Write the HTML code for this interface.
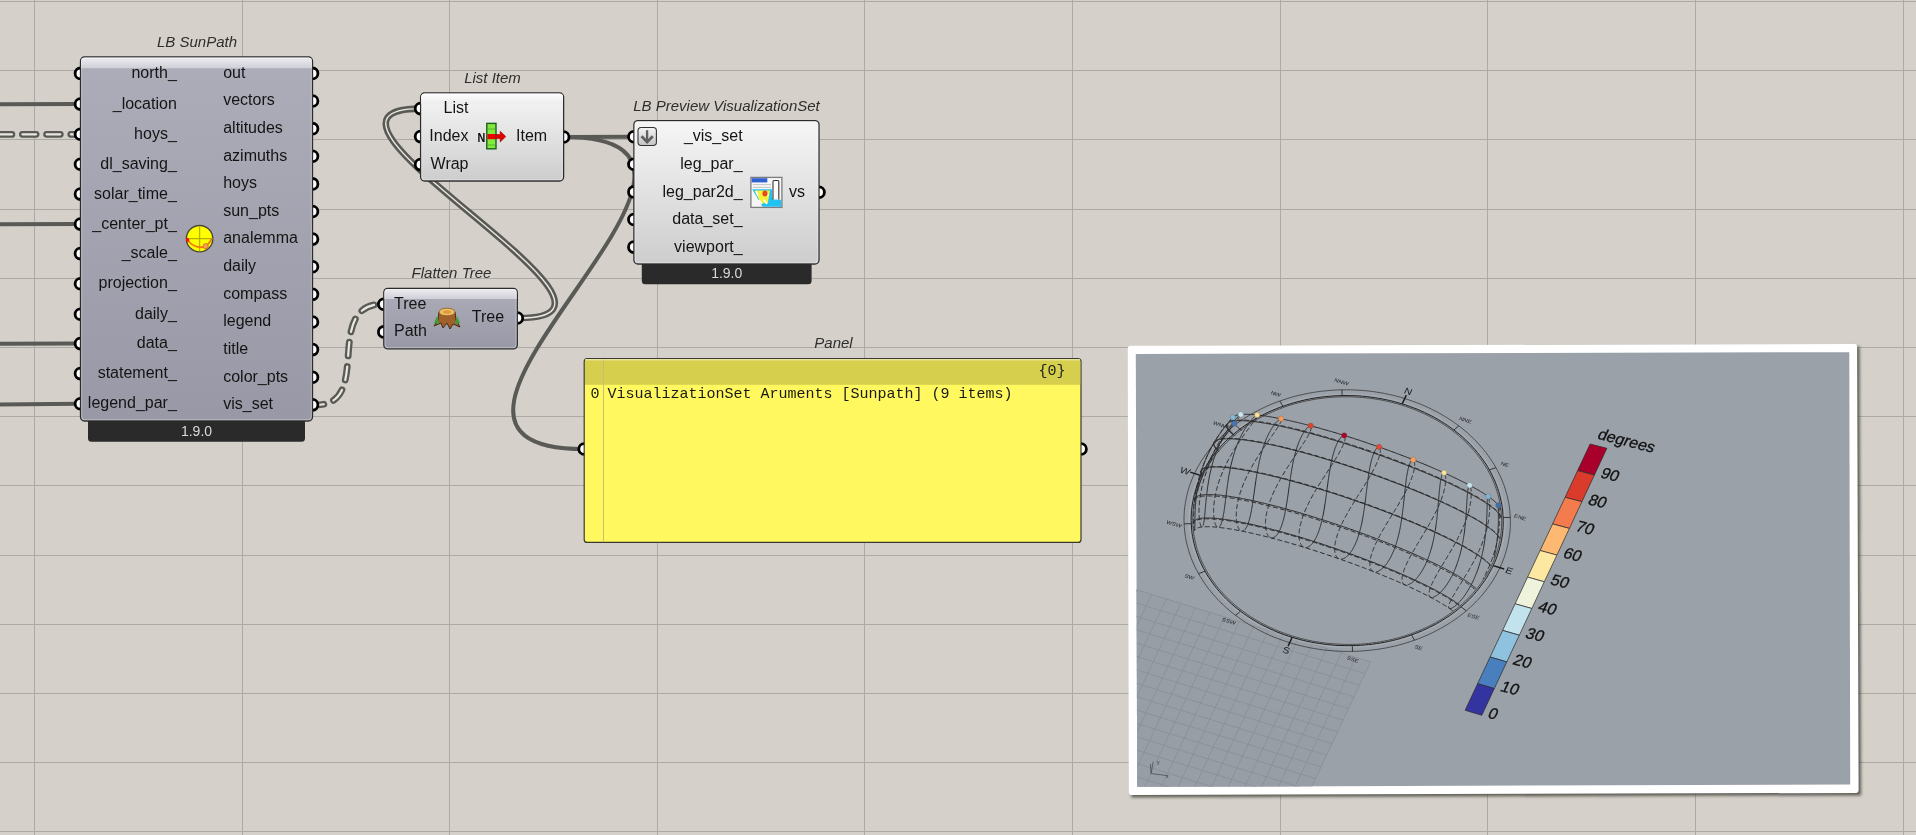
<!DOCTYPE html><html><head><meta charset="utf-8"><style>
html,body{margin:0;padding:0;background:#d5d1ca;width:1916px;height:835px;overflow:hidden}
svg{display:block;will-change:transform}
.t{font-family:"Liberation Sans", sans-serif;font-size:16px;fill:#141414}
.ti{font-family:"Liberation Sans", sans-serif;font-size:15px;font-style:italic;fill:#2e2e2e}
.v{font-family:"Liberation Sans", sans-serif;font-size:14px;fill:#d9d9d9}
.m{font-family:"Liberation Mono", monospace;font-size:15px;fill:#1a1a1a}
</style></head><body>
<svg width="1916" height="835" viewBox="0 0 1916 835">
<defs>
<linearGradient id="gLav" x1="0" y1="0" x2="0" y2="1"><stop offset="0" stop-color="#adadba"/><stop offset="1" stop-color="#9898a6"/></linearGradient>
<linearGradient id="gLavH" x1="0" y1="0" x2="0" y2="1"><stop offset="0" stop-color="#ececf0"/><stop offset="1" stop-color="#cfcfd8"/></linearGradient>
<linearGradient id="gLt" x1="0" y1="0" x2="0" y2="1"><stop offset="0" stop-color="#f6f6f6"/><stop offset="1" stop-color="#cdcdcd"/></linearGradient>
<linearGradient id="gLtH" x1="0" y1="0" x2="0" y2="1"><stop offset="0" stop-color="#fdfdfd"/><stop offset="1" stop-color="#ececec"/></linearGradient>
<linearGradient id="gBtn" x1="0" y1="0" x2="0" y2="1"><stop offset="0" stop-color="#f4f4f4"/><stop offset="1" stop-color="#c4c4c4"/></linearGradient>
</defs>

<rect x="0" y="0" width="1916" height="835" fill="#d5d1ca"/>
<path d="M34.5 0V835 M242.5 0V835 M449.5 0V835 M657.5 0V835 M864.5 0V835 M1072.5 0V835 M1280.5 0V835 M1487.5 0V835 M1695.5 0V835 M1903.5 0V835 M0 1.5H1916 M0 70.5H1916 M0 139.5H1916 M0 209.5H1916 M0 278.5H1916 M0 347.5H1916 M0 416.5H1916 M0 485.5H1916 M0 555.5H1916 M0 624.5H1916 M0 693.5H1916 M0 762.5H1916 M0 831.5H1916" stroke="#000" stroke-opacity="0.19" stroke-width="1" fill="none" shape-rendering="crispEdges"/>
<path d="M0 104.3 L80 104" stroke="#595955" stroke-width="4" fill="none"/>
<path d="M-1.8 134.4 L80 134.3" stroke="#595955" stroke-width="6.8" fill="none" stroke-dasharray="13.7 10.5" stroke-dashoffset="0" stroke-linecap="round"/>
<path d="M-1.8 134.4 L80 134.3" stroke="#ebe8e2" stroke-width="2.2" fill="none" stroke-dasharray="13.7 10.5" stroke-dashoffset="0" stroke-linecap="round"/>
<path d="M0 224.3 L80 224.1" stroke="#595955" stroke-width="4" fill="none"/>
<path d="M0 343.8 L80 343.6" stroke="#595955" stroke-width="4" fill="none"/>
<path d="M0 404.5 L80 403.8" stroke="#595955" stroke-width="4" fill="none"/>
<path d="M316 405 C374 405 321.5 304 383.5 304" stroke="#595955" stroke-width="6.8" fill="none" stroke-dasharray="13.7 10.5" stroke-dashoffset="6" stroke-linecap="round"/>
<path d="M316 405 C374 405 321.5 304 383.5 304" stroke="#ebe8e2" stroke-width="2.2" fill="none" stroke-dasharray="13.7 10.5" stroke-dashoffset="6" stroke-linecap="round"/>
<path d="M520 318 C672 318 268.6 108.6 420.6 108.6" stroke="#595955" stroke-width="6.6" fill="none"/>
<path d="M520 318 C672 318 268.6 108.6 420.6 108.6" stroke="#ebe8e2" stroke-width="1.4" fill="none"/>
<path d="M563.6 137 L633.9 136.7" stroke="#595955" stroke-width="4" fill="none"/>
<path d="M563.6 137 C800.6 137 347 449 584 449" stroke="#595955" stroke-width="4" fill="none"/>
<circle cx="80.5" cy="73.4" r="5.4" fill="#fff" stroke="#000" stroke-width="2.8"/>
<circle cx="80.5" cy="104.1" r="5.4" fill="#fff" stroke="#000" stroke-width="2.8"/>
<circle cx="80.5" cy="134.3" r="5.4" fill="#fff" stroke="#000" stroke-width="2.8"/>
<circle cx="80.5" cy="164.2" r="5.4" fill="#fff" stroke="#000" stroke-width="2.8"/>
<circle cx="80.5" cy="194.1" r="5.4" fill="#fff" stroke="#000" stroke-width="2.8"/>
<circle cx="80.5" cy="224.1" r="5.4" fill="#fff" stroke="#000" stroke-width="2.8"/>
<circle cx="80.5" cy="253.6" r="5.4" fill="#fff" stroke="#000" stroke-width="2.8"/>
<circle cx="80.5" cy="283.8" r="5.4" fill="#fff" stroke="#000" stroke-width="2.8"/>
<circle cx="80.5" cy="314.2" r="5.4" fill="#fff" stroke="#000" stroke-width="2.8"/>
<circle cx="80.5" cy="343.6" r="5.4" fill="#fff" stroke="#000" stroke-width="2.8"/>
<circle cx="80.5" cy="373.6" r="5.4" fill="#fff" stroke="#000" stroke-width="2.8"/>
<circle cx="80.5" cy="403.8" r="5.4" fill="#fff" stroke="#000" stroke-width="2.8"/>
<circle cx="312.5" cy="73.4" r="5.4" fill="#fff" stroke="#000" stroke-width="2.8"/>
<circle cx="312.5" cy="101.02000000000001" r="5.4" fill="#fff" stroke="#000" stroke-width="2.8"/>
<circle cx="312.5" cy="128.64000000000001" r="5.4" fill="#fff" stroke="#000" stroke-width="2.8"/>
<circle cx="312.5" cy="156.26" r="5.4" fill="#fff" stroke="#000" stroke-width="2.8"/>
<circle cx="312.5" cy="183.88" r="5.4" fill="#fff" stroke="#000" stroke-width="2.8"/>
<circle cx="312.5" cy="211.5" r="5.4" fill="#fff" stroke="#000" stroke-width="2.8"/>
<circle cx="312.5" cy="239.12" r="5.4" fill="#fff" stroke="#000" stroke-width="2.8"/>
<circle cx="312.5" cy="266.74" r="5.4" fill="#fff" stroke="#000" stroke-width="2.8"/>
<circle cx="312.5" cy="294.36" r="5.4" fill="#fff" stroke="#000" stroke-width="2.8"/>
<circle cx="312.5" cy="321.98" r="5.4" fill="#fff" stroke="#000" stroke-width="2.8"/>
<circle cx="312.5" cy="349.6" r="5.4" fill="#fff" stroke="#000" stroke-width="2.8"/>
<circle cx="312.5" cy="377.22" r="5.4" fill="#fff" stroke="#000" stroke-width="2.8"/>
<circle cx="312.5" cy="404.84000000000003" r="5.4" fill="#fff" stroke="#000" stroke-width="2.8"/>
<path d="M88 417 H305 V438.2 Q305 441.7 301.5 441.7 H91.5 Q88 441.7 88 438.2 Z" fill="#2a2a2a"/>
<text class="v" x="196.5" y="435.7" text-anchor="middle">1.9.0</text>
<rect x="80.5" y="57" width="232.0" height="364" rx="4" fill="url(#gLav)" stroke="#2c2c2c" stroke-width="1.3"/>
<path d="M81.1 68.2 V61 Q81.1 57.6 84.5 57.6 H308.5 Q311.9 57.6 311.9 61 V68.2 Z" fill="url(#gLavH)"/>
<rect x="81.7" y="58.2" width="229.6" height="361.6" rx="3" fill="none" stroke="#ffffff" stroke-opacity="0.35" stroke-width="1"/>
<text class="ti" x="197" y="47" text-anchor="middle">LB SunPath</text>
<text class="t" x="176.8" y="77.9" text-anchor="end">north_</text>
<text class="t" x="176.8" y="108.6" text-anchor="end">_location</text>
<text class="t" x="176.8" y="138.8" text-anchor="end">hoys_</text>
<text class="t" x="176.8" y="168.7" text-anchor="end">dl_saving_</text>
<text class="t" x="176.8" y="198.6" text-anchor="end">solar_time_</text>
<text class="t" x="176.8" y="228.6" text-anchor="end">_center_pt_</text>
<text class="t" x="176.8" y="258.1" text-anchor="end">_scale_</text>
<text class="t" x="176.8" y="288.3" text-anchor="end">projection_</text>
<text class="t" x="176.8" y="318.7" text-anchor="end">daily_</text>
<text class="t" x="176.8" y="348.1" text-anchor="end">data_</text>
<text class="t" x="176.8" y="378.1" text-anchor="end">statement_</text>
<text class="t" x="176.8" y="408.3" text-anchor="end">legend_par_</text>
<text class="t" x="223.2" y="77.7">out</text>
<text class="t" x="223.2" y="105.3">vectors</text>
<text class="t" x="223.2" y="132.9">altitudes</text>
<text class="t" x="223.2" y="160.6">azimuths</text>
<text class="t" x="223.2" y="188.2">hoys</text>
<text class="t" x="223.2" y="215.8">sun_pts</text>
<text class="t" x="223.2" y="243.4">analemma</text>
<text class="t" x="223.2" y="271.0">daily</text>
<text class="t" x="223.2" y="298.7">compass</text>
<text class="t" x="223.2" y="326.3">legend</text>
<text class="t" x="223.2" y="353.9">title</text>
<text class="t" x="223.2" y="381.5">color_pts</text>
<text class="t" x="223.2" y="409.1">vis_set</text>
<g transform="translate(199.6 238.7)">
<circle r="13.2" fill="#ffff00" stroke="#4a4a3a" stroke-width="1.4"/>
<path d="M0 -12.5V12.5M-12.5 0H12.5" stroke="#b8b000" stroke-width="1.3"/>
<path d="M-12 1.5 Q-6 9 3 8.5 Q9 7 12.5 -0.5" stroke="#f07a10" stroke-width="1.8" fill="none"/>
<circle cx="-12" cy="1.2" r="1.8" fill="#ff1010"/>
<circle cx="6" cy="7.5" r="2.6" fill="#f4a050" stroke="#d07020" stroke-width="0.8"/>
</g>
<circle cx="420.6" cy="108.6" r="5.4" fill="#fff" stroke="#000" stroke-width="2.8"/>
<circle cx="420.6" cy="136.6" r="5.4" fill="#fff" stroke="#000" stroke-width="2.8"/>
<circle cx="420.6" cy="164.6" r="5.4" fill="#fff" stroke="#000" stroke-width="2.8"/>
<circle cx="563.6" cy="137" r="5.4" fill="#fff" stroke="#000" stroke-width="2.8"/>
<rect x="420.6" y="93" width="143.0" height="88" rx="4" fill="url(#gLt)" stroke="#2c2c2c" stroke-width="1.3"/>
<path d="M421.20000000000005 104 V97 Q421.20000000000005 93.6 424.6 93.6 H559.6 Q563.0 93.6 563.0 97 V104 Z" fill="url(#gLtH)"/>
<rect x="421.8" y="94.2" width="140.6" height="85.6" rx="3" fill="none" stroke="#ffffff" stroke-opacity="0.35" stroke-width="1"/>
<text class="ti" x="492.5" y="82.6" text-anchor="middle">List Item</text>
<text class="t" x="468.5" y="113.2" text-anchor="end">List</text>
<text class="t" x="468.5" y="141.2" text-anchor="end">Index</text>
<text class="t" x="468.5" y="169.2" text-anchor="end">Wrap</text>
<text class="t" x="516" y="141.4">Item</text>
<g>
<text x="477.4" y="141.9" textLength="7.8" lengthAdjust="spacingAndGlyphs" style="font-family:'Liberation Sans',sans-serif;font-weight:bold;font-size:13.6px" fill="#0a0a0a">N</text>
<rect x="486.8" y="123.4" width="9.2" height="25.4" fill="#86e83c" stroke="#17601a" stroke-width="1.4"/>
<path d="M487.5 129H495M487.5 145H495" stroke="#4fb82a" stroke-width="1"/>
<rect x="487.4" y="134" width="7.8" height="5.2" fill="#ee0000"/>
<path d="M495.5 134.6H500.2V131.2L505.8 136.6L500.2 142V138.6H495.5Z" fill="#e00000" stroke="#900" stroke-width="0.6"/>
</g>
<circle cx="383.8" cy="304.3" r="5.4" fill="#fff" stroke="#000" stroke-width="2.8"/>
<circle cx="383.8" cy="331.9" r="5.4" fill="#fff" stroke="#000" stroke-width="2.8"/>
<circle cx="517.3" cy="318" r="5.4" fill="#fff" stroke="#000" stroke-width="2.8"/>
<rect x="383.8" y="288.4" width="133.49999999999994" height="60.5" rx="4" fill="url(#gLav)" stroke="#2c2c2c" stroke-width="1.3"/>
<path d="M384.40000000000003 298.9 V292.4 Q384.40000000000003 289.0 387.8 289.0 H513.3 Q516.6999999999999 289.0 516.6999999999999 292.4 V298.9 Z" fill="url(#gLavH)"/>
<rect x="385.0" y="289.59999999999997" width="131.09999999999994" height="58.1" rx="3" fill="none" stroke="#ffffff" stroke-opacity="0.35" stroke-width="1"/>
<text class="ti" x="451.5" y="278" text-anchor="middle">Flatten Tree</text>
<text class="t" x="394" y="308.6">Tree</text>
<text class="t" x="394" y="335.8">Path</text>
<text class="t" x="471.8" y="322.4">Tree</text>
<g transform="translate(447 318)">
<path d="M-13 8 L-9 2 L-8 -6 Q0 -10 8 -6 L9 2 L13 9 L6 6 L3 11 L0 5 L-4 10 L-6 5 Z" fill="#a0602a" stroke="#4a2a10" stroke-width="1"/>
<ellipse cx="0" cy="-6" rx="8" ry="3.8" fill="#f0c060" stroke="#8a5a20" stroke-width="0.8"/>
<ellipse cx="0" cy="-6" rx="4" ry="1.8" fill="#d89a40"/>
<path d="M-13 5 L-10 -2 L-8 6Z M13 5 L10 -2 L8 6Z" fill="#3aa03a"/>
</g>
<circle cx="633.9" cy="136.7" r="5.4" fill="#fff" stroke="#000" stroke-width="2.8"/>
<circle cx="633.9" cy="164.29999999999998" r="5.4" fill="#fff" stroke="#000" stroke-width="2.8"/>
<circle cx="633.9" cy="191.89999999999998" r="5.4" fill="#fff" stroke="#000" stroke-width="2.8"/>
<circle cx="633.9" cy="219.5" r="5.4" fill="#fff" stroke="#000" stroke-width="2.8"/>
<circle cx="633.9" cy="247.1" r="5.4" fill="#fff" stroke="#000" stroke-width="2.8"/>
<circle cx="819" cy="192.3" r="5.4" fill="#fff" stroke="#000" stroke-width="2.8"/>
<path d="M641.8 260 H811.6 V280.7 Q811.6 284.2 808.1 284.2 H645.3 Q641.8 284.2 641.8 280.7 Z" fill="#2a2a2a"/>
<text class="v" x="726.7" y="278.2" text-anchor="middle">1.9.0</text>
<rect x="633.9" y="120.6" width="185.10000000000002" height="143.4" rx="4" fill="url(#gLt)" stroke="#2c2c2c" stroke-width="1.3"/>
<rect x="635.1" y="121.8" width="182.70000000000002" height="141.0" rx="3" fill="none" stroke="#ffffff" stroke-opacity="0.35" stroke-width="1"/>
<text class="ti" x="726.5" y="110.8" text-anchor="middle">LB Preview VisualizationSet</text>
<text class="t" x="742.6" y="141.3" text-anchor="end">_vis_set</text>
<text class="t" x="742.6" y="168.9" text-anchor="end">leg_par_</text>
<text class="t" x="742.6" y="196.5" text-anchor="end">leg_par2d_</text>
<text class="t" x="742.6" y="224.1" text-anchor="end">data_set_</text>
<text class="t" x="742.6" y="251.7" text-anchor="end">viewport_</text>
<text class="t" x="789" y="196.6">vs</text>
<rect x="638" y="127.5" width="18.4" height="18" rx="3.2" fill="url(#gBtn)" stroke="#333" stroke-width="1.1"/>
<path d="M647.1 130.2V141.6" stroke="#606060" stroke-width="2.3" fill="none"/>
<path d="M641.5 136.3L647.1 142L652.8 136.3" stroke="#606060" stroke-width="2.7" fill="none"/>
<g>
<rect x="750.9" y="177.4" width="31" height="30" fill="#f6f6f6" stroke="#7c7c7c" stroke-width="1.3"/>
<rect x="751.7" y="178.2" width="15.6" height="4.2" fill="#2f5fd0"/>
<path d="M753 184.6H771M753 187.4H771" stroke="#c4c4c4" stroke-width="1"/>
<path d="M752.2 189.2 H772 V198 L781.2 200 V206.8 H762.5 Z" fill="#22c2f2"/>
<path d="M754.6 190.6 H770 L767.8 203.2 H760.8 Z" fill="#f4f23c"/>
<path d="M756 191 L758 196 M766 191 L768 196 M759 200 L762 204 M764 200 L767 204" stroke="#ffffff" stroke-width="1.6"/>
<ellipse cx="765" cy="193.6" rx="2.6" ry="3" fill="#ea4a12"/>
<path d="M773 199.5 V181.6 Q773 180.5 774 180.5 H777.8 Q778.8 180.5 778.8 181.6 V199.5" fill="#fff" stroke="#333" stroke-width="1.1"/>
</g>
<circle cx="584.2" cy="449" r="5.4" fill="#fff" stroke="#000" stroke-width="2.8"/>
<circle cx="1081" cy="449" r="5.4" fill="#fff" stroke="#000" stroke-width="2.8"/>
<rect x="584.2" y="358.6" width="496.79999999999995" height="183.79999999999995" rx="3" fill="#fff85e" stroke="#3a3a30" stroke-width="1.2"/>
<rect x="585.0" y="359.40000000000003" width="495.19999999999993" height="25.399999999999988" fill="#d6cf4e"/>
<path d="M585.2 359.8H1080" stroke="#f4f0c0" stroke-width="1"/>
<path d="M603.5 359.6V541.4" stroke="#c8c070" stroke-width="1"/>
<text class="ti" x="833.5" y="348" text-anchor="middle">Panel</text>
<text class="m" x="1038.5" y="375">{0}</text>
<text class="m" x="590.5" y="397.8">0</text>
<text class="m" x="607.5" y="397.8">VisualizationSet Aruments [Sunpath] (9 items)</text>
<defs><filter id="fsh" x="-5%" y="-5%" width="110%" height="110%"><feGaussianBlur stdDeviation="1.8"/></filter>
<clipPath id="vpclip"><polygon points="1135.8,353.9 1849.3,352.2 1850.2,784.6 1137.2,786.8"/></clipPath></defs>
<polygon points="1130.2,348.3 1859.6,346.6 1861.1,795.4 1131.3,797.5" fill="#3a3832" fill-opacity="0.75" filter="url(#fsh)"/>
<polygon points="1130.2,348.3 1854.6,346.6 1856.1,790.4 1131.3,792.5" fill="#ffffff" stroke="#ffffff" stroke-width="5" stroke-linejoin="round" transform="translate(0 0)"/>
<polygon points="1135.8,353.9 1849.3,352.2 1850.2,784.6 1137.2,786.8" fill="#9ba1a9"/>
<g clip-path="url(#vpclip)">
<polygon points="1370.6,661.9 874.2,508.9 687.2,905.7 1183.6,1058.7" fill="#989ea6"/>
<path d="M1370.6 661.9L1183.6 1058.7M1356.0 657.4L1169.0 1054.2M1341.4 652.9L1154.4 1049.7M1326.8 648.4L1139.8 1045.2M1312.2 643.9L1125.2 1040.7M1297.6 639.4L1110.6 1036.2M1283.0 634.9L1096.0 1031.7M1268.4 630.4L1081.4 1027.2M1253.8 625.9L1066.8 1022.7M1239.2 621.4L1052.2 1018.2M1224.6 616.9L1037.6 1013.7M1210.0 612.4L1023.0 1009.2M1195.4 607.9L1008.4 1004.7M1180.8 603.4L993.8 1000.2M1166.2 598.9L979.2 995.7M1151.6 594.4L964.6 991.2M1137.0 589.9L950.0 986.7M1122.4 585.4L935.4 982.2M1107.8 580.9L920.8 977.7M1093.2 576.4L906.2 973.2M1078.6 571.9L891.6 968.7M1064.0 567.4L877.0 964.2M1049.4 562.9L862.4 959.7M1034.8 558.4L847.8 955.2M1020.2 553.9L833.2 950.7M1005.6 549.4L818.6 946.2M991.0 544.9L804.0 941.7M976.4 540.4L789.4 937.2M961.8 535.9L774.8 932.7M947.2 531.4L760.2 928.2M932.6 526.9L745.6 923.7M918.0 522.4L731.0 919.2M903.4 517.9L716.4 914.7M888.8 513.4L701.8 910.2M874.2 508.9L687.2 905.7M1370.6 661.9L874.2 508.9M1365.1 673.6L868.7 520.6M1359.6 685.2L863.2 532.2M1354.1 696.9L857.7 543.9M1348.6 708.6L852.2 555.6M1343.1 720.2L846.7 567.2M1337.6 731.9L841.2 578.9M1332.1 743.6L835.7 590.6M1326.6 755.3L830.2 602.3M1321.1 766.9L824.7 613.9M1315.6 778.6L819.2 625.6M1310.1 790.3L813.7 637.3M1304.6 801.9L808.2 648.9M1299.1 813.6L802.7 660.6M1293.6 825.3L797.2 672.3M1288.1 837.0L791.7 684.0M1282.6 848.6L786.2 695.6M1277.1 860.3L780.7 707.3M1271.6 872.0L775.2 719.0M1266.1 883.6L769.7 730.6M1260.6 895.3L764.2 742.3M1255.1 907.0L758.7 754.0M1249.6 918.6L753.2 765.6M1244.1 930.3L747.7 777.3M1238.6 942.0L742.2 789.0M1233.1 953.7L736.7 800.7M1227.6 965.3L731.2 812.3M1222.1 977.0L725.7 824.0M1216.6 988.7L720.2 835.7M1211.1 1000.3L714.7 847.3M1205.6 1012.0L709.2 859.0M1200.1 1023.7L703.7 870.7M1194.6 1035.3L698.2 882.3M1189.1 1047.0L692.7 894.0M1183.6 1058.7L687.2 905.7" stroke="#878d94" stroke-width="0.75" fill="none"/>
<polyline points="1491.7,565.1 1493.1,562.1 1494.4,559.0 1495.6,555.9 1496.6,552.8 1497.6,549.7 1498.5,546.5 1499.2,543.3 1499.9,540.2 1500.5,536.9 1500.9,533.7 1501.3,530.5 1501.5,527.3 1501.6,524.0 1501.7,520.8 1501.6,517.5 1501.4,514.3 1501.1,511.1 1500.7,507.8 1500.2,504.6 1499.6,501.4 1498.9,498.2 1498.1,495.0 1497.2,491.9 1496.1,488.7 1495.0,485.6 1493.8,482.5 1492.5,479.4 1491.0,476.4 1489.5,473.4 1487.9,470.4 1486.2,467.5 1484.4,464.6 1482.5,461.7 1480.5,458.9 1478.4,456.1 1476.2,453.3 1473.9,450.6 1471.6,448.0 1469.1,445.4 1466.6,442.8 1464.0,440.3 1461.3,437.9 1458.6,435.5 1455.7,433.2 1452.8,430.9 1449.8,428.7 1446.8,426.6 1443.7,424.5 1440.5,422.5 1437.2,420.5 1433.9,418.7 1430.5,416.9 1427.1,415.1 1423.6,413.5 1420.1,411.9 1416.5,410.4 1412.8,408.9 1409.1,407.6 1405.4,406.3 1401.7,405.1 1397.8,403.9 1394.0,402.9 1390.1,401.9 1386.2,401.0 1382.3,400.2 1378.4,399.5 1374.4,398.9 1370.4,398.3 1366.4,397.9 1362.4,397.5 1358.4,397.2 1354.3,397.0 1350.3,396.8 1346.2,396.8 1342.2,396.8 1338.2,396.9 1334.1,397.1 1330.1,397.4 1326.1,397.8 1322.1,398.3 1318.1,398.8 1314.1,399.4 1310.2,400.2 1306.3,400.9 1302.4,401.8 1298.6,402.8 1294.7,403.8 1290.9,404.9 1287.2,406.1 1283.5,407.4 1279.8,408.8 1276.2,410.2 1272.7,411.7 1269.1,413.3 1265.7,414.9 1262.3,416.6 1258.9,418.4 1255.6,420.3 1252.4,422.2 1249.2,424.3 1246.2,426.3 1243.1,428.5 1240.2,430.7 1237.3,432.9 1234.5,435.2 1231.8,437.6 1229.1,440.0 1226.6,442.5 1224.1,445.1 1221.7,447.7 1219.4,450.3 1217.1,453.0 1215.0,455.7 1213.0,458.5 1211.0,461.4 1209.1,464.2 1207.4,467.1 1205.7,470.1 1204.1,473.0 1202.7,476.1 1201.3,479.1 1200.0,482.2 1198.8,485.3 1197.8,488.4 1196.8,491.5 1195.9,494.7 1195.2,497.9 1194.5,501.0 1193.9,504.3 1193.5,507.5 1193.1,510.7 1192.9,513.9 1192.8,517.2 1192.7,520.4 1192.8,523.7 1193.0,526.9 1193.3,530.1 1193.7,533.4 1194.2,536.6 1194.8,539.8 1195.5,543.0 1196.3,546.2 1197.2,549.3 1198.3,552.5 1199.4,555.6 1200.6,558.7 1201.9,561.8 1203.4,564.8 1204.9,567.8 1206.5,570.8 1208.2,573.7 1210.0,576.6 1211.9,579.5 1213.9,582.3 1216.0,585.1 1218.2,587.9 1220.5,590.6 1222.8,593.2 1225.3,595.8 1227.8,598.4 1230.4,600.9 1233.1,603.3 1235.8,605.7 1238.7,608.0 1241.6,610.3 1244.6,612.5 1247.6,614.6 1250.7,616.7 1253.9,618.7 1257.2,620.7 1260.5,622.5 1263.9,624.3 1267.3,626.1 1270.8,627.7 1274.3,629.3 1277.9,630.8 1281.6,632.3 1285.3,633.6 1289.0,634.9 1292.8,636.1 1296.6,637.3 1300.4,638.3 1304.3,639.3 1308.2,640.2 1312.1,641.0 1316.0,641.7 1320.0,642.3 1324.0,642.9 1328.0,643.3 1332.0,643.7 1336.0,644.0 1340.1,644.2 1344.1,644.4 1348.2,644.4 1352.2,644.4 1356.2,644.3 1360.3,644.1 1364.3,643.8 1368.3,643.4 1372.3,642.9 1376.3,642.4 1380.3,641.8 1384.2,641.0 1388.1,640.3 1392.0,639.4 1395.8,638.4 1399.7,637.4 1403.5,636.3 1407.2,635.1 1410.9,633.8 1414.6,632.4 1418.2,631.0 1421.7,629.5 1425.3,627.9 1428.7,626.3 1432.1,624.6 1435.5,622.8 1438.8,620.9 1442.0,619.0 1445.2,616.9 1448.2,614.9 1451.3,612.7 1454.2,610.5 1457.1,608.3 1459.9,606.0 1462.6,603.6 1465.3,601.2 1467.8,598.7 1470.3,596.1 1472.7,593.5 1475.0,590.9 1477.3,588.2 1479.4,585.5 1481.4,582.7 1483.4,579.8 1485.3,577.0 1487.0,574.1 1488.7,571.1 1490.3,568.2 1491.7,565.1" fill="none" stroke="#3a3a3a" stroke-width="0.8"/>
<polyline points="1493.2,565.6 1494.6,562.5 1495.9,559.4 1497.1,556.3 1498.1,553.2 1499.1,550.0 1500.0,546.8 1500.8,543.6 1501.4,540.4 1502.0,537.1 1502.5,533.9 1502.8,530.6 1503.1,527.3 1503.2,524.1 1503.2,520.8 1503.1,517.5 1502.9,514.2 1502.7,511.0 1502.3,507.7 1501.8,504.5 1501.1,501.2 1500.4,498.0 1499.6,494.8 1498.7,491.6 1497.6,488.4 1496.5,485.3 1495.3,482.1 1493.9,479.0 1492.5,476.0 1491.0,472.9 1489.3,469.9 1487.6,466.9 1485.8,464.0 1483.8,461.1 1481.8,458.2 1479.7,455.4 1477.5,452.6 1475.2,449.9 1472.8,447.2 1470.4,444.6 1467.8,442.0 1465.2,439.5 1462.5,437.0 1459.7,434.6 1456.8,432.3 1453.9,430.0 1450.9,427.8 1447.8,425.6 1444.6,423.5 1441.4,421.5 1438.1,419.5 1434.8,417.6 1431.4,415.8 1427.9,414.1 1424.4,412.4 1420.8,410.8 1417.2,409.2 1413.5,407.8 1409.8,406.4 1406.0,405.1 1402.2,403.9 1398.4,402.8 1394.5,401.7 1390.6,400.7 1386.6,399.8 1382.7,399.0 1378.7,398.3 1374.7,397.7 1370.6,397.1 1366.6,396.6 1362.5,396.2 1358.5,395.9 1354.4,395.7 1350.3,395.6 1346.2,395.5 1342.1,395.6 1338.1,395.7 1334.0,395.9 1329.9,396.2 1325.9,396.6 1321.8,397.0 1317.8,397.6 1313.8,398.2 1309.8,398.9 1305.9,399.7 1302.0,400.6 1298.1,401.6 1294.2,402.6 1290.4,403.8 1286.6,405.0 1282.9,406.3 1279.2,407.6 1275.5,409.1 1271.9,410.6 1268.3,412.2 1264.9,413.9 1261.4,415.6 1258.0,417.4 1254.7,419.3 1251.5,421.3 1248.3,423.3 1245.1,425.4 1242.1,427.5 1239.1,429.7 1236.2,432.0 1233.4,434.4 1230.6,436.8 1227.9,439.2 1225.3,441.7 1222.8,444.3 1220.4,446.9 1218.1,449.6 1215.8,452.3 1213.7,455.1 1211.6,457.9 1209.6,460.8 1207.7,463.6 1206.0,466.6 1204.3,469.6 1202.7,472.6 1201.2,475.6 1199.8,478.7 1198.5,481.8 1197.3,484.9 1196.3,488.0 1195.3,491.2 1194.4,494.4 1193.6,497.6 1193.0,500.8 1192.4,504.1 1191.9,507.3 1191.6,510.6 1191.3,513.9 1191.2,517.1 1191.2,520.4 1191.3,523.7 1191.5,527.0 1191.7,530.2 1192.1,533.5 1192.6,536.7 1193.3,540.0 1194.0,543.2 1194.8,546.4 1195.7,549.6 1196.8,552.8 1197.9,555.9 1199.1,559.1 1200.5,562.2 1201.9,565.2 1203.4,568.3 1205.1,571.3 1206.8,574.3 1208.6,577.2 1210.6,580.1 1212.6,583.0 1214.7,585.8 1216.9,588.6 1219.2,591.3 1221.6,594.0 1224.0,596.6 1226.6,599.2 1229.2,601.7 1231.9,604.2 1234.7,606.6 1237.6,608.9 1240.5,611.2 1243.5,613.4 1246.6,615.6 1249.8,617.7 1253.0,619.7 1256.3,621.7 1259.6,623.6 1263.0,625.4 1266.5,627.1 1270.0,628.8 1273.6,630.4 1277.2,632.0 1280.9,633.4 1284.6,634.8 1288.4,636.1 1292.2,637.3 1296.0,638.4 1299.9,639.5 1303.8,640.5 1307.8,641.4 1311.7,642.2 1315.7,642.9 1319.7,643.5 1323.8,644.1 1327.8,644.6 1331.9,645.0 1335.9,645.3 1340.0,645.5 1344.1,645.6 1348.2,645.7 1352.3,645.6 1356.3,645.5 1360.4,645.3 1364.5,645.0 1368.5,644.6 1372.6,644.2 1376.6,643.6 1380.6,643.0 1384.6,642.3 1388.5,641.5 1392.4,640.6 1396.3,639.6 1400.2,638.6 1404.0,637.4 1407.8,636.2 1411.5,634.9 1415.2,633.6 1418.9,632.1 1422.5,630.6 1426.1,629.0 1429.5,627.3 1433.0,625.6 1436.4,623.8 1439.7,621.9 1442.9,619.9 1446.1,617.9 1449.3,615.8 1452.3,613.7 1455.3,611.5 1458.2,609.2 1461.0,606.8 1463.8,604.4 1466.5,602.0 1469.1,599.5 1471.6,596.9 1474.0,594.3 1476.3,591.6 1478.6,588.9 1480.7,586.1 1482.8,583.3 1484.8,580.4 1486.7,577.6 1488.4,574.6 1490.1,571.6 1491.7,568.6 1493.2,565.6" fill="none" stroke="#222" stroke-width="1.0"/>
<polyline points="1495.0,566.1 1496.4,563.0 1497.7,559.9 1498.9,556.7 1500.0,553.5 1501.0,550.3 1501.8,547.1 1502.6,543.9 1503.3,540.6 1503.9,537.3 1504.3,534.0 1504.7,530.7 1504.9,527.4 1505.1,524.1 1505.1,520.8 1505.0,517.5 1504.8,514.2 1504.5,510.9 1504.1,507.6 1503.6,504.3 1503.0,501.0 1502.3,497.7 1501.4,494.5 1500.5,491.2 1499.5,488.0 1498.3,484.8 1497.1,481.7 1495.7,478.5 1494.2,475.4 1492.7,472.3 1491.0,469.3 1489.3,466.3 1487.4,463.3 1485.5,460.4 1483.4,457.5 1481.3,454.6 1479.1,451.8 1476.8,449.1 1474.4,446.4 1471.9,443.7 1469.3,441.1 1466.6,438.5 1463.9,436.0 1461.0,433.6 1458.1,431.2 1455.2,428.9 1452.1,426.7 1449.0,424.5 1445.8,422.4 1442.5,420.3 1439.2,418.3 1435.8,416.4 1432.4,414.5 1428.9,412.8 1425.3,411.1 1421.7,409.5 1418.0,407.9 1414.3,406.4 1410.5,405.0 1406.7,403.7 1402.9,402.5 1399.0,401.3 1395.1,400.3 1391.1,399.3 1387.1,398.4 1383.1,397.6 1379.1,396.8 1375.0,396.2 1370.9,395.6 1366.8,395.1 1362.7,394.7 1358.6,394.4 1354.5,394.2 1350.3,394.1 1346.2,394.0 1342.1,394.1 1338.0,394.2 1333.8,394.4 1329.7,394.7 1325.6,395.1 1321.5,395.6 1317.5,396.1 1313.4,396.7 1309.4,397.5 1305.4,398.3 1301.4,399.2 1297.5,400.2 1293.6,401.2 1289.7,402.4 1285.9,403.6 1282.1,404.9 1278.3,406.3 1274.6,407.7 1271.0,409.3 1267.4,410.9 1263.9,412.6 1260.4,414.3 1257.0,416.2 1253.6,418.1 1250.3,420.1 1247.1,422.1 1243.9,424.2 1240.8,426.4 1237.8,428.7 1234.9,431.0 1232.0,433.3 1229.2,435.8 1226.5,438.2 1223.9,440.8 1221.3,443.4 1218.9,446.0 1216.5,448.7 1214.2,451.5 1212.1,454.3 1210.0,457.1 1208.0,460.0 1206.1,463.0 1204.3,465.9 1202.6,468.9 1201.0,472.0 1199.4,475.1 1198.0,478.2 1196.7,481.3 1195.5,484.5 1194.4,487.7 1193.4,490.9 1192.6,494.1 1191.8,497.3 1191.1,500.6 1190.5,503.9 1190.1,507.2 1189.7,510.5 1189.5,513.8 1189.3,517.1 1189.3,520.4 1189.4,523.7 1189.6,527.0 1189.9,530.3 1190.3,533.6 1190.8,536.9 1191.4,540.2 1192.1,543.5 1193.0,546.7 1193.9,550.0 1194.9,553.2 1196.1,556.4 1197.3,559.5 1198.7,562.7 1200.2,565.8 1201.7,568.9 1203.4,571.9 1205.1,574.9 1207.0,577.9 1208.9,580.8 1211.0,583.7 1213.1,586.6 1215.3,589.4 1217.6,592.1 1220.0,594.8 1222.5,597.5 1225.1,600.1 1227.8,602.7 1230.5,605.2 1233.4,607.6 1236.3,610.0 1239.2,612.3 1242.3,614.5 1245.4,616.7 1248.6,618.8 1251.9,620.9 1255.2,622.9 1258.6,624.8 1262.0,626.7 1265.5,628.4 1269.1,630.1 1272.7,631.7 1276.4,633.3 1280.1,634.8 1283.9,636.2 1287.7,637.5 1291.5,638.7 1295.4,639.9 1299.3,640.9 1303.3,641.9 1307.3,642.8 1311.3,643.6 1315.3,644.4 1319.4,645.0 1323.5,645.6 1327.6,646.1 1331.7,646.5 1335.8,646.8 1339.9,647.0 1344.1,647.1 1348.2,647.2 1352.3,647.1 1356.4,647.0 1360.6,646.8 1364.7,646.5 1368.8,646.1 1372.9,645.6 1376.9,645.1 1381.0,644.5 1385.0,643.7 1389.0,642.9 1393.0,642.0 1396.9,641.0 1400.8,640.0 1404.7,638.8 1408.5,637.6 1412.3,636.3 1416.1,634.9 1419.8,633.5 1423.4,631.9 1427.0,630.3 1430.5,628.6 1434.0,626.9 1437.4,625.0 1440.8,623.1 1444.1,621.1 1447.3,619.1 1450.5,617.0 1453.6,614.8 1456.6,612.5 1459.5,610.2 1462.4,607.9 1465.2,605.4 1467.9,603.0 1470.5,600.4 1473.1,597.8 1475.5,595.2 1477.9,592.5 1480.2,589.7 1482.3,586.9 1484.4,584.1 1486.4,581.2 1488.3,578.2 1490.1,575.3 1491.8,572.3 1493.4,569.2 1495.0,566.1" fill="none" stroke="#afb4ba" stroke-width="0.7"/>
<polyline points="1499.9,567.7 1501.4,564.5 1502.7,561.2 1504.0,557.9 1505.1,554.7 1506.1,551.3 1507.0,548.0 1507.8,544.6 1508.5,541.3 1509.1,537.9 1509.6,534.5 1510.0,531.1 1510.2,527.6 1510.4,524.2 1510.4,520.8 1510.3,517.4 1510.1,514.0 1509.8,510.5 1509.4,507.1 1508.9,503.7 1508.2,500.3 1507.5,497.0 1506.6,493.6 1505.6,490.3 1504.6,486.9 1503.4,483.6 1502.1,480.4 1500.7,477.1 1499.2,473.9 1497.6,470.7 1495.9,467.6 1494.1,464.5 1492.1,461.4 1490.1,458.3 1488.0,455.4 1485.8,452.4 1483.5,449.5 1481.1,446.7 1478.6,443.9 1476.0,441.1 1473.4,438.4 1470.6,435.8 1467.8,433.2 1464.9,430.7 1461.9,428.2 1458.8,425.8 1455.6,423.5 1452.4,421.2 1449.1,419.1 1445.7,416.9 1442.3,414.9 1438.8,412.9 1435.2,411.0 1431.6,409.2 1427.9,407.4 1424.2,405.7 1420.4,404.1 1416.5,402.6 1412.6,401.2 1408.7,399.8 1404.7,398.5 1400.7,397.3 1396.7,396.2 1392.6,395.2 1388.5,394.3 1384.3,393.4 1380.1,392.7 1375.9,392.0 1371.7,391.4 1367.5,390.9 1363.2,390.5 1359.0,390.2 1354.7,390.0 1350.5,389.8 1346.2,389.8 1341.9,389.8 1337.6,389.9 1333.4,390.2 1329.1,390.5 1324.9,390.9 1320.7,391.4 1316.5,391.9 1312.3,392.6 1308.1,393.3 1304.0,394.2 1299.9,395.1 1295.8,396.1 1291.8,397.2 1287.8,398.4 1283.8,399.7 1279.9,401.0 1276.0,402.4 1272.2,403.9 1268.4,405.5 1264.7,407.2 1261.1,408.9 1257.5,410.8 1253.9,412.7 1250.5,414.6 1247.0,416.7 1243.7,418.8 1240.4,421.0 1237.2,423.2 1234.1,425.6 1231.1,427.9 1228.1,430.4 1225.2,432.9 1222.4,435.5 1219.7,438.1 1217.1,440.8 1214.6,443.5 1212.1,446.3 1209.8,449.2 1207.5,452.1 1205.4,455.0 1203.3,458.0 1201.3,461.0 1199.5,464.1 1197.7,467.2 1196.0,470.4 1194.5,473.5 1193.0,476.7 1191.7,480.0 1190.4,483.3 1189.3,486.5 1188.3,489.9 1187.4,493.2 1186.6,496.6 1185.9,499.9 1185.3,503.3 1184.8,506.7 1184.4,510.1 1184.2,513.6 1184.0,517.0 1184.0,520.4 1184.1,523.8 1184.3,527.2 1184.6,530.7 1185.0,534.1 1185.5,537.5 1186.2,540.9 1186.9,544.2 1187.8,547.6 1188.8,550.9 1189.8,554.3 1191.0,557.6 1192.3,560.8 1193.7,564.1 1195.2,567.3 1196.8,570.5 1198.5,573.6 1200.3,576.7 1202.3,579.8 1204.3,582.9 1206.4,585.8 1208.6,588.8 1210.9,591.7 1213.3,594.5 1215.8,597.3 1218.4,600.1 1221.0,602.8 1223.8,605.4 1226.6,608.0 1229.5,610.5 1232.5,613.0 1235.6,615.4 1238.8,617.7 1242.0,620.0 1245.3,622.1 1248.7,624.3 1252.1,626.3 1255.6,628.3 1259.2,630.2 1262.8,632.0 1266.5,633.8 1270.2,635.5 1274.0,637.1 1277.9,638.6 1281.8,640.0 1285.7,641.4 1289.7,642.7 1293.7,643.9 1297.7,645.0 1301.8,646.0 1305.9,646.9 1310.1,647.8 1314.3,648.5 1318.5,649.2 1322.7,649.8 1326.9,650.3 1331.2,650.7 1335.4,651.0 1339.7,651.2 1343.9,651.4 1348.2,651.4 1352.5,651.4 1356.8,651.3 1361.0,651.0 1365.3,650.7 1369.5,650.3 1373.7,649.8 1377.9,649.3 1382.1,648.6 1386.3,647.9 1390.4,647.0 1394.5,646.1 1398.6,645.1 1402.6,644.0 1406.6,642.8 1410.6,641.5 1414.5,640.2 1418.4,638.8 1422.2,637.3 1426.0,635.7 1429.7,634.0 1433.3,632.3 1436.9,630.4 1440.5,628.5 1443.9,626.6 1447.4,624.5 1450.7,622.4 1454.0,620.2 1457.2,618.0 1460.3,615.6 1463.3,613.3 1466.3,610.8 1469.2,608.3 1472.0,605.7 1474.7,603.1 1477.3,600.4 1479.8,597.7 1482.3,594.9 1484.6,592.0 1486.9,589.1 1489.0,586.2 1491.1,583.2 1493.1,580.2 1494.9,577.1 1496.7,574.0 1498.4,570.8 1499.9,567.7" fill="none" stroke="#3a3a3a" stroke-width="0.8"/>
<path d="M1402.2 403.9L1406.3 395.1" stroke="#1a1a1a" stroke-width="1.4"/>
<text transform="matrix(0.9733 0.3000 -0.3667 0.7780 1408.2 391.1)" x="0" y="3.78" text-anchor="middle" style="font-family:'Liberation Sans',sans-serif;font-size:10.5px" fill="#1a1a1a">N</text>
<path d="M1453.9 430.0L1458.8 425.8" stroke="#1a1a1a" stroke-width="0.8"/>
<text transform="matrix(0.9733 0.3000 -0.3667 0.7780 1465.6 420.0)" x="0" y="2.16" text-anchor="middle" style="font-family:'Liberation Sans',sans-serif;font-size:6.0px" fill="#1a1a1a">NNE</text>
<path d="M1489.3 469.9L1495.9 467.6" stroke="#1a1a1a" stroke-width="0.8"/>
<text transform="matrix(0.9733 0.3000 -0.3667 0.7780 1505.0 464.3)" x="0" y="2.16" text-anchor="middle" style="font-family:'Liberation Sans',sans-serif;font-size:6.0px" fill="#1a1a1a">NE</text>
<path d="M1503.1 517.5L1510.3 517.4" stroke="#1a1a1a" stroke-width="0.8"/>
<text transform="matrix(0.9733 0.3000 -0.3667 0.7780 1520.3 517.2)" x="0" y="2.16" text-anchor="middle" style="font-family:'Liberation Sans',sans-serif;font-size:6.0px" fill="#1a1a1a">ENE</text>
<path d="M1493.2 565.6L1504.2 569.0" stroke="#1a1a1a" stroke-width="1.4"/>
<text transform="matrix(0.9733 0.3000 -0.3667 0.7780 1509.3 570.6)" x="0" y="3.78" text-anchor="middle" style="font-family:'Liberation Sans',sans-serif;font-size:10.5px" fill="#1a1a1a">E</text>
<path d="M1461.0 606.8L1466.3 610.8" stroke="#1a1a1a" stroke-width="0.8"/>
<text transform="matrix(0.9733 0.3000 -0.3667 0.7780 1473.6 616.3)" x="0" y="2.16" text-anchor="middle" style="font-family:'Liberation Sans',sans-serif;font-size:6.0px" fill="#1a1a1a">ESE</text>
<path d="M1411.5 634.9L1414.5 640.2" stroke="#1a1a1a" stroke-width="0.8"/>
<text transform="matrix(0.9733 0.3000 -0.3667 0.7780 1418.6 647.5)" x="0" y="2.16" text-anchor="middle" style="font-family:'Liberation Sans',sans-serif;font-size:6.0px" fill="#1a1a1a">SE</text>
<path d="M1352.3 645.6L1352.5 651.4" stroke="#1a1a1a" stroke-width="0.8"/>
<text transform="matrix(0.9733 0.3000 -0.3667 0.7780 1352.8 659.4)" x="0" y="2.16" text-anchor="middle" style="font-family:'Liberation Sans',sans-serif;font-size:6.0px" fill="#1a1a1a">SSE</text>
<path d="M1292.2 637.3L1288.1 646.1" stroke="#1a1a1a" stroke-width="1.4"/>
<text transform="matrix(0.9733 0.3000 -0.3667 0.7780 1286.2 650.1)" x="0" y="3.78" text-anchor="middle" style="font-family:'Liberation Sans',sans-serif;font-size:10.5px" fill="#1a1a1a">S</text>
<path d="M1240.5 611.2L1235.6 615.4" stroke="#1a1a1a" stroke-width="0.8"/>
<text transform="matrix(0.9733 0.3000 -0.3667 0.7780 1228.8 621.2)" x="0" y="2.16" text-anchor="middle" style="font-family:'Liberation Sans',sans-serif;font-size:6.0px" fill="#1a1a1a">SSW</text>
<path d="M1205.1 571.3L1198.5 573.6" stroke="#1a1a1a" stroke-width="0.8"/>
<text transform="matrix(0.9733 0.3000 -0.3667 0.7780 1189.4 576.9)" x="0" y="2.16" text-anchor="middle" style="font-family:'Liberation Sans',sans-serif;font-size:6.0px" fill="#1a1a1a">SW</text>
<path d="M1191.3 523.7L1184.1 523.8" stroke="#1a1a1a" stroke-width="0.8"/>
<text transform="matrix(0.9733 0.3000 -0.3667 0.7780 1174.1 524.0)" x="0" y="2.16" text-anchor="middle" style="font-family:'Liberation Sans',sans-serif;font-size:6.0px" fill="#1a1a1a">WSW</text>
<path d="M1201.2 475.6L1190.2 472.2" stroke="#1a1a1a" stroke-width="1.4"/>
<text transform="matrix(0.9733 0.3000 -0.3667 0.7780 1185.1 470.7)" x="0" y="3.78" text-anchor="middle" style="font-family:'Liberation Sans',sans-serif;font-size:10.5px" fill="#1a1a1a">W</text>
<path d="M1233.4 434.4L1228.1 430.4" stroke="#1a1a1a" stroke-width="0.8"/>
<text transform="matrix(0.9733 0.3000 -0.3667 0.7780 1220.8 424.9)" x="0" y="2.16" text-anchor="middle" style="font-family:'Liberation Sans',sans-serif;font-size:6.0px" fill="#1a1a1a">WNW</text>
<path d="M1282.9 406.3L1279.9 401.0" stroke="#1a1a1a" stroke-width="0.8"/>
<text transform="matrix(0.9733 0.3000 -0.3667 0.7780 1275.8 393.7)" x="0" y="2.16" text-anchor="middle" style="font-family:'Liberation Sans',sans-serif;font-size:6.0px" fill="#1a1a1a">NW</text>
<path d="M1342.1 395.6L1341.9 389.8" stroke="#1a1a1a" stroke-width="0.8"/>
<text transform="matrix(0.9733 0.3000 -0.3667 0.7780 1341.6 381.8)" x="0" y="2.16" text-anchor="middle" style="font-family:'Liberation Sans',sans-serif;font-size:6.0px" fill="#1a1a1a">NNW</text>
<polyline points="1459.5,605.0 1459.1,604.7 1458.6,604.3 1458.2,604.0 1457.8,603.7 1457.3,603.3 1456.8,603.0 1456.4,602.7 1455.9,602.3 1455.4,602.0 1454.9,601.6 1454.4,601.3 1453.9,600.9 1453.3,600.6 1452.8,600.2 1452.2,599.9 1451.7,599.5 1451.1,599.2 1450.5,598.8 1450.0,598.4 1449.4,598.1 1448.8,597.7 1448.1,597.3 1447.5,596.9 1446.9,596.6 1446.3,596.2 1445.6,595.8 1444.9,595.4 1444.3,595.0 1443.6,594.6 1442.9,594.2 1442.2,593.9 1441.5,593.5 1440.8,593.1 1440.1,592.7 1439.4,592.3 1438.6,591.9 1437.9,591.5 1437.2,591.1 1436.4,590.7 1435.6,590.2 1434.9,589.8 1434.1,589.4 1433.3,589.0 1432.5,588.6 1431.7,588.2 1430.9,587.8 1430.1,587.4 1429.2,586.9 1428.4,586.5 1427.5,586.1 1426.7,585.7 1425.8,585.2 1425.0,584.8 1424.1,584.4 1423.2,584.0 1422.3,583.5 1421.4,583.1 1420.5,582.7 1419.6,582.2 1418.7,581.8 1417.8,581.4 1416.9,580.9 1415.9,580.5 1415.0,580.1 1414.0,579.6 1413.1,579.2 1412.1,578.7 1411.2,578.3 1410.2,577.9 1409.2,577.4 1408.2,577.0 1407.2,576.5 1406.3,576.1 1405.3,575.7 1404.2,575.2 1403.2,574.8 1402.2,574.3 1401.2,573.9 1400.2,573.4 1399.1,573.0 1398.1,572.5 1397.0,572.1 1396.0,571.6 1394.9,571.2 1393.9,570.7 1392.8,570.3 1391.7,569.8 1390.7,569.4 1389.6,569.0 1388.5,568.5 1387.4,568.1 1386.3,567.6 1385.2,567.2 1384.1,566.7 1383.0,566.3 1381.9,565.8 1380.8,565.4 1379.7,564.9 1378.6,564.5 1377.5,564.0 1376.3,563.6 1375.2,563.1 1374.1,562.7 1372.9,562.3 1371.8,561.8 1370.7,561.4 1369.5,560.9 1368.4,560.5 1367.2,560.1 1366.0,559.6 1364.9,559.2 1363.7,558.7 1362.6,558.3 1361.4,557.9 1360.2,557.4 1359.1,557.0 1357.9,556.6 1356.7,556.1 1355.5,555.7 1354.4,555.3 1353.2,554.8 1352.0,554.4 1350.8,554.0 1349.6,553.5 1348.5,553.1 1347.3,552.7 1346.1,552.3 1344.9,551.8 1343.7,551.4 1342.5,551.0 1341.3,550.6 1340.1,550.2 1338.9,549.8 1337.7,549.3 1336.5,548.9 1335.3,548.5 1334.1,548.1 1333.0,547.7 1331.8,547.3 1330.6,546.9 1329.4,546.5 1328.2,546.1 1327.0,545.7 1325.8,545.3 1324.6,544.9 1323.4,544.5 1322.2,544.1 1321.0,543.7 1319.8,543.3 1318.6,543.0 1317.4,542.6 1316.2,542.2 1315.0,541.8 1313.9,541.4 1312.7,541.1 1311.5,540.7 1310.3,540.3 1309.1,540.0 1307.9,539.6 1306.8,539.2 1305.6,538.9 1304.4,538.5 1303.2,538.1 1302.1,537.8 1300.9,537.4 1299.7,537.1 1298.6,536.7 1297.4,536.4 1296.2,536.1 1295.1,535.7 1293.9,535.4 1292.8,535.0 1291.6,534.7 1290.5,534.4 1289.3,534.1 1288.2,533.7 1287.1,533.4 1285.9,533.1 1284.8,532.8 1283.7,532.5 1282.6,532.1 1281.4,531.8 1280.3,531.5 1279.2,531.2 1278.1,530.9 1277.0,530.6 1275.9,530.3 1274.8,530.1 1273.7,529.8 1272.6,529.5 1271.5,529.2 1270.5,528.9 1269.4,528.7 1268.3,528.4 1267.3,528.1 1266.2,527.8 1265.2,527.6 1264.1,527.3 1263.1,527.1 1262.0,526.8 1261.0,526.6 1260.0,526.3 1258.9,526.1 1257.9,525.8 1256.9,525.6 1255.9,525.4 1254.9,525.1 1253.9,524.9 1252.9,524.7 1251.9,524.5 1251.0,524.2 1250.0,524.0 1249.0,523.8 1248.1,523.6 1247.1,523.4 1246.2,523.2 1245.2,523.0 1244.3,522.8 1243.4,522.6 1242.5,522.5 1241.5,522.3 1240.6,522.1 1239.7,521.9 1238.9,521.8 1238.0,521.6 1237.1,521.4 1236.2,521.3 1235.4,521.1 1234.5,521.0 1233.7,520.8 1232.8,520.7 1232.0,520.5 1231.1,520.4 1230.3,520.2 1229.5,520.1 1228.7,520.0 1227.9,519.9 1227.1,519.7 1226.4,519.6 1225.6,519.5 1224.8,519.4 1224.1,519.3 1223.3,519.2 1222.6,519.1 1221.8,519.0 1221.1,518.9 1220.4,518.8 1219.7,518.8 1219.0,518.7 1218.3,518.6 1217.6,518.5 1217.0,518.5 1216.3,518.4 1215.6,518.4 1215.0,518.3 1214.4,518.3 1213.7,518.2 1213.1,518.2 1212.5,518.1 1211.9,518.1 1211.3,518.1 1210.7,518.0 1210.1,518.0 1209.6,518.0 1209.0,518.0 1208.5,518.0 1207.9,518.0 1207.4,518.0 1206.9,518.0 1206.4,518.0 1205.9,518.0 1205.4,518.0 1204.9,518.0 1204.4,518.0 1204.0,518.0 1203.5,518.1 1203.1,518.1 1202.6,518.1 1202.2,518.2 1201.8,518.2 1201.4,518.3 1201.0,518.3 1200.6,518.4 1200.3,518.4 1199.9,518.5 1199.5,518.6 1199.2,518.6 1198.9,518.7 1198.5,518.8 1198.2,518.9 1197.9,519.0 1197.6,519.0 1197.3,519.1 1197.1,519.2 1196.8,519.3 1196.6,519.4 1196.3,519.6 1196.1,519.7 1195.9,519.8 1195.6,519.9 1195.4,520.0 1195.3,520.2 1195.1,520.3 1194.9,520.4 1194.7,520.6 1194.6,520.7 1194.5,520.9 1194.3,521.0 1194.2,521.2 1194.1,521.3 1194.0,521.5 1193.9,521.6 1193.8,521.8 1193.8,522.0 1193.7,522.2 1193.7,522.3 1193.6,522.5 1193.6,522.7 1193.6,522.9 1193.6,523.1" fill="none" stroke="#262626" stroke-width="1.0"/>
<polyline points="1476.0,588.5 1475.7,588.2 1475.3,587.9 1475.0,587.6 1474.6,587.2 1474.2,586.9 1473.8,586.6 1473.4,586.3 1473.0,585.9 1472.6,585.6 1472.2,585.3 1471.7,584.9 1471.3,584.6 1470.8,584.2 1470.4,583.9 1469.9,583.5 1469.4,583.2 1468.9,582.8 1468.4,582.5 1467.9,582.1 1467.3,581.8 1466.8,581.4 1466.2,581.0 1465.7,580.7 1465.1,580.3 1464.5,579.9 1464.0,579.5 1463.4,579.2 1462.7,578.8 1462.1,578.4 1461.5,578.0 1460.9,577.6 1460.2,577.2 1459.6,576.8 1458.9,576.4 1458.2,576.0 1457.5,575.6 1456.9,575.2 1456.2,574.8 1455.4,574.4 1454.7,574.0 1454.0,573.6 1453.3,573.2 1452.5,572.8 1451.8,572.4 1451.0,571.9 1450.2,571.5 1449.5,571.1 1448.7,570.7 1447.9,570.2 1447.1,569.8 1446.3,569.4 1445.4,569.0 1444.6,568.5 1443.8,568.1 1442.9,567.7 1442.1,567.2 1441.2,566.8 1440.3,566.4 1439.5,565.9 1438.6,565.5 1437.7,565.0 1436.8,564.6 1435.9,564.1 1435.0,563.7 1434.0,563.2 1433.1,562.8 1432.2,562.3 1431.2,561.9 1430.3,561.4 1429.3,561.0 1428.4,560.5 1427.4,560.1 1426.4,559.6 1425.4,559.2 1424.4,558.7 1423.4,558.2 1422.4,557.8 1421.4,557.3 1420.4,556.9 1419.4,556.4 1418.3,555.9 1417.3,555.5 1416.2,555.0 1415.2,554.5 1414.1,554.1 1413.1,553.6 1412.0,553.2 1410.9,552.7 1409.9,552.2 1408.8,551.8 1407.7,551.3 1406.6,550.8 1405.5,550.4 1404.4,549.9 1403.3,549.4 1402.2,549.0 1401.1,548.5 1399.9,548.0 1398.8,547.6 1397.7,547.1 1396.5,546.6 1395.4,546.1 1394.2,545.7 1393.1,545.2 1391.9,544.7 1390.8,544.3 1389.6,543.8 1388.4,543.3 1387.3,542.9 1386.1,542.4 1384.9,542.0 1383.7,541.5 1382.6,541.0 1381.4,540.6 1380.2,540.1 1379.0,539.6 1377.8,539.2 1376.6,538.7 1375.4,538.3 1374.2,537.8 1372.9,537.3 1371.7,536.9 1370.5,536.4 1369.3,536.0 1368.1,535.5 1366.9,535.1 1365.6,534.6 1364.4,534.2 1363.2,533.7 1361.9,533.3 1360.7,532.8 1359.5,532.4 1358.2,531.9 1357.0,531.5 1355.8,531.0 1354.5,530.6 1353.3,530.1 1352.0,529.7 1350.8,529.3 1349.5,528.8 1348.3,528.4 1347.1,528.0 1345.8,527.5 1344.6,527.1 1343.3,526.7 1342.1,526.2 1340.8,525.8 1339.6,525.4 1338.3,525.0 1337.1,524.5 1335.8,524.1 1334.6,523.7 1333.3,523.3 1332.1,522.9 1330.8,522.5 1329.6,522.1 1328.3,521.6 1327.1,521.2 1325.8,520.8 1324.6,520.4 1323.3,520.0 1322.1,519.6 1320.9,519.2 1319.6,518.9 1318.4,518.5 1317.1,518.1 1315.9,517.7 1314.7,517.3 1313.4,516.9 1312.2,516.5 1311.0,516.2 1309.7,515.8 1308.5,515.4 1307.3,515.1 1306.1,514.7 1304.9,514.3 1303.6,514.0 1302.4,513.6 1301.2,513.2 1300.0,512.9 1298.8,512.5 1297.6,512.2 1296.4,511.8 1295.2,511.5 1294.0,511.2 1292.8,510.8 1291.7,510.5 1290.5,510.2 1289.3,509.8 1288.1,509.5 1287.0,509.2 1285.8,508.9 1284.6,508.5 1283.5,508.2 1282.3,507.9 1281.2,507.6 1280.0,507.3 1278.9,507.0 1277.7,506.7 1276.6,506.4 1275.5,506.1 1274.4,505.8 1273.2,505.5 1272.1,505.3 1271.0,505.0 1269.9,504.7 1268.8,504.4 1267.7,504.2 1266.6,503.9 1265.6,503.6 1264.5,503.4 1263.4,503.1 1262.3,502.9 1261.3,502.6 1260.2,502.4 1259.2,502.1 1258.1,501.9 1257.1,501.7 1256.1,501.4 1255.1,501.2 1254.0,501.0 1253.0,500.8 1252.0,500.5 1251.0,500.3 1250.0,500.1 1249.1,499.9 1248.1,499.7 1247.1,499.5 1246.1,499.3 1245.2,499.1 1244.2,498.9 1243.3,498.8 1242.4,498.6 1241.4,498.4 1240.5,498.2 1239.6,498.1 1238.7,497.9 1237.8,497.7 1236.9,497.6 1236.0,497.4 1235.1,497.3 1234.3,497.1 1233.4,497.0 1232.6,496.8 1231.7,496.7 1230.9,496.6 1230.1,496.5 1229.2,496.3 1228.4,496.2 1227.6,496.1 1226.8,496.0 1226.0,495.9 1225.3,495.8 1224.5,495.7 1223.7,495.6 1223.0,495.5 1222.3,495.4 1221.5,495.3 1220.8,495.2 1220.1,495.2 1219.4,495.1 1218.7,495.0 1218.0,495.0 1217.3,494.9 1216.6,494.9 1216.0,494.8 1215.3,494.8 1214.7,494.7 1214.0,494.7 1213.4,494.7 1212.8,494.6 1212.2,494.6 1211.6,494.6 1211.0,494.6 1210.4,494.5 1209.9,494.5 1209.3,494.5 1208.8,494.5 1208.2,494.5 1207.7,494.5 1207.2,494.5 1206.7,494.6 1206.2,494.6 1205.7,494.6 1205.2,494.6 1204.8,494.7 1204.3,494.7 1203.9,494.7 1203.4,494.8 1203.0,494.8 1202.6,494.9 1202.2,494.9 1201.8,495.0 1201.4,495.1 1201.0,495.1 1200.7,495.2 1200.3,495.3 1200.0,495.4 1199.6,495.4 1199.3,495.5 1199.0,495.6 1198.7,495.7 1198.4,495.8 1198.1,495.9 1197.9,496.0 1197.6,496.1 1197.4,496.3 1197.1,496.4 1196.9,496.5 1196.7,496.6 1196.5,496.8 1196.3,496.9 1196.1,497.0 1195.9,497.2 1195.8,497.3 1195.6,497.5 1195.5,497.6 1195.3,497.8 1195.2,498.0 1195.1,498.1 1195.0,498.3 1194.9,498.5 1194.9,498.6 1194.8,498.8 1194.7,499.0 1194.7,499.2 1194.7,499.4 1194.6,499.6 1194.6,499.8 1194.6,500.0 1194.6,500.2 1194.7,500.4 1194.7,500.6 1194.7,500.8 1194.8,501.1 1194.9,501.3 1195.0,501.5 1195.0,501.8" fill="none" stroke="#262626" stroke-width="1.0"/>
<polyline points="1490.5,565.7 1490.2,565.4 1490.0,565.1 1489.7,564.8 1489.5,564.5 1489.2,564.2 1488.9,563.9 1488.6,563.6 1488.3,563.3 1488.0,563.0 1487.6,562.7 1487.3,562.4 1486.9,562.1 1486.6,561.8 1486.2,561.4 1485.8,561.1 1485.4,560.8 1485.0,560.4 1484.6,560.1 1484.2,559.8 1483.7,559.4 1483.3,559.1 1482.8,558.7 1482.3,558.4 1481.9,558.0 1481.4,557.7 1480.9,557.3 1480.4,556.9 1479.8,556.6 1479.3,556.2 1478.8,555.8 1478.2,555.5 1477.6,555.1 1477.1,554.7 1476.5,554.3 1475.9,553.9 1475.3,553.6 1474.7,553.2 1474.1,552.8 1473.4,552.4 1472.8,552.0 1472.1,551.6 1471.5,551.2 1470.8,550.8 1470.1,550.4 1469.5,550.0 1468.8,549.6 1468.0,549.2 1467.3,548.8 1466.6,548.3 1465.9,547.9 1465.1,547.5 1464.4,547.1 1463.6,546.7 1462.9,546.2 1462.1,545.8 1461.3,545.4 1460.5,545.0 1459.7,544.5 1458.9,544.1 1458.0,543.7 1457.2,543.2 1456.4,542.8 1455.5,542.3 1454.7,541.9 1453.8,541.5 1452.9,541.0 1452.1,540.6 1451.2,540.1 1450.3,539.7 1449.4,539.2 1448.5,538.8 1447.5,538.3 1446.6,537.9 1445.7,537.4 1444.7,536.9 1443.8,536.5 1442.8,536.0 1441.9,535.6 1440.9,535.1 1439.9,534.6 1438.9,534.2 1437.9,533.7 1436.9,533.2 1435.9,532.8 1434.9,532.3 1433.9,531.8 1432.9,531.4 1431.8,530.9 1430.8,530.4 1429.8,530.0 1428.7,529.5 1427.7,529.0 1426.6,528.6 1425.5,528.1 1424.4,527.6 1423.4,527.1 1422.3,526.7 1421.2,526.2 1420.1,525.7 1419.0,525.2 1417.9,524.8 1416.7,524.3 1415.6,523.8 1414.5,523.3 1413.4,522.9 1412.2,522.4 1411.1,521.9 1409.9,521.4 1408.8,520.9 1407.6,520.5 1406.5,520.0 1405.3,519.5 1404.1,519.0 1403.0,518.6 1401.8,518.1 1400.6,517.6 1399.4,517.1 1398.2,516.7 1397.0,516.2 1395.8,515.7 1394.6,515.2 1393.4,514.8 1392.2,514.3 1391.0,513.8 1389.8,513.3 1388.6,512.9 1387.3,512.4 1386.1,511.9 1384.9,511.5 1383.7,511.0 1382.4,510.5 1381.2,510.1 1379.9,509.6 1378.7,509.1 1377.5,508.7 1376.2,508.2 1375.0,507.7 1373.7,507.3 1372.5,506.8 1371.2,506.4 1369.9,505.9 1368.7,505.5 1367.4,505.0 1366.2,504.5 1364.9,504.1 1363.6,503.6 1362.4,503.2 1361.1,502.7 1359.8,502.3 1358.6,501.9 1357.3,501.4 1356.0,501.0 1354.7,500.5 1353.5,500.1 1352.2,499.7 1350.9,499.2 1349.6,498.8 1348.4,498.4 1347.1,497.9 1345.8,497.5 1344.6,497.1 1343.3,496.6 1342.0,496.2 1340.7,495.8 1339.5,495.4 1338.2,495.0 1336.9,494.5 1335.6,494.1 1334.4,493.7 1333.1,493.3 1331.8,492.9 1330.6,492.5 1329.3,492.1 1328.0,491.7 1326.8,491.3 1325.5,490.9 1324.3,490.5 1323.0,490.1 1321.7,489.7 1320.5,489.3 1319.2,489.0 1318.0,488.6 1316.7,488.2 1315.5,487.8 1314.2,487.5 1313.0,487.1 1311.8,486.7 1310.5,486.4 1309.3,486.0 1308.1,485.6 1306.8,485.3 1305.6,484.9 1304.4,484.6 1303.2,484.2 1302.0,483.9 1300.8,483.5 1299.5,483.2 1298.3,482.8 1297.1,482.5 1295.9,482.2 1294.8,481.9 1293.6,481.5 1292.4,481.2 1291.2,480.9 1290.0,480.6 1288.9,480.3 1287.7,479.9 1286.5,479.6 1285.4,479.3 1284.2,479.0 1283.1,478.7 1281.9,478.4 1280.8,478.2 1279.6,477.9 1278.5,477.6 1277.4,477.3 1276.3,477.0 1275.2,476.8 1274.1,476.5 1273.0,476.2 1271.9,475.9 1270.8,475.7 1269.7,475.4 1268.6,475.2 1267.5,474.9 1266.5,474.7 1265.4,474.4 1264.4,474.2 1263.3,474.0 1262.3,473.7 1261.2,473.5 1260.2,473.3 1259.2,473.1 1258.2,472.8 1257.1,472.6 1256.1,472.4 1255.2,472.2 1254.2,472.0 1253.2,471.8 1252.2,471.6 1251.2,471.4 1250.3,471.2 1249.3,471.1 1248.4,470.9 1247.5,470.7 1246.5,470.5 1245.6,470.4 1244.7,470.2 1243.8,470.0 1242.9,469.9 1242.0,469.7 1241.1,469.6 1240.2,469.4 1239.4,469.3 1238.5,469.2 1237.7,469.0 1236.8,468.9 1236.0,468.8 1235.2,468.7 1234.3,468.6 1233.5,468.4 1232.7,468.3 1231.9,468.2 1231.2,468.1 1230.4,468.0 1229.6,467.9 1228.9,467.9 1228.1,467.8 1227.4,467.7 1226.7,467.6 1225.9,467.5 1225.2,467.5 1224.5,467.4 1223.8,467.4 1223.2,467.3 1222.5,467.3 1221.8,467.2 1221.2,467.2 1220.5,467.1 1219.9,467.1 1219.3,467.1 1218.7,467.0 1218.0,467.0 1217.5,467.0 1216.9,467.0 1216.3,467.0 1215.7,467.0 1215.2,467.0 1214.6,467.0 1214.1,467.0 1213.6,467.0 1213.0,467.0 1212.5,467.0 1212.0,467.1 1211.6,467.1 1211.1,467.1 1210.6,467.2 1210.2,467.2 1209.7,467.2 1209.3,467.3 1208.9,467.3 1208.5,467.4 1208.1,467.5 1207.7,467.5 1207.3,467.6 1206.9,467.7 1206.6,467.7 1206.2,467.8 1205.9,467.9 1205.6,468.0 1205.2,468.1 1204.9,468.2 1204.6,468.3 1204.4,468.4 1204.1,468.5 1203.8,468.6 1203.6,468.8 1203.3,468.9 1203.1,469.0 1202.9,469.1 1202.7,469.3 1202.5,469.4 1202.3,469.6 1202.1,469.7 1202.0,469.8 1201.8,470.0 1201.7,470.2 1201.5,470.3 1201.4,470.5 1201.3,470.7 1201.2,470.8 1201.1,471.0 1201.1,471.2 1201.0,471.4 1200.9,471.6 1200.9,471.8 1200.9,472.0 1200.9,472.2 1200.8,472.4 1200.8,472.6 1200.9,472.8 1200.9,473.0 1200.9,473.2 1201.0,473.4 1201.0,473.7 1201.1,473.9 1201.2,474.1 1201.3,474.4 1201.4,474.6 1201.5,474.9 1201.6,475.1 1201.8,475.4 1201.9,475.6 1202.1,475.9 1202.2,476.1 1202.4,476.4 1202.6,476.7 1202.8,477.0" fill="none" stroke="#262626" stroke-width="1.0"/>
<polyline points="1499.4,538.4 1499.3,538.1 1499.2,537.9 1499.1,537.7 1498.9,537.4 1498.8,537.1 1498.6,536.9 1498.4,536.6 1498.2,536.4 1498.1,536.1 1497.8,535.8 1497.6,535.6 1497.4,535.3 1497.2,535.0 1496.9,534.7 1496.7,534.4 1496.4,534.2 1496.1,533.9 1495.8,533.6 1495.5,533.3 1495.2,533.0 1494.9,532.7 1494.6,532.4 1494.2,532.0 1493.9,531.7 1493.5,531.4 1493.1,531.1 1492.8,530.8 1492.4,530.4 1492.0,530.1 1491.5,529.8 1491.1,529.5 1490.7,529.1 1490.2,528.8 1489.8,528.4 1489.3,528.1 1488.8,527.7 1488.3,527.4 1487.9,527.0 1487.3,526.7 1486.8,526.3 1486.3,526.0 1485.8,525.6 1485.2,525.2 1484.7,524.9 1484.1,524.5 1483.5,524.1 1482.9,523.7 1482.3,523.4 1481.7,523.0 1481.1,522.6 1480.5,522.2 1479.9,521.8 1479.2,521.4 1478.6,521.0 1477.9,520.6 1477.3,520.2 1476.6,519.8 1475.9,519.4 1475.2,519.0 1474.5,518.6 1473.8,518.2 1473.0,517.8 1472.3,517.4 1471.6,517.0 1470.8,516.6 1470.1,516.2 1469.3,515.7 1468.5,515.3 1467.7,514.9 1466.9,514.5 1466.1,514.1 1465.3,513.6 1464.5,513.2 1463.7,512.8 1462.9,512.3 1462.0,511.9 1461.2,511.5 1460.3,511.0 1459.4,510.6 1458.6,510.2 1457.7,509.7 1456.8,509.3 1455.9,508.8 1455.0,508.4 1454.1,507.9 1453.2,507.5 1452.2,507.0 1451.3,506.6 1450.4,506.1 1449.4,505.7 1448.5,505.2 1447.5,504.8 1446.5,504.3 1445.6,503.9 1444.6,503.4 1443.6,503.0 1442.6,502.5 1441.6,502.0 1440.6,501.6 1439.6,501.1 1438.5,500.7 1437.5,500.2 1436.5,499.7 1435.4,499.3 1434.4,498.8 1433.3,498.4 1432.3,497.9 1431.2,497.4 1430.2,497.0 1429.1,496.5 1428.0,496.0 1426.9,495.6 1425.8,495.1 1424.7,494.6 1423.6,494.2 1422.5,493.7 1421.4,493.2 1420.3,492.8 1419.2,492.3 1418.0,491.8 1416.9,491.4 1415.8,490.9 1414.6,490.4 1413.5,490.0 1412.3,489.5 1411.2,489.0 1410.0,488.6 1408.9,488.1 1407.7,487.6 1406.5,487.2 1405.4,486.7 1404.2,486.2 1403.0,485.8 1401.8,485.3 1400.6,484.8 1399.5,484.4 1398.3,483.9 1397.1,483.5 1395.9,483.0 1394.7,482.5 1393.5,482.1 1392.2,481.6 1391.0,481.2 1389.8,480.7 1388.6,480.3 1387.4,479.8 1386.2,479.3 1384.9,478.9 1383.7,478.4 1382.5,478.0 1381.3,477.5 1380.0,477.1 1378.8,476.6 1377.6,476.2 1376.3,475.8 1375.1,475.3 1373.9,474.9 1372.6,474.4 1371.4,474.0 1370.1,473.5 1368.9,473.1 1367.6,472.7 1366.4,472.2 1365.1,471.8 1363.9,471.4 1362.7,470.9 1361.4,470.5 1360.2,470.1 1358.9,469.7 1357.7,469.2 1356.4,468.8 1355.2,468.4 1353.9,468.0 1352.7,467.6 1351.4,467.2 1350.2,466.8 1348.9,466.3 1347.7,465.9 1346.4,465.5 1345.2,465.1 1343.9,464.7 1342.7,464.3 1341.5,463.9 1340.2,463.5 1339.0,463.1 1337.7,462.7 1336.5,462.4 1335.3,462.0 1334.0,461.6 1332.8,461.2 1331.6,460.8 1330.4,460.5 1329.1,460.1 1327.9,459.7 1326.7,459.3 1325.5,459.0 1324.2,458.6 1323.0,458.2 1321.8,457.9 1320.6,457.5 1319.4,457.2 1318.2,456.8 1317.0,456.5 1315.8,456.1 1314.6,455.8 1313.4,455.4 1312.2,455.1 1311.0,454.8 1309.9,454.4 1308.7,454.1 1307.5,453.8 1306.3,453.5 1305.2,453.1 1304.0,452.8 1302.9,452.5 1301.7,452.2 1300.6,451.9 1299.4,451.6 1298.3,451.3 1297.1,451.0 1296.0,450.7 1294.9,450.4 1293.7,450.1 1292.6,449.8 1291.5,449.5 1290.4,449.3 1289.3,449.0 1288.2,448.7 1287.1,448.4 1286.0,448.2 1284.9,447.9 1283.9,447.6 1282.8,447.4 1281.7,447.1 1280.7,446.9 1279.6,446.6 1278.6,446.4 1277.5,446.2 1276.5,445.9 1275.5,445.7 1274.4,445.5 1273.4,445.2 1272.4,445.0 1271.4,444.8 1270.4,444.6 1269.4,444.4 1268.4,444.2 1267.5,444.0 1266.5,443.8 1265.5,443.6 1264.6,443.4 1263.6,443.2 1262.7,443.0 1261.7,442.8 1260.8,442.6 1259.9,442.5 1259.0,442.3 1258.1,442.1 1257.2,442.0 1256.3,441.8 1255.4,441.7 1254.5,441.5 1253.6,441.4 1252.8,441.2 1251.9,441.1 1251.1,440.9 1250.2,440.8 1249.4,440.7 1248.6,440.6 1247.8,440.4 1247.0,440.3 1246.2,440.2 1245.4,440.1 1244.6,440.0 1243.8,439.9 1243.1,439.8 1242.3,439.7 1241.6,439.6 1240.9,439.5 1240.1,439.5 1239.4,439.4 1238.7,439.3 1238.0,439.3 1237.3,439.2 1236.6,439.1 1236.0,439.1 1235.3,439.0 1234.6,439.0 1234.0,438.9 1233.4,438.9 1232.7,438.9 1232.1,438.8 1231.5,438.8 1230.9,438.8 1230.3,438.8 1229.7,438.7 1229.2,438.7 1228.6,438.7 1228.1,438.7 1227.5,438.7 1227.0,438.7 1226.5,438.7 1226.0,438.8 1225.5,438.8 1225.0,438.8 1224.5,438.8 1224.0,438.8 1223.6,438.9 1223.1,438.9 1222.7,439.0 1222.3,439.0 1221.8,439.1 1221.4,439.1 1221.0,439.2 1220.6,439.2 1220.3,439.3 1219.9,439.4 1219.5,439.4 1219.2,439.5 1218.9,439.6 1218.5,439.7 1218.2,439.8 1217.9,439.9 1217.6,440.0 1217.3,440.1 1217.1,440.2 1216.8,440.3 1216.6,440.4 1216.3,440.5 1216.1,440.7 1215.9,440.8 1215.7,440.9 1215.5,441.0 1215.3,441.2 1215.1,441.3 1214.9,441.5 1214.8,441.6 1214.6,441.8 1214.5,441.9 1214.4,442.1 1214.3,442.3 1214.2,442.4 1214.1,442.6 1214.0,442.8 1213.9,443.0 1213.9,443.1 1213.8,443.3 1213.8,443.5 1213.8,443.7 1213.8,443.9 1213.8,444.1 1213.8,444.3 1213.8,444.5 1213.8,444.7 1213.9,445.0 1213.9,445.2 1214.0,445.4 1214.1,445.6 1214.1,445.9 1214.2,446.1 1214.4,446.3 1214.5,446.6 1214.6,446.8 1214.7,447.1 1214.9,447.3 1215.1,447.6 1215.2,447.8 1215.4,448.1 1215.6,448.4 1215.8,448.6 1216.0,448.9 1216.2,449.2 1216.5,449.5 1216.7,449.7 1217.0,450.0 1217.3,450.3 1217.5,450.6 1217.8,450.9 1218.1,451.2 1218.4,451.5 1218.8,451.8" fill="none" stroke="#262626" stroke-width="1.0"/>
<polyline points="1500.8,518.0 1500.8,517.8 1500.8,517.6 1500.8,517.4 1500.7,517.2 1500.7,517.0 1500.6,516.8 1500.5,516.6 1500.4,516.4 1500.3,516.1 1500.2,515.9 1500.1,515.7 1500.0,515.4 1499.9,515.2 1499.7,515.0 1499.6,514.7 1499.4,514.5 1499.2,514.2 1499.0,514.0 1498.8,513.7 1498.6,513.4 1498.4,513.2 1498.2,512.9 1497.9,512.6 1497.7,512.4 1497.4,512.1 1497.2,511.8 1496.9,511.5 1496.6,511.2 1496.3,510.9 1496.0,510.6 1495.7,510.3 1495.3,510.0 1495.0,509.7 1494.6,509.4 1494.3,509.1 1493.9,508.8 1493.5,508.5 1493.1,508.2 1492.7,507.9 1492.3,507.6 1491.9,507.2 1491.5,506.9 1491.1,506.6 1490.6,506.3 1490.1,505.9 1489.7,505.6 1489.2,505.2 1488.7,504.9 1488.2,504.6 1487.7,504.2 1487.2,503.9 1486.7,503.5 1486.1,503.2 1485.6,502.8 1485.0,502.4 1484.5,502.1 1483.9,501.7 1483.3,501.3 1482.7,501.0 1482.1,500.6 1481.5,500.2 1480.9,499.9 1480.3,499.5 1479.7,499.1 1479.0,498.7 1478.4,498.3 1477.7,498.0 1477.0,497.6 1476.4,497.2 1475.7,496.8 1475.0,496.4 1474.3,496.0 1473.6,495.6 1472.8,495.2 1472.1,494.8 1471.4,494.4 1470.6,494.0 1469.9,493.6 1469.1,493.2 1468.3,492.8 1467.6,492.4 1466.8,492.0 1466.0,491.6 1465.2,491.1 1464.4,490.7 1463.6,490.3 1462.7,489.9 1461.9,489.5 1461.1,489.0 1460.2,488.6 1459.4,488.2 1458.5,487.8 1457.6,487.3 1456.8,486.9 1455.9,486.5 1455.0,486.1 1454.1,485.6 1453.2,485.2 1452.3,484.8 1451.4,484.3 1450.5,483.9 1449.5,483.5 1448.6,483.0 1447.6,482.6 1446.7,482.2 1445.7,481.7 1444.8,481.3 1443.8,480.8 1442.8,480.4 1441.9,479.9 1440.9,479.5 1439.9,479.1 1438.9,478.6 1437.9,478.2 1436.9,477.7 1435.9,477.3 1434.8,476.8 1433.8,476.4 1432.8,475.9 1431.7,475.5 1430.7,475.1 1429.7,474.6 1428.6,474.2 1427.5,473.7 1426.5,473.3 1425.4,472.8 1424.3,472.4 1423.3,471.9 1422.2,471.5 1421.1,471.0 1420.0,470.6 1418.9,470.1 1417.8,469.7 1416.7,469.2 1415.6,468.8 1414.5,468.3 1413.4,467.9 1412.3,467.5 1411.2,467.0 1410.0,466.6 1408.9,466.1 1407.8,465.7 1406.6,465.2 1405.5,464.8 1404.4,464.3 1403.2,463.9 1402.1,463.5 1400.9,463.0 1399.8,462.6 1398.6,462.1 1397.5,461.7 1396.3,461.3 1395.1,460.8 1394.0,460.4 1392.8,460.0 1391.6,459.5 1390.5,459.1 1389.3,458.7 1388.1,458.2 1386.9,457.8 1385.7,457.4 1384.6,456.9 1383.4,456.5 1382.2,456.1 1381.0,455.7 1379.8,455.2 1378.6,454.8 1377.4,454.4 1376.2,454.0 1375.1,453.5 1373.9,453.1 1372.7,452.7 1371.5,452.3 1370.3,451.9 1369.1,451.5 1367.9,451.1 1366.7,450.7 1365.5,450.3 1364.3,449.8 1363.1,449.4 1361.9,449.0 1360.7,448.6 1359.5,448.2 1358.3,447.8 1357.1,447.5 1355.9,447.1 1354.7,446.7 1353.5,446.3 1352.4,445.9 1351.2,445.5 1350.0,445.1 1348.8,444.8 1347.6,444.4 1346.4,444.0 1345.2,443.6 1344.0,443.2 1342.8,442.9 1341.7,442.5 1340.5,442.1 1339.3,441.8 1338.1,441.4 1337.0,441.1 1335.8,440.7 1334.6,440.4 1333.4,440.0 1332.3,439.7 1331.1,439.3 1330.0,439.0 1328.8,438.6 1327.6,438.3 1326.5,437.9 1325.3,437.6 1324.2,437.3 1323.0,437.0 1321.9,436.6 1320.8,436.3 1319.6,436.0 1318.5,435.7 1317.4,435.4 1316.3,435.0 1315.1,434.7 1314.0,434.4 1312.9,434.1 1311.8,433.8 1310.7,433.5 1309.6,433.2 1308.5,432.9 1307.4,432.6 1306.3,432.4 1305.2,432.1 1304.1,431.8 1303.1,431.5 1302.0,431.2 1300.9,431.0 1299.9,430.7 1298.8,430.4 1297.8,430.2 1296.7,429.9 1295.7,429.7 1294.6,429.4 1293.6,429.2 1292.6,428.9 1291.6,428.7 1290.5,428.4 1289.5,428.2 1288.5,428.0 1287.5,427.7 1286.5,427.5 1285.6,427.3 1284.6,427.1 1283.6,426.9 1282.6,426.7 1281.7,426.4 1280.7,426.2 1279.8,426.0 1278.8,425.8 1277.9,425.6 1277.0,425.5 1276.0,425.3 1275.1,425.1 1274.2,424.9 1273.3,424.7 1272.4,424.6 1271.5,424.4 1270.6,424.2 1269.8,424.1 1268.9,423.9 1268.0,423.7 1267.2,423.6 1266.3,423.4 1265.5,423.3 1264.7,423.2 1263.8,423.0 1263.0,422.9 1262.2,422.8 1261.4,422.6 1260.6,422.5 1259.8,422.4 1259.1,422.3 1258.3,422.2 1257.5,422.1 1256.8,422.0 1256.0,421.9 1255.3,421.8 1254.6,421.7 1253.9,421.6 1253.1,421.5 1252.4,421.4 1251.7,421.4 1251.1,421.3 1250.4,421.2 1249.7,421.2 1249.0,421.1 1248.4,421.0 1247.8,421.0 1247.1,420.9 1246.5,420.9 1245.9,420.9 1245.3,420.8 1244.7,420.8 1244.1,420.8 1243.5,420.7 1242.9,420.7 1242.4,420.7 1241.8,420.7 1241.3,420.7 1240.7,420.7 1240.2,420.7 1239.7,420.7 1239.2,420.7 1238.7,420.7 1238.2,420.7 1237.7,420.7 1237.3,420.7 1236.8,420.8 1236.4,420.8 1235.9,420.8 1235.5,420.9 1235.1,420.9 1234.7,420.9 1234.3,421.0 1233.9,421.0 1233.5,421.1 1233.1,421.2 1232.8,421.2 1232.4,421.3 1232.1,421.4 1231.8,421.4 1231.4,421.5 1231.1,421.6 1230.8,421.7 1230.5,421.8 1230.3,421.9 1230.0,422.0 1229.7,422.1 1229.5,422.2 1229.2,422.3 1229.0,422.4 1228.8,422.5 1228.6,422.7 1228.4,422.8 1228.2,422.9 1228.0,423.0 1227.9,423.2 1227.7,423.3 1227.6,423.5 1227.4,423.6 1227.3,423.8 1227.2,423.9 1227.1,424.1 1227.0,424.2 1226.9,424.4 1226.8,424.6 1226.8,424.7 1226.7,424.9 1226.7,425.1 1226.6,425.3 1226.6,425.5 1226.6,425.7 1226.6,425.9 1226.6,426.1 1226.6,426.3 1226.7,426.5 1226.7,426.7 1226.8,426.9 1226.8,427.1 1226.9,427.3 1227.0,427.5 1227.1,427.8 1227.2,428.0 1227.3,428.2 1227.4,428.5 1227.6,428.7 1227.7,429.0 1227.9,429.2 1228.0,429.4 1228.2,429.7 1228.4,430.0 1228.6,430.2 1228.8,430.5 1229.0,430.7 1229.2,431.0 1229.5,431.3 1229.7,431.6 1230.0,431.8 1230.3,432.1 1230.5,432.4 1230.8,432.7 1231.1,433.0 1231.4,433.3 1231.8,433.6 1232.1,433.9 1232.4,434.2 1232.8,434.5 1233.1,434.8 1233.5,435.1 1233.9,435.4 1234.3,435.7" fill="none" stroke="#262626" stroke-width="1.0"/>
<polyline points="1500.2,510.1 1500.2,509.9 1500.3,509.7 1500.3,509.5 1500.3,509.3 1500.2,509.1 1500.2,508.9 1500.2,508.7 1500.1,508.5 1500.1,508.3 1500.0,508.1 1499.9,507.9 1499.8,507.6 1499.7,507.4 1499.6,507.2 1499.5,507.0 1499.4,506.7 1499.3,506.5 1499.1,506.3 1499.0,506.0 1498.8,505.8 1498.6,505.5 1498.4,505.3 1498.2,505.0 1498.0,504.8 1497.8,504.5 1497.6,504.2 1497.3,504.0 1497.1,503.7 1496.8,503.4 1496.6,503.2 1496.3,502.9 1496.0,502.6 1495.7,502.3 1495.4,502.0 1495.1,501.7 1494.7,501.4 1494.4,501.2 1494.1,500.9 1493.7,500.6 1493.3,500.2 1493.0,499.9 1492.6,499.6 1492.2,499.3 1491.8,499.0 1491.4,498.7 1490.9,498.4 1490.5,498.0 1490.1,497.7 1489.6,497.4 1489.1,497.1 1488.7,496.7 1488.2,496.4 1487.7,496.1 1487.2,495.7 1486.7,495.4 1486.2,495.0 1485.6,494.7 1485.1,494.3 1484.6,494.0 1484.0,493.6 1483.5,493.3 1482.9,492.9 1482.3,492.6 1481.7,492.2 1481.1,491.8 1480.5,491.5 1479.9,491.1 1479.3,490.7 1478.6,490.3 1478.0,490.0 1477.3,489.6 1476.7,489.2 1476.0,488.8 1475.3,488.4 1474.7,488.1 1474.0,487.7 1473.3,487.3 1472.6,486.9 1471.8,486.5 1471.1,486.1 1470.4,485.7 1469.7,485.3 1468.9,484.9 1468.1,484.5 1467.4,484.1 1466.6,483.7 1465.8,483.3 1465.1,482.9 1464.3,482.5 1463.5,482.1 1462.6,481.7 1461.8,481.3 1461.0,480.9 1460.2,480.5 1459.3,480.0 1458.5,479.6 1457.6,479.2 1456.8,478.8 1455.9,478.4 1455.0,477.9 1454.2,477.5 1453.3,477.1 1452.4,476.7 1451.5,476.3 1450.6,475.8 1449.7,475.4 1448.8,475.0 1447.8,474.5 1446.9,474.1 1446.0,473.7 1445.0,473.3 1444.1,472.8 1443.1,472.4 1442.2,472.0 1441.2,471.5 1440.2,471.1 1439.2,470.7 1438.3,470.2 1437.3,469.8 1436.3,469.4 1435.3,468.9 1434.3,468.5 1433.3,468.1 1432.2,467.6 1431.2,467.2 1430.2,466.7 1429.2,466.3 1428.1,465.9 1427.1,465.4 1426.1,465.0 1425.0,464.6 1423.9,464.1 1422.9,463.7 1421.8,463.2 1420.8,462.8 1419.7,462.4 1418.6,461.9 1417.5,461.5 1416.5,461.1 1415.4,460.6 1414.3,460.2 1413.2,459.8 1412.1,459.3 1411.0,458.9 1409.9,458.4 1408.8,458.0 1407.7,457.6 1406.6,457.1 1405.4,456.7 1404.3,456.3 1403.2,455.9 1402.1,455.4 1400.9,455.0 1399.8,454.6 1398.7,454.1 1397.5,453.7 1396.4,453.3 1395.3,452.9 1394.1,452.4 1393.0,452.0 1391.8,451.6 1390.7,451.2 1389.5,450.7 1388.4,450.3 1387.2,449.9 1386.1,449.5 1384.9,449.1 1383.8,448.6 1382.6,448.2 1381.4,447.8 1380.3,447.4 1379.1,447.0 1377.9,446.6 1376.8,446.2 1375.6,445.8 1374.4,445.4 1373.3,445.0 1372.1,444.6 1370.9,444.2 1369.8,443.8 1368.6,443.4 1367.4,443.0 1366.3,442.6 1365.1,442.2 1363.9,441.8 1362.8,441.4 1361.6,441.0 1360.4,440.6 1359.3,440.2 1358.1,439.9 1356.9,439.5 1355.8,439.1 1354.6,438.7 1353.4,438.3 1352.3,438.0 1351.1,437.6 1349.9,437.2 1348.8,436.9 1347.6,436.5 1346.5,436.1 1345.3,435.8 1344.2,435.4 1343.0,435.1 1341.9,434.7 1340.7,434.4 1339.6,434.0 1338.4,433.7 1337.3,433.3 1336.1,433.0 1335.0,432.6 1333.9,432.3 1332.7,432.0 1331.6,431.6 1330.5,431.3 1329.3,431.0 1328.2,430.7 1327.1,430.3 1326.0,430.0 1324.9,429.7 1323.8,429.4 1322.7,429.1 1321.5,428.8 1320.4,428.4 1319.4,428.1 1318.3,427.8 1317.2,427.5 1316.1,427.3 1315.0,427.0 1313.9,426.7 1312.8,426.4 1311.8,426.1 1310.7,425.8 1309.7,425.5 1308.6,425.3 1307.5,425.0 1306.5,424.7 1305.4,424.5 1304.4,424.2 1303.4,423.9 1302.3,423.7 1301.3,423.4 1300.3,423.2 1299.3,422.9 1298.3,422.7 1297.3,422.4 1296.3,422.2 1295.3,422.0 1294.3,421.7 1293.3,421.5 1292.3,421.3 1291.4,421.1 1290.4,420.8 1289.4,420.6 1288.5,420.4 1287.5,420.2 1286.6,420.0 1285.6,419.8 1284.7,419.6 1283.8,419.4 1282.9,419.2 1282.0,419.0 1281.1,418.8 1280.2,418.7 1279.3,418.5 1278.4,418.3 1277.5,418.1 1276.6,418.0 1275.8,417.8 1274.9,417.6 1274.1,417.5 1273.2,417.3 1272.4,417.2 1271.5,417.0 1270.7,416.9 1269.9,416.8 1269.1,416.6 1268.3,416.5 1267.5,416.4 1266.7,416.2 1265.9,416.1 1265.2,416.0 1264.4,415.9 1263.6,415.8 1262.9,415.7 1262.2,415.6 1261.4,415.5 1260.7,415.4 1260.0,415.3 1259.3,415.2 1258.6,415.1 1257.9,415.0 1257.2,415.0 1256.5,414.9 1255.9,414.8 1255.2,414.8 1254.6,414.7 1253.9,414.6 1253.3,414.6 1252.7,414.5 1252.0,414.5 1251.4,414.5 1250.8,414.4 1250.3,414.4 1249.7,414.4 1249.1,414.3 1248.5,414.3 1248.0,414.3 1247.4,414.3 1246.9,414.3 1246.4,414.3 1245.9,414.3 1245.4,414.3 1244.9,414.3 1244.4,414.3 1243.9,414.3 1243.4,414.3 1243.0,414.3 1242.5,414.3 1242.1,414.4 1241.6,414.4 1241.2,414.4 1240.8,414.5 1240.4,414.5 1240.0,414.6 1239.6,414.6 1239.2,414.7 1238.9,414.7 1238.5,414.8 1238.2,414.8 1237.8,414.9 1237.5,415.0 1237.2,415.1 1236.9,415.1 1236.6,415.2 1236.3,415.3 1236.0,415.4 1235.7,415.5 1235.5,415.6 1235.2,415.7 1235.0,415.8 1234.8,415.9 1234.6,416.0 1234.3,416.1 1234.1,416.3 1234.0,416.4 1233.8,416.5 1233.6,416.6 1233.5,416.8 1233.3,416.9 1233.2,417.1 1233.0,417.2 1232.9,417.4 1232.8,417.5 1232.7,417.7 1232.6,417.8 1232.6,418.0 1232.5,418.2 1232.4,418.3 1232.4,418.5 1232.4,418.7 1232.3,418.9 1232.3,419.1 1232.3,419.2 1232.3,419.4 1232.3,419.6 1232.4,419.8 1232.4,420.0 1232.4,420.2 1232.5,420.4 1232.6,420.7 1232.6,420.9 1232.7,421.1 1232.8,421.3 1232.9,421.5 1233.0,421.8 1233.2,422.0 1233.3,422.2 1233.5,422.5 1233.6,422.7 1233.8,423.0 1234.0,423.2 1234.2,423.5 1234.3,423.7 1234.6,424.0 1234.8,424.2 1235.0,424.5 1235.2,424.8 1235.5,425.0 1235.7,425.3 1236.0,425.6 1236.3,425.9 1236.6,426.1 1236.9,426.4 1237.2,426.7 1237.5,427.0 1237.8,427.3 1238.2,427.6 1238.5,427.9 1238.9,428.2 1239.2,428.5 1239.6,428.8 1240.0,429.1 1240.4,429.4 1240.8,429.7 1241.2,430.0 1241.6,430.4" fill="none" stroke="#262626" stroke-width="1.0"/>
<polyline points="1500.8,517.2 1500.8,517.0 1500.7,516.8 1500.7,516.6 1500.7,516.4 1500.6,516.2 1500.6,516.0 1500.5,515.7 1500.4,515.5 1500.3,515.3 1500.2,515.1 1500.1,514.8 1499.9,514.6 1499.8,514.4 1499.7,514.1 1499.5,513.9 1499.3,513.6 1499.2,513.4 1499.0,513.1 1498.8,512.9 1498.6,512.6 1498.3,512.3 1498.1,512.1 1497.9,511.8 1497.6,511.5 1497.4,511.2 1497.1,511.0 1496.8,510.7 1496.5,510.4 1496.2,510.1 1495.9,509.8 1495.6,509.5 1495.2,509.2 1494.9,508.9 1494.6,508.6 1494.2,508.3 1493.8,508.0 1493.4,507.7 1493.1,507.4 1492.7,507.0 1492.2,506.7 1491.8,506.4 1491.4,506.1 1490.9,505.7 1490.5,505.4 1490.0,505.1 1489.6,504.7 1489.1,504.4 1488.6,504.1 1488.1,503.7 1487.6,503.4 1487.1,503.0 1486.6,502.7 1486.0,502.3 1485.5,502.0 1484.9,501.6 1484.4,501.2 1483.8,500.9 1483.2,500.5 1482.6,500.1 1482.0,499.8 1481.4,499.4 1480.8,499.0 1480.2,498.7 1479.5,498.3 1478.9,497.9 1478.2,497.5 1477.6,497.1 1476.9,496.7 1476.2,496.4 1475.5,496.0 1474.9,495.6 1474.2,495.2 1473.4,494.8 1472.7,494.4 1472.0,494.0 1471.3,493.6 1470.5,493.2 1469.8,492.8 1469.0,492.4 1468.2,492.0 1467.4,491.6 1466.7,491.1 1465.9,490.7 1465.1,490.3 1464.3,489.9 1463.4,489.5 1462.6,489.1 1461.8,488.6 1461.0,488.2 1460.1,487.8 1459.3,487.4 1458.4,487.0 1457.5,486.5 1456.6,486.1 1455.8,485.7 1454.9,485.2 1454.0,484.8 1453.1,484.4 1452.2,484.0 1451.3,483.5 1450.3,483.1 1449.4,482.6 1448.5,482.2 1447.5,481.8 1446.6,481.3 1445.6,480.9 1444.7,480.5 1443.7,480.0 1442.7,479.6 1441.7,479.1 1440.8,478.7 1439.8,478.3 1438.8,477.8 1437.8,477.4 1436.8,476.9 1435.7,476.5 1434.7,476.0 1433.7,475.6 1432.7,475.1 1431.6,474.7 1430.6,474.3 1429.5,473.8 1428.5,473.4 1427.4,472.9 1426.4,472.5 1425.3,472.0 1424.2,471.6 1423.2,471.1 1422.1,470.7 1421.0,470.2 1419.9,469.8 1418.8,469.3 1417.7,468.9 1416.6,468.5 1415.5,468.0 1414.4,467.6 1413.3,467.1 1412.2,466.7 1411.1,466.2 1410.0,465.8 1408.8,465.3 1407.7,464.9 1406.6,464.5 1405.4,464.0 1404.3,463.6 1403.1,463.1 1402.0,462.7 1400.8,462.2 1399.7,461.8 1398.5,461.4 1397.4,460.9 1396.2,460.5 1395.1,460.1 1393.9,459.6 1392.7,459.2 1391.6,458.8 1390.4,458.3 1389.2,457.9 1388.1,457.5 1386.9,457.0 1385.7,456.6 1384.5,456.2 1383.3,455.7 1382.2,455.3 1381.0,454.9 1379.8,454.5 1378.6,454.1 1377.4,453.6 1376.2,453.2 1375.0,452.8 1373.8,452.4 1372.6,452.0 1371.5,451.6 1370.3,451.1 1369.1,450.7 1367.9,450.3 1366.7,449.9 1365.5,449.5 1364.3,449.1 1363.1,448.7 1361.9,448.3 1360.7,447.9 1359.5,447.5 1358.3,447.1 1357.1,446.7 1355.9,446.3 1354.7,445.9 1353.6,445.6 1352.4,445.2 1351.2,444.8 1350.0,444.4 1348.8,444.0 1347.6,443.6 1346.4,443.3 1345.2,442.9 1344.1,442.5 1342.9,442.2 1341.7,441.8 1340.5,441.4 1339.4,441.1 1338.2,440.7 1337.0,440.3 1335.8,440.0 1334.7,439.6 1333.5,439.3 1332.3,438.9 1331.2,438.6 1330.0,438.3 1328.9,437.9 1327.7,437.6 1326.6,437.2 1325.4,436.9 1324.3,436.6 1323.1,436.3 1322.0,435.9 1320.9,435.6 1319.7,435.3 1318.6,435.0 1317.5,434.7 1316.4,434.3 1315.2,434.0 1314.1,433.7 1313.0,433.4 1311.9,433.1 1310.8,432.8 1309.7,432.5 1308.6,432.2 1307.5,432.0 1306.4,431.7 1305.4,431.4 1304.3,431.1 1303.2,430.8 1302.1,430.6 1301.1,430.3 1300.0,430.0 1299.0,429.8 1297.9,429.5 1296.9,429.3 1295.8,429.0 1294.8,428.7 1293.8,428.5 1292.7,428.3 1291.7,428.0 1290.7,427.8 1289.7,427.5 1288.7,427.3 1287.7,427.1 1286.7,426.9 1285.7,426.6 1284.8,426.4 1283.8,426.2 1282.8,426.0 1281.9,425.8 1280.9,425.6 1280.0,425.4 1279.0,425.2 1278.1,425.0 1277.2,424.8 1276.3,424.6 1275.3,424.4 1274.4,424.3 1273.5,424.1 1272.6,423.9 1271.8,423.7 1270.9,423.6 1270.0,423.4 1269.1,423.3 1268.3,423.1 1267.4,423.0 1266.6,422.8 1265.8,422.7 1264.9,422.5 1264.1,422.4 1263.3,422.3 1262.5,422.1 1261.7,422.0 1260.9,421.9 1260.1,421.8 1259.3,421.7 1258.6,421.6 1257.8,421.4 1257.1,421.3 1256.3,421.2 1255.6,421.2 1254.9,421.1 1254.2,421.0 1253.4,420.9 1252.7,420.8 1252.1,420.7 1251.4,420.7 1250.7,420.6 1250.0,420.5 1249.4,420.5 1248.7,420.4 1248.1,420.4 1247.5,420.3 1246.8,420.3 1246.2,420.2 1245.6,420.2 1245.0,420.2 1244.4,420.1 1243.9,420.1 1243.3,420.1 1242.7,420.1 1242.2,420.1 1241.6,420.1 1241.1,420.1 1240.6,420.1 1240.1,420.1 1239.6,420.1 1239.1,420.1 1238.6,420.1 1238.1,420.1 1237.7,420.1 1237.2,420.2 1236.8,420.2 1236.3,420.2 1235.9,420.3 1235.5,420.3 1235.1,420.4 1234.7,420.4 1234.3,420.5 1233.9,420.5 1233.6,420.6 1233.2,420.6 1232.8,420.7 1232.5,420.8 1232.2,420.9 1231.9,420.9 1231.6,421.0 1231.3,421.1 1231.0,421.2 1230.7,421.3 1230.4,421.4 1230.2,421.5 1229.9,421.6 1229.7,421.7 1229.5,421.8 1229.3,422.0 1229.0,422.1 1228.9,422.2 1228.7,422.3 1228.5,422.5 1228.3,422.6 1228.2,422.7 1228.0,422.9 1227.9,423.0 1227.8,423.2 1227.7,423.3 1227.6,423.5 1227.5,423.7 1227.4,423.8 1227.3,424.0 1227.3,424.2 1227.2,424.4 1227.2,424.5 1227.1,424.7 1227.1,424.9 1227.1,425.1 1227.1,425.3 1227.1,425.5 1227.2,425.7 1227.2,425.9 1227.2,426.1 1227.3,426.3 1227.3,426.5 1227.4,426.8 1227.5,427.0 1227.6,427.2 1227.7,427.4 1227.8,427.7 1228.0,427.9 1228.1,428.1 1228.2,428.4 1228.4,428.6 1228.6,428.9 1228.7,429.1 1228.9,429.4 1229.1,429.6 1229.3,429.9 1229.6,430.2 1229.8,430.4 1230.0,430.7 1230.3,431.0 1230.5,431.3 1230.8,431.5 1231.1,431.8 1231.4,432.1 1231.7,432.4 1232.0,432.7 1232.3,433.0 1232.7,433.3 1233.0,433.6 1233.3,433.9 1233.7,434.2 1234.1,434.5 1234.5,434.8 1234.8,435.1 1235.2,435.5" fill="none" stroke="#262626" stroke-width="1.0" stroke-dasharray="5 2.4"/>
<polyline points="1499.5,537.9 1499.4,537.7 1499.2,537.4 1499.1,537.2 1499.0,536.9 1498.8,536.7 1498.7,536.4 1498.5,536.2 1498.3,535.9 1498.1,535.7 1497.9,535.4 1497.7,535.1 1497.5,534.8 1497.2,534.6 1497.0,534.3 1496.7,534.0 1496.5,533.7 1496.2,533.4 1495.9,533.1 1495.6,532.8 1495.3,532.5 1495.0,532.2 1494.6,531.9 1494.3,531.6 1493.9,531.3 1493.6,531.0 1493.2,530.6 1492.8,530.3 1492.4,530.0 1492.0,529.7 1491.6,529.3 1491.2,529.0 1490.7,528.7 1490.3,528.3 1489.8,528.0 1489.4,527.6 1488.9,527.3 1488.4,526.9 1487.9,526.6 1487.4,526.2 1486.9,525.9 1486.4,525.5 1485.8,525.1 1485.3,524.8 1484.7,524.4 1484.2,524.0 1483.6,523.7 1483.0,523.3 1482.4,522.9 1481.8,522.5 1481.2,522.1 1480.6,521.8 1479.9,521.4 1479.3,521.0 1478.6,520.6 1478.0,520.2 1477.3,519.8 1476.6,519.4 1476.0,519.0 1475.3,518.6 1474.6,518.2 1473.8,517.8 1473.1,517.4 1472.4,517.0 1471.6,516.6 1470.9,516.1 1470.1,515.7 1469.4,515.3 1468.6,514.9 1467.8,514.5 1467.0,514.0 1466.2,513.6 1465.4,513.2 1464.6,512.8 1463.8,512.3 1462.9,511.9 1462.1,511.5 1461.2,511.0 1460.4,510.6 1459.5,510.2 1458.6,509.7 1457.8,509.3 1456.9,508.8 1456.0,508.4 1455.1,507.9 1454.2,507.5 1453.2,507.1 1452.3,506.6 1451.4,506.2 1450.4,505.7 1449.5,505.3 1448.5,504.8 1447.6,504.4 1446.6,503.9 1445.6,503.4 1444.7,503.0 1443.7,502.5 1442.7,502.1 1441.7,501.6 1440.7,501.2 1439.6,500.7 1438.6,500.2 1437.6,499.8 1436.6,499.3 1435.5,498.8 1434.5,498.4 1433.4,497.9 1432.4,497.5 1431.3,497.0 1430.2,496.5 1429.2,496.1 1428.1,495.6 1427.0,495.1 1425.9,494.7 1424.8,494.2 1423.7,493.7 1422.6,493.3 1421.5,492.8 1420.4,492.3 1419.3,491.9 1418.1,491.4 1417.0,490.9 1415.9,490.5 1414.7,490.0 1413.6,489.5 1412.4,489.1 1411.3,488.6 1410.1,488.1 1409.0,487.7 1407.8,487.2 1406.6,486.7 1405.5,486.3 1404.3,485.8 1403.1,485.3 1401.9,484.9 1400.7,484.4 1399.6,484.0 1398.4,483.5 1397.2,483.0 1396.0,482.6 1394.8,482.1 1393.6,481.7 1392.4,481.2 1391.1,480.7 1389.9,480.3 1388.7,479.8 1387.5,479.4 1386.3,478.9 1385.1,478.5 1383.8,478.0 1382.6,477.6 1381.4,477.1 1380.2,476.7 1378.9,476.2 1377.7,475.8 1376.4,475.3 1375.2,474.9 1374.0,474.5 1372.7,474.0 1371.5,473.6 1370.3,473.1 1369.0,472.7 1367.8,472.3 1366.5,471.8 1365.3,471.4 1364.0,471.0 1362.8,470.5 1361.5,470.1 1360.3,469.7 1359.0,469.3 1357.8,468.8 1356.5,468.4 1355.3,468.0 1354.1,467.6 1352.8,467.2 1351.6,466.8 1350.3,466.3 1349.1,465.9 1347.8,465.5 1346.6,465.1 1345.3,464.7 1344.1,464.3 1342.8,463.9 1341.6,463.5 1340.4,463.1 1339.1,462.7 1337.9,462.3 1336.7,462.0 1335.4,461.6 1334.2,461.2 1333.0,460.8 1331.7,460.4 1330.5,460.0 1329.3,459.7 1328.1,459.3 1326.8,458.9 1325.6,458.6 1324.4,458.2 1323.2,457.8 1322.0,457.5 1320.8,457.1 1319.6,456.8 1318.4,456.4 1317.2,456.1 1316.0,455.7 1314.8,455.4 1313.6,455.0 1312.4,454.7 1311.2,454.4 1310.0,454.0 1308.9,453.7 1307.7,453.4 1306.5,453.1 1305.3,452.7 1304.2,452.4 1303.0,452.1 1301.9,451.8 1300.7,451.5 1299.6,451.2 1298.4,450.9 1297.3,450.6 1296.2,450.3 1295.0,450.0 1293.9,449.7 1292.8,449.4 1291.7,449.1 1290.6,448.9 1289.5,448.6 1288.4,448.3 1287.3,448.0 1286.2,447.8 1285.1,447.5 1284.0,447.2 1283.0,447.0 1281.9,446.7 1280.9,446.5 1279.8,446.2 1278.8,446.0 1277.7,445.8 1276.7,445.5 1275.6,445.3 1274.6,445.1 1273.6,444.8 1272.6,444.6 1271.6,444.4 1270.6,444.2 1269.6,444.0 1268.6,443.8 1267.6,443.6 1266.7,443.4 1265.7,443.2 1264.8,443.0 1263.8,442.8 1262.9,442.6 1261.9,442.4 1261.0,442.2 1260.1,442.1 1259.2,441.9 1258.3,441.7 1257.4,441.6 1256.5,441.4 1255.6,441.3 1254.7,441.1 1253.8,441.0 1253.0,440.8 1252.1,440.7 1251.3,440.6 1250.4,440.4 1249.6,440.3 1248.8,440.2 1248.0,440.1 1247.2,439.9 1246.4,439.8 1245.6,439.7 1244.8,439.6 1244.1,439.5 1243.3,439.4 1242.5,439.3 1241.8,439.2 1241.1,439.2 1240.3,439.1 1239.6,439.0 1238.9,438.9 1238.2,438.9 1237.5,438.8 1236.8,438.7 1236.2,438.7 1235.5,438.6 1234.9,438.6 1234.2,438.5 1233.6,438.5 1232.9,438.5 1232.3,438.4 1231.7,438.4 1231.1,438.4 1230.5,438.4 1230.0,438.4 1229.4,438.3 1228.8,438.3 1228.3,438.3 1227.8,438.3 1227.2,438.3 1226.7,438.4 1226.2,438.4 1225.7,438.4 1225.2,438.4 1224.7,438.4 1224.3,438.5 1223.8,438.5 1223.4,438.5 1222.9,438.6 1222.5,438.6 1222.1,438.7 1221.7,438.7 1221.3,438.8 1220.9,438.8 1220.5,438.9 1220.1,439.0 1219.8,439.1 1219.4,439.1 1219.1,439.2 1218.8,439.3 1218.5,439.4 1218.2,439.5 1217.9,439.6 1217.6,439.7 1217.3,439.8 1217.0,439.9 1216.8,440.0 1216.6,440.1 1216.3,440.3 1216.1,440.4 1215.9,440.5 1215.7,440.7 1215.5,440.8 1215.3,440.9 1215.2,441.1 1215.0,441.2 1214.9,441.4 1214.7,441.5 1214.6,441.7 1214.5,441.9 1214.4,442.0 1214.3,442.2 1214.2,442.4 1214.2,442.6 1214.1,442.7 1214.1,442.9 1214.0,443.1 1214.0,443.3 1214.0,443.5 1214.0,443.7 1214.0,443.9 1214.0,444.1 1214.1,444.4 1214.1,444.6 1214.2,444.8 1214.2,445.0 1214.3,445.2 1214.4,445.5 1214.5,445.7 1214.6,445.9 1214.7,446.2 1214.8,446.4 1215.0,446.7 1215.1,446.9 1215.3,447.2 1215.5,447.4 1215.6,447.7 1215.8,448.0 1216.0,448.2 1216.3,448.5 1216.5,448.8 1216.7,449.1 1217.0,449.4 1217.2,449.6 1217.5,449.9 1217.8,450.2 1218.1,450.5 1218.4,450.8 1218.7,451.1 1219.0,451.4" fill="none" stroke="#262626" stroke-width="1.0" stroke-dasharray="5 2.4"/>
<polyline points="1490.7,565.3 1490.5,565.0 1490.2,564.7 1490.0,564.4 1489.7,564.1 1489.4,563.8 1489.1,563.5 1488.8,563.2 1488.5,562.9 1488.2,562.6 1487.9,562.3 1487.5,562.0 1487.2,561.6 1486.8,561.3 1486.5,561.0 1486.1,560.7 1485.7,560.3 1485.3,560.0 1484.9,559.7 1484.4,559.3 1484.0,559.0 1483.5,558.6 1483.1,558.3 1482.6,558.0 1482.1,557.6 1481.6,557.2 1481.1,556.9 1480.6,556.5 1480.1,556.2 1479.6,555.8 1479.1,555.4 1478.5,555.0 1477.9,554.7 1477.4,554.3 1476.8,553.9 1476.2,553.5 1475.6,553.2 1475.0,552.8 1474.4,552.4 1473.7,552.0 1473.1,551.6 1472.5,551.2 1471.8,550.8 1471.1,550.4 1470.5,550.0 1469.8,549.6 1469.1,549.2 1468.4,548.8 1467.7,548.4 1466.9,547.9 1466.2,547.5 1465.5,547.1 1464.7,546.7 1464.0,546.3 1463.2,545.8 1462.4,545.4 1461.6,545.0 1460.8,544.6 1460.0,544.1 1459.2,543.7 1458.4,543.3 1457.6,542.8 1456.7,542.4 1455.9,541.9 1455.0,541.5 1454.2,541.1 1453.3,540.6 1452.4,540.2 1451.5,539.7 1450.7,539.3 1449.7,538.8 1448.8,538.4 1447.9,537.9 1447.0,537.5 1446.1,537.0 1445.1,536.5 1444.2,536.1 1443.2,535.6 1442.3,535.2 1441.3,534.7 1440.3,534.2 1439.3,533.8 1438.3,533.3 1437.3,532.9 1436.3,532.4 1435.3,531.9 1434.3,531.5 1433.3,531.0 1432.2,530.5 1431.2,530.0 1430.2,529.6 1429.1,529.1 1428.1,528.6 1427.0,528.2 1425.9,527.7 1424.9,527.2 1423.8,526.7 1422.7,526.3 1421.6,525.8 1420.5,525.3 1419.4,524.8 1418.3,524.4 1417.2,523.9 1416.0,523.4 1414.9,522.9 1413.8,522.5 1412.7,522.0 1411.5,521.5 1410.4,521.0 1409.2,520.6 1408.1,520.1 1406.9,519.6 1405.7,519.1 1404.6,518.6 1403.4,518.2 1402.2,517.7 1401.0,517.2 1399.8,516.7 1398.7,516.3 1397.5,515.8 1396.3,515.3 1395.1,514.8 1393.9,514.4 1392.6,513.9 1391.4,513.4 1390.2,513.0 1389.0,512.5 1387.8,512.0 1386.6,511.5 1385.3,511.1 1384.1,510.6 1382.9,510.1 1381.6,509.7 1380.4,509.2 1379.1,508.7 1377.9,508.3 1376.7,507.8 1375.4,507.4 1374.2,506.9 1372.9,506.4 1371.6,506.0 1370.4,505.5 1369.1,505.1 1367.9,504.6 1366.6,504.2 1365.3,503.7 1364.1,503.2 1362.8,502.8 1361.5,502.4 1360.3,501.9 1359.0,501.5 1357.7,501.0 1356.5,500.6 1355.2,500.1 1353.9,499.7 1352.6,499.3 1351.4,498.8 1350.1,498.4 1348.8,497.9 1347.6,497.5 1346.3,497.1 1345.0,496.7 1343.7,496.2 1342.5,495.8 1341.2,495.4 1339.9,495.0 1338.6,494.6 1337.4,494.1 1336.1,493.7 1334.8,493.3 1333.6,492.9 1332.3,492.5 1331.0,492.1 1329.8,491.7 1328.5,491.3 1327.2,490.9 1326.0,490.5 1324.7,490.1 1323.4,489.7 1322.2,489.3 1320.9,488.9 1319.7,488.6 1318.4,488.2 1317.2,487.8 1315.9,487.4 1314.7,487.0 1313.4,486.7 1312.2,486.3 1311.0,485.9 1309.7,485.6 1308.5,485.2 1307.3,484.9 1306.1,484.5 1304.8,484.1 1303.6,483.8 1302.4,483.4 1301.2,483.1 1300.0,482.8 1298.8,482.4 1297.6,482.1 1296.4,481.8 1295.2,481.4 1294.0,481.1 1292.8,480.8 1291.6,480.5 1290.5,480.1 1289.3,479.8 1288.1,479.5 1286.9,479.2 1285.8,478.9 1284.6,478.6 1283.5,478.3 1282.3,478.0 1281.2,477.7 1280.1,477.4 1278.9,477.1 1277.8,476.9 1276.7,476.6 1275.6,476.3 1274.5,476.0 1273.4,475.8 1272.3,475.5 1271.2,475.2 1270.1,475.0 1269.0,474.7 1267.9,474.5 1266.9,474.2 1265.8,474.0 1264.8,473.8 1263.7,473.5 1262.7,473.3 1261.6,473.1 1260.6,472.8 1259.6,472.6 1258.6,472.4 1257.5,472.2 1256.5,472.0 1255.5,471.8 1254.6,471.6 1253.6,471.4 1252.6,471.2 1251.6,471.0 1250.7,470.8 1249.7,470.6 1248.8,470.4 1247.8,470.2 1246.9,470.1 1246.0,469.9 1245.1,469.7 1244.1,469.6 1243.2,469.4 1242.4,469.3 1241.5,469.1 1240.6,469.0 1239.7,468.8 1238.9,468.7 1238.0,468.6 1237.2,468.4 1236.3,468.3 1235.5,468.2 1234.7,468.1 1233.9,468.0 1233.1,467.9 1232.3,467.8 1231.5,467.7 1230.7,467.6 1230.0,467.5 1229.2,467.4 1228.5,467.3 1227.7,467.2 1227.0,467.1 1226.3,467.1 1225.6,467.0 1224.9,466.9 1224.2,466.9 1223.5,466.8 1222.8,466.8 1222.1,466.7 1221.5,466.7 1220.8,466.6 1220.2,466.6 1219.6,466.6 1219.0,466.5 1218.3,466.5 1217.7,466.5 1217.2,466.5 1216.6,466.5 1216.0,466.5 1215.5,466.5 1214.9,466.5 1214.4,466.5 1213.8,466.5 1213.3,466.5 1212.8,466.5 1212.3,466.6 1211.8,466.6 1211.4,466.6 1210.9,466.6 1210.4,466.7 1210.0,466.7 1209.6,466.8 1209.1,466.8 1208.7,466.9 1208.3,466.9 1207.9,467.0 1207.5,467.1 1207.2,467.2 1206.8,467.2 1206.5,467.3 1206.1,467.4 1205.8,467.5 1205.5,467.6 1205.2,467.7 1204.9,467.8 1204.6,467.9 1204.3,468.0 1204.0,468.1 1203.8,468.2 1203.5,468.4 1203.3,468.5 1203.1,468.6 1202.9,468.7 1202.7,468.9 1202.5,469.0 1202.3,469.2 1202.2,469.3 1202.0,469.5 1201.9,469.6 1201.7,469.8 1201.6,470.0 1201.5,470.1 1201.4,470.3 1201.3,470.5 1201.2,470.7 1201.2,470.8 1201.1,471.0 1201.1,471.2 1201.0,471.4 1201.0,471.6 1201.0,471.8 1201.0,472.0 1201.0,472.2 1201.0,472.5 1201.1,472.7 1201.1,472.9 1201.2,473.1 1201.3,473.4 1201.3,473.6 1201.4,473.8 1201.5,474.1 1201.6,474.3 1201.8,474.6 1201.9,474.8 1202.0,475.1 1202.2,475.3 1202.4,475.6 1202.5,475.8 1202.7,476.1 1202.9,476.4 1203.1,476.7" fill="none" stroke="#262626" stroke-width="1.0" stroke-dasharray="5 2.4"/>
<polyline points="1475.0,589.4 1474.6,589.1 1474.3,588.8 1473.9,588.4 1473.5,588.1 1473.1,587.8 1472.7,587.5 1472.3,587.1 1471.9,586.8 1471.5,586.5 1471.1,586.1 1470.6,585.8 1470.1,585.4 1469.7,585.1 1469.2,584.8 1468.7,584.4 1468.2,584.0 1467.7,583.7 1467.2,583.3 1466.7,583.0 1466.1,582.6 1465.6,582.2 1465.0,581.9 1464.4,581.5 1463.9,581.1 1463.3,580.7 1462.7,580.4 1462.1,580.0 1461.5,579.6 1460.8,579.2 1460.2,578.8 1459.6,578.4 1458.9,578.0 1458.2,577.6 1457.6,577.2 1456.9,576.8 1456.2,576.4 1455.5,576.0 1454.8,575.6 1454.1,575.2 1453.3,574.8 1452.6,574.4 1451.9,574.0 1451.1,573.6 1450.4,573.2 1449.6,572.7 1448.8,572.3 1448.0,571.9 1447.2,571.5 1446.4,571.1 1445.6,570.6 1444.8,570.2 1444.0,569.8 1443.1,569.3 1442.3,568.9 1441.4,568.5 1440.6,568.0 1439.7,567.6 1438.8,567.1 1437.9,566.7 1437.1,566.3 1436.2,565.8 1435.3,565.4 1434.3,564.9 1433.4,564.5 1432.5,564.0 1431.6,563.6 1430.6,563.1 1429.7,562.7 1428.7,562.2 1427.7,561.8 1426.8,561.3 1425.8,560.9 1424.8,560.4 1423.8,560.0 1422.8,559.5 1421.8,559.0 1420.8,558.6 1419.8,558.1 1418.8,557.7 1417.7,557.2 1416.7,556.7 1415.7,556.3 1414.6,555.8 1413.6,555.3 1412.5,554.9 1411.4,554.4 1410.4,554.0 1409.3,553.5 1408.2,553.0 1407.1,552.6 1406.0,552.1 1404.9,551.6 1403.8,551.2 1402.7,550.7 1401.6,550.2 1400.5,549.8 1399.4,549.3 1398.2,548.8 1397.1,548.4 1396.0,547.9 1394.8,547.4 1393.7,547.0 1392.5,546.5 1391.4,546.0 1390.2,545.6 1389.1,545.1 1387.9,544.6 1386.7,544.2 1385.6,543.7 1384.4,543.2 1383.2,542.8 1382.0,542.3 1380.8,541.8 1379.6,541.4 1378.5,540.9 1377.3,540.5 1376.1,540.0 1374.9,539.5 1373.6,539.1 1372.4,538.6 1371.2,538.2 1370.0,537.7 1368.8,537.3 1367.6,536.8 1366.4,536.4 1365.1,535.9 1363.9,535.5 1362.7,535.0 1361.5,534.6 1360.2,534.1 1359.0,533.7 1357.8,533.2 1356.5,532.8 1355.3,532.3 1354.0,531.9 1352.8,531.4 1351.6,531.0 1350.3,530.6 1349.1,530.1 1347.8,529.7 1346.6,529.3 1345.3,528.8 1344.1,528.4 1342.9,528.0 1341.6,527.5 1340.4,527.1 1339.1,526.7 1337.9,526.3 1336.6,525.9 1335.4,525.4 1334.1,525.0 1332.9,524.6 1331.6,524.2 1330.4,523.8 1329.1,523.4 1327.9,523.0 1326.6,522.6 1325.4,522.2 1324.2,521.8 1322.9,521.4 1321.7,521.0 1320.4,520.6 1319.2,520.2 1318.0,519.8 1316.7,519.4 1315.5,519.0 1314.3,518.6 1313.0,518.3 1311.8,517.9 1310.6,517.5 1309.4,517.1 1308.1,516.8 1306.9,516.4 1305.7,516.0 1304.5,515.7 1303.3,515.3 1302.1,514.9 1300.9,514.6 1299.6,514.2 1298.4,513.9 1297.2,513.5 1296.0,513.2 1294.9,512.8 1293.7,512.5 1292.5,512.2 1291.3,511.8 1290.1,511.5 1288.9,511.2 1287.8,510.8 1286.6,510.5 1285.4,510.2 1284.3,509.9 1283.1,509.6 1282.0,509.3 1280.8,509.0 1279.7,508.7 1278.5,508.4 1277.4,508.1 1276.3,507.8 1275.2,507.5 1274.0,507.2 1272.9,506.9 1271.8,506.6 1270.7,506.3 1269.6,506.1 1268.5,505.8 1267.4,505.5 1266.3,505.3 1265.2,505.0 1264.2,504.7 1263.1,504.5 1262.0,504.2 1261.0,504.0 1259.9,503.7 1258.9,503.5 1257.8,503.3 1256.8,503.0 1255.8,502.8 1254.8,502.6 1253.8,502.3 1252.7,502.1 1251.7,501.9 1250.7,501.7 1249.8,501.5 1248.8,501.3 1247.8,501.1 1246.8,500.9 1245.9,500.7 1244.9,500.5 1244.0,500.3 1243.0,500.1 1242.1,499.9 1241.2,499.8 1240.2,499.6 1239.3,499.4 1238.4,499.3 1237.5,499.1 1236.6,498.9 1235.8,498.8 1234.9,498.6 1234.0,498.5 1233.2,498.4 1232.3,498.2 1231.5,498.1 1230.6,497.9 1229.8,497.8 1229.0,497.7 1228.2,497.6 1227.4,497.5 1226.6,497.4 1225.8,497.3 1225.0,497.2 1224.3,497.1 1223.5,497.0 1222.8,496.9 1222.0,496.8 1221.3,496.7 1220.6,496.6 1219.9,496.5 1219.2,496.5 1218.5,496.4 1217.8,496.3 1217.1,496.3 1216.4,496.2 1215.8,496.2 1215.1,496.1 1214.5,496.1 1213.8,496.1 1213.2,496.0 1212.6,496.0 1212.0,496.0 1211.4,496.0 1210.8,495.9 1210.2,495.9 1209.7,495.9 1209.1,495.9 1208.6,495.9 1208.0,495.9 1207.5,495.9 1207.0,495.9 1206.5,495.9 1206.0,496.0 1205.5,496.0 1205.0,496.0 1204.6,496.0 1204.1,496.1 1203.7,496.1 1203.2,496.2 1202.8,496.2 1202.4,496.3 1202.0,496.3 1201.6,496.4 1201.2,496.4 1200.8,496.5 1200.5,496.6 1200.1,496.7 1199.8,496.7 1199.5,496.8 1199.1,496.9 1198.8,497.0 1198.5,497.1 1198.2,497.2 1198.0,497.3 1197.7,497.4 1197.4,497.5 1197.2,497.6 1196.9,497.8 1196.7,497.9 1196.5,498.0 1196.3,498.1 1196.1,498.3 1195.9,498.4 1195.7,498.6 1195.6,498.7 1195.4,498.8 1195.3,499.0 1195.2,499.2 1195.0,499.3 1194.9,499.5 1194.8,499.7 1194.8,499.8 1194.7,500.0 1194.6,500.2 1194.6,500.4 1194.5,500.6 1194.5,500.8 1194.5,501.0 1194.5,501.2 1194.5,501.4 1194.5,501.6 1194.5,501.8 1194.5,502.0 1194.6,502.2 1194.6,502.4 1194.7,502.7 1194.8,502.9 1194.9,503.1" fill="none" stroke="#262626" stroke-width="1.0" stroke-dasharray="5 2.4"/>
<polyline points="1458.8,605.5 1458.4,605.2 1458.0,604.9 1457.6,604.5 1457.1,604.2 1456.7,603.9 1456.2,603.5 1455.7,603.2 1455.2,602.9 1454.7,602.5 1454.2,602.2 1453.7,601.8 1453.2,601.5 1452.7,601.1 1452.1,600.8 1451.6,600.4 1451.0,600.0 1450.4,599.7 1449.9,599.3 1449.3,598.9 1448.7,598.6 1448.1,598.2 1447.5,597.8 1446.8,597.5 1446.2,597.1 1445.6,596.7 1444.9,596.3 1444.3,595.9 1443.6,595.5 1442.9,595.2 1442.2,594.8 1441.5,594.4 1440.8,594.0 1440.1,593.6 1439.4,593.2 1438.7,592.8 1437.9,592.4 1437.2,592.0 1436.5,591.6 1435.7,591.2 1434.9,590.8 1434.2,590.4 1433.4,590.0 1432.6,589.5 1431.8,589.1 1431.0,588.7 1430.2,588.3 1429.3,587.9 1428.5,587.5 1427.7,587.0 1426.8,586.6 1426.0,586.2 1425.1,585.8 1424.3,585.3 1423.4,584.9 1422.5,584.5 1421.6,584.1 1420.7,583.6 1419.8,583.2 1418.9,582.8 1418.0,582.3 1417.1,581.9 1416.1,581.5 1415.2,581.0 1414.3,580.6 1413.3,580.2 1412.4,579.7 1411.4,579.3 1410.4,578.8 1409.5,578.4 1408.5,578.0 1407.5,577.5 1406.5,577.1 1405.5,576.6 1404.5,576.2 1403.5,575.7 1402.5,575.3 1401.5,574.9 1400.5,574.4 1399.4,574.0 1398.4,573.5 1397.4,573.1 1396.3,572.6 1395.3,572.2 1394.2,571.7 1393.2,571.3 1392.1,570.8 1391.0,570.4 1390.0,569.9 1388.9,569.5 1387.8,569.1 1386.7,568.6 1385.6,568.2 1384.5,567.7 1383.4,567.3 1382.3,566.8 1381.2,566.4 1380.1,565.9 1379.0,565.5 1377.9,565.0 1376.7,564.6 1375.6,564.2 1374.5,563.7 1373.4,563.3 1372.2,562.8 1371.1,562.4 1369.9,561.9 1368.8,561.5 1367.7,561.1 1366.5,560.6 1365.3,560.2 1364.2,559.7 1363.0,559.3 1361.9,558.9 1360.7,558.4 1359.5,558.0 1358.4,557.6 1357.2,557.1 1356.0,556.7 1354.9,556.3 1353.7,555.8 1352.5,555.4 1351.3,555.0 1350.1,554.6 1349.0,554.1 1347.8,553.7 1346.6,553.3 1345.4,552.9 1344.2,552.4 1343.0,552.0 1341.8,551.6 1340.7,551.2 1339.5,550.8 1338.3,550.4 1337.1,549.9 1335.9,549.5 1334.7,549.1 1333.5,548.7 1332.3,548.3 1331.1,547.9 1329.9,547.5 1328.7,547.1 1327.5,546.7 1326.3,546.3 1325.1,545.9 1323.9,545.5 1322.8,545.1 1321.6,544.7 1320.4,544.4 1319.2,544.0 1318.0,543.6 1316.8,543.2 1315.6,542.8 1314.4,542.4 1313.2,542.1 1312.1,541.7 1310.9,541.3 1309.7,541.0 1308.5,540.6 1307.3,540.2 1306.2,539.9 1305.0,539.5 1303.8,539.1 1302.6,538.8 1301.5,538.4 1300.3,538.1 1299.1,537.7 1298.0,537.4 1296.8,537.0 1295.7,536.7 1294.5,536.4 1293.4,536.0 1292.2,535.7 1291.1,535.4 1289.9,535.0 1288.8,534.7 1287.7,534.4 1286.5,534.1 1285.4,533.8 1284.3,533.4 1283.1,533.1 1282.0,532.8 1280.9,532.5 1279.8,532.2 1278.7,531.9 1277.6,531.6 1276.5,531.3 1275.4,531.0 1274.3,530.7 1273.2,530.5 1272.1,530.2 1271.1,529.9 1270.0,529.6 1268.9,529.3 1267.8,529.1 1266.8,528.8 1265.7,528.5 1264.7,528.3 1263.6,528.0 1262.6,527.8 1261.6,527.5 1260.5,527.3 1259.5,527.0 1258.5,526.8 1257.5,526.5 1256.5,526.3 1255.5,526.1 1254.5,525.8 1253.5,525.6 1252.5,525.4 1251.5,525.2 1250.6,525.0 1249.6,524.8 1248.6,524.5 1247.7,524.3 1246.7,524.1 1245.8,523.9 1244.8,523.7 1243.9,523.6 1243.0,523.4 1242.1,523.2 1241.2,523.0 1240.3,522.8 1239.4,522.7 1238.5,522.5 1237.6,522.3 1236.7,522.2 1235.9,522.0 1235.0,521.8 1234.2,521.7 1233.3,521.6 1232.5,521.4 1231.6,521.3 1230.8,521.1 1230.0,521.0 1229.2,520.9 1228.4,520.7 1227.6,520.6 1226.8,520.5 1226.1,520.4 1225.3,520.3 1224.5,520.2 1223.8,520.1 1223.0,520.0 1222.3,519.9 1221.6,519.8 1220.8,519.7 1220.1,519.6 1219.4,519.5 1218.7,519.5 1218.1,519.4 1217.4,519.3 1216.7,519.3 1216.0,519.2 1215.4,519.1 1214.8,519.1 1214.1,519.0 1213.5,519.0 1212.9,519.0 1212.3,518.9 1211.7,518.9 1211.1,518.9 1210.5,518.8 1209.9,518.8 1209.4,518.8 1208.8,518.8 1208.3,518.8 1207.8,518.8 1207.2,518.8 1206.7,518.8 1206.2,518.8 1205.7,518.8 1205.2,518.8 1204.8,518.8 1204.3,518.8 1203.8,518.9 1203.4,518.9 1202.9,518.9 1202.5,519.0 1202.1,519.0 1201.7,519.0 1201.3,519.1 1200.9,519.1 1200.5,519.2 1200.1,519.3 1199.8,519.3 1199.4,519.4 1199.1,519.5 1198.8,519.5 1198.4,519.6 1198.1,519.7 1197.8,519.8 1197.6,519.9 1197.3,520.0 1197.0,520.1 1196.7,520.2 1196.5,520.3 1196.3,520.4 1196.0,520.5 1195.8,520.6 1195.6,520.7 1195.4,520.9 1195.2,521.0 1195.0,521.1 1194.9,521.3 1194.7,521.4 1194.6,521.6 1194.4,521.7 1194.3,521.8 1194.2,522.0 1194.1,522.2 1194.0,522.3 1193.9,522.5 1193.8,522.7 1193.8,522.8 1193.7,523.0 1193.7,523.2 1193.6,523.4 1193.6,523.6 1193.6,523.7" fill="none" stroke="#262626" stroke-width="1.0" stroke-dasharray="5 2.4"/>
<polyline points="1452.6,610.7 1452.1,610.4 1451.7,610.0 1451.2,609.7 1450.8,609.4 1450.3,609.1 1449.8,608.7 1449.3,608.4 1448.8,608.0 1448.3,607.7 1447.8,607.3 1447.3,607.0 1446.7,606.7 1446.2,606.3 1445.6,605.9 1445.0,605.6 1444.5,605.2 1443.9,604.9 1443.3,604.5 1442.7,604.1 1442.1,603.8 1441.5,603.4 1440.8,603.0 1440.2,602.7 1439.6,602.3 1438.9,601.9 1438.2,601.5 1437.6,601.1 1436.9,600.8 1436.2,600.4 1435.5,600.0 1434.8,599.6 1434.1,599.2 1433.4,598.8 1432.7,598.4 1431.9,598.0 1431.2,597.6 1430.4,597.2 1429.7,596.8 1428.9,596.4 1428.1,596.0 1427.3,595.6 1426.6,595.2 1425.8,594.8 1425.0,594.4 1424.1,594.0 1423.3,593.6 1422.5,593.2 1421.7,592.7 1420.8,592.3 1420.0,591.9 1419.1,591.5 1418.3,591.1 1417.4,590.7 1416.5,590.2 1415.6,589.8 1414.7,589.4 1413.8,589.0 1412.9,588.5 1412.0,588.1 1411.1,587.7 1410.2,587.3 1409.3,586.8 1408.3,586.4 1407.4,586.0 1406.5,585.5 1405.5,585.1 1404.5,584.7 1403.6,584.2 1402.6,583.8 1401.6,583.4 1400.7,582.9 1399.7,582.5 1398.7,582.1 1397.7,581.6 1396.7,581.2 1395.7,580.8 1394.7,580.3 1393.7,579.9 1392.6,579.5 1391.6,579.0 1390.6,578.6 1389.5,578.2 1388.5,577.7 1387.4,577.3 1386.4,576.8 1385.3,576.4 1384.3,576.0 1383.2,575.5 1382.2,575.1 1381.1,574.7 1380.0,574.2 1378.9,573.8 1377.8,573.3 1376.8,572.9 1375.7,572.5 1374.6,572.0 1373.5,571.6 1372.4,571.2 1371.3,570.7 1370.2,570.3 1369.0,569.9 1367.9,569.4 1366.8,569.0 1365.7,568.6 1364.6,568.1 1363.4,567.7 1362.3,567.3 1361.2,566.8 1360.0,566.4 1358.9,566.0 1357.8,565.6 1356.6,565.1 1355.5,564.7 1354.3,564.3 1353.2,563.9 1352.0,563.4 1350.9,563.0 1349.7,562.6 1348.6,562.2 1347.4,561.8 1346.3,561.4 1345.1,560.9 1343.9,560.5 1342.8,560.1 1341.6,559.7 1340.5,559.3 1339.3,558.9 1338.1,558.5 1337.0,558.1 1335.8,557.7 1334.6,557.3 1333.5,556.9 1332.3,556.5 1331.1,556.1 1330.0,555.7 1328.8,555.3 1327.6,554.9 1326.4,554.5 1325.3,554.1 1324.1,553.7 1322.9,553.3 1321.8,552.9 1320.6,552.5 1319.4,552.2 1318.3,551.8 1317.1,551.4 1315.9,551.0 1314.8,550.7 1313.6,550.3 1312.5,549.9 1311.3,549.5 1310.1,549.2 1309.0,548.8 1307.8,548.5 1306.7,548.1 1305.5,547.7 1304.4,547.4 1303.2,547.0 1302.1,546.7 1300.9,546.3 1299.8,546.0 1298.6,545.6 1297.5,545.3 1296.4,545.0 1295.2,544.6 1294.1,544.3 1293.0,544.0 1291.8,543.6 1290.7,543.3 1289.6,543.0 1288.5,542.7 1287.4,542.3 1286.2,542.0 1285.1,541.7 1284.0,541.4 1282.9,541.1 1281.8,540.8 1280.7,540.5 1279.6,540.2 1278.5,539.9 1277.5,539.6 1276.4,539.3 1275.3,539.0 1274.2,538.7 1273.2,538.4 1272.1,538.2 1271.0,537.9 1270.0,537.6 1268.9,537.3 1267.9,537.1 1266.8,536.8 1265.8,536.5 1264.8,536.3 1263.8,536.0 1262.7,535.8 1261.7,535.5 1260.7,535.3 1259.7,535.0 1258.7,534.8 1257.7,534.6 1256.7,534.3 1255.7,534.1 1254.7,533.9 1253.8,533.7 1252.8,533.4 1251.8,533.2 1250.9,533.0 1249.9,532.8 1249.0,532.6 1248.0,532.4 1247.1,532.2 1246.2,532.0 1245.2,531.8 1244.3,531.6 1243.4,531.4 1242.5,531.2 1241.6,531.1 1240.7,530.9 1239.8,530.7 1239.0,530.5 1238.1,530.4 1237.2,530.2 1236.4,530.0 1235.5,529.9 1234.7,529.7 1233.9,529.6 1233.0,529.4 1232.2,529.3 1231.4,529.2 1230.6,529.0 1229.8,528.9 1229.0,528.8 1228.2,528.7 1227.4,528.5 1226.7,528.4 1225.9,528.3 1225.2,528.2 1224.4,528.1 1223.7,528.0 1223.0,527.9 1222.2,527.8 1221.5,527.7 1220.8,527.6 1220.1,527.6 1219.4,527.5 1218.8,527.4 1218.1,527.3 1217.4,527.3 1216.8,527.2 1216.1,527.1 1215.5,527.1 1214.9,527.0 1214.2,527.0 1213.6,526.9 1213.0,526.9 1212.4,526.9 1211.8,526.8 1211.3,526.8 1210.7,526.8 1210.1,526.8 1209.6,526.7 1209.1,526.7 1208.5,526.7 1208.0,526.7 1207.5,526.7 1207.0,526.7 1206.5,526.7 1206.0,526.7 1205.5,526.7 1205.1,526.8 1204.6,526.8 1204.2,526.8 1203.7,526.8 1203.3,526.9 1202.9,526.9 1202.5,526.9 1202.1,527.0 1201.7,527.0 1201.3,527.1 1200.9,527.1 1200.5,527.2 1200.2,527.3 1199.9,527.3 1199.5,527.4 1199.2,527.5 1198.9,527.6 1198.6,527.6 1198.3,527.7 1198.0,527.8 1197.7,527.9 1197.5,528.0 1197.2,528.1 1197.0,528.2 1196.7,528.3 1196.5,528.4 1196.3,528.5 1196.1,528.7 1195.9,528.8 1195.7,528.9 1195.5,529.0 1195.4,529.2 1195.2,529.3 1195.1,529.4 1194.9,529.6 1194.8,529.7 1194.7,529.9 1194.6,530.0 1194.5,530.2 1194.4,530.4 1194.4,530.5 1194.3,530.7 1194.2,530.9 1194.2,531.0" fill="none" stroke="#262626" stroke-width="1.0" stroke-dasharray="5 2.4"/>
<polyline points="1494.0,557.7 1494.3,556.6 1494.5,555.6 1494.7,554.5 1495.0,553.5 1495.2,552.5 1495.4,551.4 1495.6,550.4 1495.8,549.4 1495.9,548.3 1496.1,547.3 1496.3,546.3 1496.4,545.3 1496.6,544.3 1496.7,543.3 1496.9,542.3 1497.0,541.3 1497.1,540.3 1497.2,539.4 1497.3,538.4 1497.4,537.4 1497.5,536.5 1497.6,535.6 1497.7,534.6 1497.8,533.7 1497.9,532.8 1497.9,531.9 1498.0,531.0 1498.1,530.2 1498.1,529.3 1498.2,528.4 1498.2,527.6 1498.2,526.8 1498.3,526.0 1498.3,525.2 1498.3,524.4 1498.4,523.6 1498.4,522.8 1498.4,522.1 1498.4,521.3 1498.4,520.6 1498.4,519.9 1498.4,519.2 1498.4,518.5 1498.4,517.9 1498.4,517.2 1498.4,516.6 1498.4,516.0 1498.4,515.4 1498.4,514.8 1498.4,514.2 1498.4,513.7 1498.4,513.2 1498.4,512.6 1498.4,512.1 1498.4,511.7 1498.4,511.2 1498.4,510.8 1498.4,510.3 1498.3,509.9 1498.3,509.5 1498.3,509.1 1498.3,508.8 1498.3,508.4 1498.3,508.1 1498.3,507.8 1498.3,507.5 1498.3,507.2 1498.3,507.0 1498.3,506.7 1498.3,506.5 1498.3,506.3 1498.3,506.1 1498.3,506.0 1498.3,505.8 1498.3,505.7 1498.3,505.6 1498.3,505.5 1498.3,505.4 1498.4,505.3 1498.4,505.3 1498.4,505.3 1498.4,505.3 1498.4,505.3 1498.4,505.3 1498.5,505.4 1498.5,505.4 1498.5,505.5 1498.5,505.6 1498.6,505.7 1498.6,505.9 1498.6,506.0 1498.7,506.2 1498.7,506.4" fill="none" stroke="#2a2a2a" stroke-width="1.0"/>
<polyline points="1498.7,506.4 1498.7,506.6 1498.7,506.8 1498.8,507.1 1498.8,507.3 1498.9,507.6 1498.9,507.9 1498.9,508.2 1499.0,508.5 1499.0,508.8 1499.0,509.2 1499.1,509.6 1499.1,510.0 1499.1,510.4 1499.2,510.8 1499.2,511.2 1499.2,511.7 1499.3,512.1 1499.3,512.6 1499.3,513.1 1499.3,513.6 1499.4,514.1 1499.4,514.7 1499.4,515.2 1499.4,515.8 1499.4,516.4 1499.4,517.0 1499.4,517.6 1499.4,518.2 1499.4,518.9 1499.4,519.5 1499.4,520.2 1499.4,520.8 1499.4,521.5 1499.4,522.2 1499.3,522.9 1499.3,523.6 1499.3,524.4 1499.2,525.1 1499.2,525.9 1499.1,526.6 1499.1,527.4 1499.0,528.2 1498.9,529.0 1498.9,529.8 1498.8,530.6 1498.7,531.4 1498.6,532.3 1498.5,533.1 1498.4,533.9 1498.2,534.8 1498.1,535.7 1498.0,536.5 1497.8,537.4 1497.7,538.3 1497.5,539.2 1497.3,540.1 1497.2,541.0 1497.0,541.9 1496.8,542.8 1496.6,543.7 1496.4,544.6 1496.2,545.5 1495.9,546.5 1495.7,547.4 1495.4,548.3 1495.2,549.3 1494.9,550.2 1494.7,551.1 1494.4,552.1 1494.1,553.0 1493.8,554.0 1493.5,554.9 1493.2,555.9 1492.8,556.8 1492.5,557.8 1492.2,558.7 1491.8,559.7 1491.5,560.6 1491.1,561.6 1490.7,562.5 1490.4,563.5 1490.0,564.4 1489.6,565.3 1489.2,566.3 1488.8,567.2 1488.4,568.1 1487.9,569.1 1487.5,570.0 1487.1,570.9 1486.6,571.8 1486.2,572.7 1485.8,573.7 1485.3,574.6 1484.9,575.5 1484.4,576.4 1483.9,577.3 1483.5,578.1 1483.0,579.0" fill="none" stroke="#2a2a2a" stroke-width="1.0" stroke-dasharray="5 2.4"/>
<polyline points="1451.3,608.3 1451.5,608.3 1451.8,608.2 1452.1,608.0 1452.3,607.9 1452.6,607.7 1452.9,607.6 1453.2,607.4 1453.5,607.2 1453.8,607.0 1454.1,606.8 1454.5,606.5 1454.8,606.3 1455.1,606.0 1455.5,605.7 1455.9,605.4 1456.2,605.1 1456.6,604.8 1457.0,604.4 1457.4,604.1 1457.8,603.7 1458.2,603.3 1458.6,602.9 1459.0,602.5 1459.4,602.0 1459.8,601.6 1460.2,601.1 1460.6,600.6 1461.1,600.1 1461.5,599.6 1461.9,599.1 1462.4,598.5 1462.8,597.9 1463.3,597.4 1463.7,596.8 1464.2,596.2 1464.6,595.6 1465.1,594.9 1465.5,594.3 1466.0,593.6 1466.4,592.9 1466.9,592.2 1467.3,591.5 1467.8,590.8 1468.2,590.1 1468.7,589.3 1469.1,588.6 1469.5,587.8 1470.0,587.0 1470.4,586.2 1470.9,585.4 1471.3,584.6 1471.7,583.8 1472.1,582.9 1472.6,582.0 1473.0,581.2 1473.4,580.3 1473.8,579.4 1474.2,578.5 1474.6,577.6 1475.0,576.7 1475.4,575.7 1475.8,574.8 1476.2,573.8 1476.6,572.9 1476.9,571.9 1477.3,570.9 1477.6,569.9 1478.0,569.0 1478.3,568.0 1478.7,566.9 1479.0,565.9 1479.3,564.9 1479.6,563.9 1479.9,562.9 1480.2,561.8 1480.5,560.8 1480.8,559.8 1481.1,558.7 1481.4,557.7 1481.6,556.6 1481.9,555.6 1482.1,554.5 1482.4,553.4 1482.6,552.4 1482.8,551.3 1483.1,550.3 1483.3,549.2 1483.5,548.2 1483.7,547.1 1483.9,546.0 1484.0,545.0 1484.2,543.9 1484.4,542.9 1484.5,541.9 1484.7,540.8 1484.8,539.8 1485.0,538.8 1485.1,537.7 1485.3,536.7 1485.4,535.7 1485.5,534.7 1485.6,533.7 1485.7,532.7 1485.8,531.7 1485.9,530.7 1486.0,529.8 1486.1,528.8 1486.2,527.8 1486.2,526.9 1486.3,526.0 1486.4,525.0 1486.4,524.1 1486.5,523.2 1486.5,522.3 1486.6,521.4 1486.6,520.6 1486.7,519.7 1486.7,518.9 1486.8,518.0 1486.8,517.2 1486.8,516.4 1486.9,515.6 1486.9,514.8 1486.9,514.1 1486.9,513.3 1487.0,512.6 1487.0,511.9 1487.0,511.1 1487.0,510.5 1487.0,509.8 1487.1,509.1 1487.1,508.5 1487.1,507.8 1487.1,507.2 1487.1,506.6 1487.1,506.0 1487.2,505.5 1487.2,504.9 1487.2,504.4 1487.2,503.9 1487.2,503.4 1487.2,502.9 1487.2,502.4 1487.3,502.0 1487.3,501.5 1487.3,501.1 1487.3,500.7 1487.3,500.3 1487.4,500.0 1487.4,499.6 1487.4,499.3 1487.4,499.0 1487.5,498.7 1487.5,498.4 1487.5,498.1 1487.6,497.9 1487.6,497.7 1487.6,497.5 1487.7,497.3 1487.7,497.1 1487.7,497.0 1487.8,496.8 1487.8,496.7 1487.9,496.6 1487.9,496.5 1487.9,496.5 1488.0,496.4 1488.0,496.4 1488.1,496.4 1488.1,496.4 1488.2,496.4 1488.2,496.4 1488.3,496.5 1488.3,496.6 1488.4,496.7 1488.5,496.8 1488.5,496.9 1488.6,497.0 1488.6,497.2 1488.7,497.4 1488.7,497.6" fill="none" stroke="#2a2a2a" stroke-width="1.0"/>
<polyline points="1488.7,497.6 1488.8,497.8 1488.8,498.0 1488.9,498.2 1488.9,498.5 1489.0,498.8 1489.0,499.1 1489.1,499.4 1489.1,499.7 1489.2,500.0 1489.2,500.4 1489.3,500.7 1489.3,501.1 1489.4,501.5 1489.4,501.9 1489.4,502.4 1489.5,502.8 1489.5,503.3 1489.5,503.8 1489.6,504.2 1489.6,504.7 1489.6,505.3 1489.6,505.8 1489.6,506.3 1489.6,506.9 1489.6,507.5 1489.6,508.0 1489.6,508.6 1489.6,509.2 1489.6,509.9 1489.5,510.5 1489.5,511.1 1489.5,511.8 1489.4,512.5 1489.4,513.2 1489.3,513.8 1489.3,514.5 1489.2,515.3 1489.1,516.0 1489.0,516.7 1488.9,517.5 1488.8,518.2 1488.7,519.0 1488.6,519.7 1488.5,520.5 1488.4,521.3 1488.2,522.1 1488.1,522.9 1487.9,523.7 1487.8,524.6 1487.6,525.4 1487.4,526.2 1487.2,527.1 1487.0,527.9 1486.8,528.8 1486.6,529.6 1486.4,530.5 1486.1,531.4 1485.9,532.3 1485.6,533.2 1485.4,534.1 1485.1,534.9 1484.8,535.8 1484.5,536.7 1484.2,537.7 1483.9,538.6 1483.6,539.5 1483.3,540.4 1482.9,541.3 1482.6,542.2 1482.2,543.2 1481.9,544.1 1481.5,545.0 1481.1,545.9 1480.7,546.9 1480.3,547.8 1479.9,548.7 1479.5,549.7 1479.1,550.6 1478.7,551.5 1478.3,552.4 1477.8,553.4 1477.4,554.3 1476.9,555.2 1476.5,556.1 1476.0,557.1 1475.5,558.0 1475.1,558.9 1474.6,559.8 1474.1,560.7 1473.6,561.6 1473.2,562.5 1472.7,563.4 1472.2,564.3 1471.7,565.2 1471.2,566.1 1470.7,567.0 1470.2,567.9 1469.7,568.8 1469.2,569.6 1468.7,570.5 1468.2,571.3 1467.6,572.2 1467.1,573.0 1466.6,573.9 1466.1,574.7 1465.6,575.5 1465.1,576.4 1464.6,577.2 1464.1,578.0 1463.7,578.8 1463.2,579.6 1462.7,580.4 1462.2,581.1 1461.7,581.9 1461.3,582.7 1460.8,583.4 1460.3,584.2 1459.9,584.9 1459.4,585.6 1459.0,586.3 1458.5,587.0 1458.1,587.7 1457.7,588.4 1457.3,589.1 1456.8,589.8 1456.4,590.4 1456.1,591.1 1455.7,591.7 1455.3,592.4 1454.9,593.0 1454.6,593.6 1454.2,594.2 1453.9,594.8 1453.5,595.4 1453.2,595.9 1452.9,596.5 1452.6,597.0 1452.3,597.5 1452.0,598.1 1451.8,598.6 1451.5,599.1 1451.3,599.6 1451.0,600.0 1450.8,600.5 1450.6,601.0 1450.4,601.4 1450.2,601.8 1450.0,602.2 1449.8,602.6 1449.7,603.0 1449.5,603.4 1449.4,603.8 1449.3,604.1 1449.2,604.5 1449.1,604.8 1449.0,605.1 1448.9,605.4 1448.8,605.7 1448.8,606.0 1448.7,606.2 1448.7,606.5 1448.7,606.7 1448.7,606.9 1448.7,607.1 1448.7,607.3 1448.8,607.5 1448.8,607.7 1448.9,607.8 1448.9,608.0 1449.0,608.1 1449.1,608.2 1449.2,608.3 1449.3,608.4 1449.4,608.4 1449.6,608.5 1449.7,608.5 1449.9,608.6 1450.1,608.6 1450.2,608.6 1450.4,608.6 1450.6,608.5 1450.8,608.5 1451.1,608.4 1451.3,608.3" fill="none" stroke="#2a2a2a" stroke-width="1.0" stroke-dasharray="5 2.4"/>
<polyline points="1433.0,597.3 1433.3,597.2 1433.6,597.1 1433.9,597.0 1434.2,596.9 1434.5,596.7 1434.9,596.6 1435.2,596.4 1435.5,596.2 1435.9,596.0 1436.2,595.8 1436.6,595.5 1437.0,595.3 1437.3,595.0 1437.7,594.7 1438.1,594.4 1438.5,594.1 1438.9,593.8 1439.3,593.4 1439.7,593.1 1440.1,592.7 1440.5,592.3 1440.9,591.9 1441.4,591.4 1441.8,591.0 1442.2,590.5 1442.6,590.0 1443.1,589.5 1443.5,589.0 1443.9,588.5 1444.4,588.0 1444.8,587.4 1445.2,586.8 1445.7,586.2 1446.1,585.6 1446.5,585.0 1447.0,584.4 1447.4,583.7 1447.8,583.1 1448.3,582.4 1448.7,581.7 1449.1,581.0 1449.6,580.3 1450.0,579.6 1450.4,578.8 1450.8,578.0 1451.2,577.3 1451.7,576.5 1452.1,575.7 1452.5,574.9 1452.9,574.0 1453.3,573.2 1453.7,572.3 1454.0,571.5 1454.4,570.6 1454.8,569.7 1455.2,568.8 1455.6,567.9 1455.9,567.0 1456.3,566.0 1456.6,565.1 1457.0,564.1 1457.3,563.2 1457.6,562.2 1458.0,561.2 1458.3,560.3 1458.6,559.3 1458.9,558.3 1459.2,557.3 1459.5,556.2 1459.8,555.2 1460.1,554.2 1460.4,553.2 1460.6,552.1 1460.9,551.1 1461.1,550.0 1461.4,549.0 1461.6,547.9 1461.8,546.9 1462.1,545.8 1462.3,544.8 1462.5,543.7 1462.7,542.6 1462.9,541.6 1463.1,540.5 1463.3,539.4 1463.5,538.4 1463.6,537.3 1463.8,536.2 1464.0,535.2 1464.1,534.1 1464.3,533.1 1464.4,532.0 1464.5,531.0 1464.7,529.9 1464.8,528.9 1464.9,527.8 1465.0,526.8 1465.1,525.8 1465.2,524.8 1465.3,523.7 1465.4,522.7 1465.5,521.7 1465.6,520.7 1465.7,519.8 1465.8,518.8 1465.9,517.8 1465.9,516.9 1466.0,515.9 1466.1,515.0 1466.1,514.1 1466.2,513.1 1466.3,512.2 1466.3,511.3 1466.4,510.5 1466.4,509.6 1466.5,508.7 1466.5,507.9 1466.6,507.0 1466.6,506.2 1466.7,505.4 1466.7,504.6 1466.8,503.8 1466.8,503.1 1466.9,502.3 1466.9,501.6 1466.9,500.9 1467.0,500.2 1467.0,499.5 1467.1,498.8 1467.1,498.1 1467.2,497.5 1467.2,496.8 1467.2,496.2 1467.3,495.6 1467.3,495.1 1467.4,494.5 1467.4,493.9 1467.5,493.4 1467.5,492.9 1467.6,492.4 1467.6,491.9 1467.7,491.4 1467.7,491.0 1467.8,490.5 1467.8,490.1 1467.9,489.7 1467.9,489.3 1468.0,489.0 1468.1,488.6 1468.1,488.3 1468.2,488.0 1468.3,487.7 1468.3,487.4 1468.4,487.1 1468.5,486.9 1468.5,486.7 1468.6,486.5 1468.7,486.3 1468.7,486.1 1468.8,485.9 1468.9,485.8 1469.0,485.7 1469.0,485.6 1469.1,485.5 1469.2,485.4 1469.3,485.3 1469.3,485.3 1469.4,485.3 1469.5,485.3 1469.6,485.3 1469.7,485.3 1469.7,485.4 1469.8,485.4 1469.9,485.5 1470.0,485.6 1470.0,485.7 1470.1,485.8 1470.2,486.0 1470.3,486.2 1470.3,486.3 1470.4,486.5" fill="none" stroke="#2a2a2a" stroke-width="1.0"/>
<polyline points="1470.4,486.5 1470.5,486.7 1470.5,487.0 1470.6,487.2 1470.7,487.5 1470.7,487.7 1470.8,488.0 1470.8,488.3 1470.9,488.6 1471.0,489.0 1471.0,489.3 1471.0,489.7 1471.1,490.1 1471.1,490.4 1471.2,490.9 1471.2,491.3 1471.2,491.7 1471.2,492.2 1471.2,492.6 1471.2,493.1 1471.3,493.6 1471.3,494.1 1471.2,494.6 1471.2,495.1 1471.2,495.7 1471.2,496.2 1471.2,496.8 1471.1,497.4 1471.1,498.0 1471.0,498.6 1471.0,499.2 1470.9,499.8 1470.8,500.4 1470.7,501.1 1470.7,501.8 1470.6,502.4 1470.5,503.1 1470.3,503.8 1470.2,504.5 1470.1,505.2 1469.9,505.9 1469.8,506.7 1469.6,507.4 1469.5,508.2 1469.3,508.9 1469.1,509.7 1468.9,510.5 1468.7,511.3 1468.5,512.0 1468.3,512.8 1468.0,513.6 1467.8,514.5 1467.6,515.3 1467.3,516.1 1467.0,516.9 1466.7,517.8 1466.5,518.6 1466.2,519.5 1465.8,520.3 1465.5,521.2 1465.2,522.1 1464.9,523.0 1464.5,523.8 1464.2,524.7 1463.8,525.6 1463.4,526.5 1463.0,527.4 1462.6,528.3 1462.2,529.2 1461.8,530.1 1461.4,531.0 1461.0,531.9 1460.6,532.8 1460.1,533.7 1459.7,534.6 1459.2,535.5 1458.8,536.4 1458.3,537.4 1457.8,538.3 1457.4,539.2 1456.9,540.1 1456.4,541.0 1455.9,541.9 1455.4,542.9 1454.9,543.8 1454.4,544.7 1453.9,545.6 1453.4,546.5 1452.9,547.4 1452.3,548.3 1451.8,549.2 1451.3,550.1 1450.8,551.0 1450.2,551.9 1449.7,552.8 1449.2,553.7 1448.7,554.6 1448.1,555.4 1447.6,556.3 1447.1,557.2 1446.6,558.1 1446.1,558.9 1445.5,559.8 1445.0,560.6 1444.5,561.5 1444.0,562.3 1443.5,563.2 1443.0,564.0 1442.5,564.8 1442.0,565.6 1441.5,566.4 1441.0,567.2 1440.6,568.0 1440.1,568.8 1439.6,569.6 1439.2,570.4 1438.7,571.1 1438.3,571.9 1437.9,572.6 1437.4,573.4 1437.0,574.1 1436.6,574.8 1436.2,575.6 1435.8,576.3 1435.4,577.0 1435.1,577.7 1434.7,578.3 1434.3,579.0 1434.0,579.7 1433.7,580.3 1433.3,580.9 1433.0,581.6 1432.7,582.2 1432.4,582.8 1432.2,583.4 1431.9,584.0 1431.6,584.6 1431.4,585.1 1431.2,585.7 1430.9,586.2 1430.7,586.8 1430.5,587.3 1430.3,587.8 1430.2,588.3 1430.0,588.8 1429.8,589.3 1429.7,589.7 1429.6,590.2 1429.5,590.6 1429.4,591.0 1429.3,591.4 1429.2,591.8 1429.1,592.2 1429.1,592.6 1429.0,593.0 1429.0,593.3 1429.0,593.6 1429.0,594.0 1429.0,594.3 1429.0,594.6 1429.0,594.8 1429.1,595.1 1429.1,595.4 1429.2,595.6 1429.2,595.8 1429.3,596.0 1429.4,596.2 1429.5,596.4 1429.7,596.6 1429.8,596.7 1429.9,596.9 1430.1,597.0 1430.2,597.1 1430.4,597.2 1430.6,597.3 1430.8,597.4 1431.0,597.4 1431.2,597.5 1431.4,597.5 1431.7,597.5 1431.9,597.5 1432.2,597.5 1432.4,597.4 1432.7,597.4 1433.0,597.3" fill="none" stroke="#2a2a2a" stroke-width="1.0" stroke-dasharray="5 2.4"/>
<polyline points="1407.6,584.8 1407.9,584.7 1408.2,584.6 1408.6,584.5 1408.9,584.4 1409.2,584.2 1409.6,584.1 1409.9,583.9 1410.3,583.7 1410.7,583.5 1411.1,583.3 1411.4,583.0 1411.8,582.8 1412.2,582.5 1412.6,582.2 1413.0,581.9 1413.4,581.5 1413.8,581.2 1414.2,580.8 1414.6,580.5 1415.0,580.1 1415.4,579.7 1415.8,579.2 1416.2,578.8 1416.6,578.3 1417.1,577.8 1417.5,577.4 1417.9,576.8 1418.3,576.3 1418.7,575.8 1419.1,575.2 1419.6,574.7 1420.0,574.1 1420.4,573.5 1420.8,572.8 1421.2,572.2 1421.6,571.6 1422.0,570.9 1422.4,570.2 1422.8,569.5 1423.2,568.8 1423.6,568.1 1424.0,567.3 1424.4,566.6 1424.8,565.8 1425.2,565.0 1425.6,564.2 1425.9,563.4 1426.3,562.6 1426.7,561.8 1427.0,560.9 1427.4,560.1 1427.7,559.2 1428.1,558.3 1428.4,557.4 1428.7,556.5 1429.1,555.6 1429.4,554.7 1429.7,553.7 1430.0,552.8 1430.3,551.8 1430.6,550.9 1430.9,549.9 1431.2,548.9 1431.5,547.9 1431.8,546.9 1432.0,545.9 1432.3,544.9 1432.5,543.9 1432.8,542.8 1433.0,541.8 1433.3,540.8 1433.5,539.7 1433.7,538.7 1433.9,537.6 1434.1,536.6 1434.3,535.5 1434.5,534.4 1434.7,533.4 1434.9,532.3 1435.1,531.2 1435.3,530.2 1435.5,529.1 1435.6,528.0 1435.8,527.0 1435.9,525.9 1436.1,524.8 1436.2,523.8 1436.4,522.7 1436.5,521.6 1436.6,520.6 1436.8,519.5 1436.9,518.5 1437.0,517.4 1437.1,516.4 1437.2,515.3 1437.3,514.3 1437.4,513.3 1437.5,512.3 1437.6,511.3 1437.7,510.2 1437.8,509.2 1437.9,508.3 1438.0,507.3 1438.1,506.3 1438.2,505.3 1438.2,504.4 1438.3,503.4 1438.4,502.5 1438.5,501.6 1438.5,500.7 1438.6,499.8 1438.7,498.9 1438.8,498.0 1438.8,497.1 1438.9,496.3 1439.0,495.4 1439.0,494.6 1439.1,493.8 1439.2,493.0 1439.3,492.2 1439.3,491.4 1439.4,490.6 1439.5,489.9 1439.6,489.2 1439.6,488.4 1439.7,487.7 1439.8,487.0 1439.9,486.4 1439.9,485.7 1440.0,485.1 1440.1,484.4 1440.2,483.8 1440.3,483.2 1440.3,482.7 1440.4,482.1 1440.5,481.5 1440.6,481.0 1440.7,480.5 1440.8,480.0 1440.9,479.5 1441.0,479.0 1441.1,478.6 1441.1,478.2 1441.2,477.7 1441.3,477.3 1441.4,477.0 1441.5,476.6 1441.6,476.2 1441.7,475.9 1441.8,475.6 1441.9,475.3 1442.1,475.0 1442.2,474.7 1442.3,474.5 1442.4,474.3 1442.5,474.1 1442.6,473.9 1442.7,473.7 1442.8,473.5 1442.9,473.4 1443.0,473.2 1443.1,473.1 1443.2,473.0 1443.3,472.9 1443.4,472.9 1443.6,472.8 1443.7,472.8 1443.8,472.8 1443.9,472.8 1444.0,472.8 1444.1,472.8 1444.2,472.9 1444.3,472.9 1444.4,473.0 1444.5,473.1 1444.6,473.2 1444.6,473.4 1444.7,473.5 1444.8,473.7 1444.9,473.8 1445.0,474.0" fill="none" stroke="#2a2a2a" stroke-width="1.0"/>
<polyline points="1445.0,474.0 1445.0,474.2 1445.1,474.5 1445.2,474.7 1445.3,474.9 1445.3,475.2 1445.4,475.5 1445.4,475.8 1445.5,476.1 1445.5,476.4 1445.6,476.8 1445.6,477.1 1445.6,477.5 1445.6,477.9 1445.7,478.3 1445.7,478.7 1445.7,479.1 1445.7,479.5 1445.7,480.0 1445.6,480.4 1445.6,480.9 1445.6,481.4 1445.6,481.9 1445.5,482.4 1445.5,482.9 1445.4,483.5 1445.3,484.0 1445.3,484.6 1445.2,485.1 1445.1,485.7 1445.0,486.3 1444.9,486.9 1444.7,487.6 1444.6,488.2 1444.5,488.8 1444.3,489.5 1444.2,490.1 1444.0,490.8 1443.8,491.5 1443.7,492.2 1443.5,492.9 1443.3,493.6 1443.0,494.3 1442.8,495.0 1442.6,495.8 1442.3,496.5 1442.1,497.3 1441.8,498.0 1441.5,498.8 1441.3,499.6 1441.0,500.4 1440.7,501.2 1440.3,502.0 1440.0,502.8 1439.7,503.6 1439.3,504.4 1439.0,505.2 1438.6,506.1 1438.3,506.9 1437.9,507.7 1437.5,508.6 1437.1,509.4 1436.7,510.3 1436.3,511.2 1435.8,512.0 1435.4,512.9 1434.9,513.8 1434.5,514.7 1434.0,515.5 1433.6,516.4 1433.1,517.3 1432.6,518.2 1432.1,519.1 1431.6,520.0 1431.1,520.9 1430.6,521.8 1430.1,522.7 1429.6,523.6 1429.1,524.5 1428.6,525.4 1428.1,526.3 1427.5,527.3 1427.0,528.2 1426.5,529.1 1425.9,530.0 1425.4,530.9 1424.8,531.8 1424.3,532.7 1423.8,533.6 1423.2,534.5 1422.7,535.4 1422.1,536.3 1421.6,537.2 1421.0,538.1 1420.5,539.0 1420.0,539.9 1419.4,540.8 1418.9,541.7 1418.4,542.6 1417.8,543.4 1417.3,544.3 1416.8,545.2 1416.3,546.0 1415.8,546.9 1415.2,547.8 1414.8,548.6 1414.3,549.5 1413.8,550.3 1413.3,551.1 1412.8,552.0 1412.3,552.8 1411.9,553.6 1411.4,554.4 1411.0,555.2 1410.6,556.0 1410.1,556.8 1409.7,557.6 1409.3,558.4 1408.9,559.1 1408.5,559.9 1408.1,560.6 1407.8,561.4 1407.4,562.1 1407.1,562.9 1406.7,563.6 1406.4,564.3 1406.1,565.0 1405.8,565.7 1405.5,566.3 1405.2,567.0 1404.9,567.7 1404.7,568.3 1404.4,569.0 1404.2,569.6 1404.0,570.2 1403.8,570.8 1403.6,571.4 1403.4,572.0 1403.2,572.6 1403.0,573.2 1402.9,573.7 1402.7,574.3 1402.6,574.8 1402.5,575.3 1402.4,575.8 1402.3,576.3 1402.2,576.8 1402.2,577.2 1402.1,577.7 1402.1,578.1 1402.1,578.6 1402.0,579.0 1402.0,579.4 1402.0,579.8 1402.1,580.2 1402.1,580.5 1402.1,580.9 1402.2,581.2 1402.3,581.5 1402.3,581.9 1402.4,582.2 1402.5,582.4 1402.6,582.7 1402.8,583.0 1402.9,583.2 1403.0,583.4 1403.2,583.6 1403.4,583.8 1403.5,584.0 1403.7,584.2 1403.9,584.3 1404.1,584.5 1404.3,584.6 1404.5,584.7 1404.8,584.8 1405.0,584.8 1405.3,584.9 1405.5,584.9 1405.8,585.0 1406.1,585.0 1406.4,585.0 1406.7,585.0 1406.9,584.9 1407.3,584.9 1407.6,584.8" fill="none" stroke="#2a2a2a" stroke-width="1.0" stroke-dasharray="5 2.4"/>
<polyline points="1376.7,571.7 1377.1,571.6 1377.4,571.5 1377.8,571.4 1378.1,571.2 1378.5,571.1 1378.8,570.9 1379.2,570.7 1379.6,570.5 1379.9,570.3 1380.3,570.1 1380.7,569.8 1381.1,569.5 1381.4,569.2 1381.8,568.9 1382.2,568.6 1382.6,568.3 1383.0,567.9 1383.4,567.5 1383.8,567.1 1384.1,566.7 1384.5,566.3 1384.9,565.8 1385.3,565.4 1385.7,564.9 1386.1,564.4 1386.5,563.9 1386.9,563.4 1387.3,562.8 1387.6,562.3 1388.0,561.7 1388.4,561.1 1388.8,560.5 1389.2,559.9 1389.6,559.2 1389.9,558.6 1390.3,557.9 1390.7,557.2 1391.0,556.5 1391.4,555.8 1391.7,555.1 1392.1,554.3 1392.4,553.6 1392.8,552.8 1393.1,552.0 1393.5,551.2 1393.8,550.4 1394.1,549.6 1394.5,548.7 1394.8,547.9 1395.1,547.0 1395.4,546.1 1395.7,545.3 1396.0,544.4 1396.3,543.4 1396.6,542.5 1396.8,541.6 1397.1,540.7 1397.4,539.7 1397.7,538.7 1397.9,537.8 1398.2,536.8 1398.4,535.8 1398.7,534.8 1398.9,533.8 1399.1,532.8 1399.3,531.8 1399.6,530.7 1399.8,529.7 1400.0,528.7 1400.2,527.6 1400.4,526.6 1400.6,525.5 1400.8,524.5 1400.9,523.4 1401.1,522.4 1401.3,521.3 1401.5,520.2 1401.6,519.2 1401.8,518.1 1401.9,517.0 1402.1,515.9 1402.2,514.9 1402.4,513.8 1402.5,512.7 1402.6,511.7 1402.8,510.6 1402.9,509.5 1403.0,508.5 1403.2,507.4 1403.3,506.4 1403.4,505.3 1403.5,504.3 1403.6,503.2 1403.7,502.2 1403.8,501.2 1404.0,500.2 1404.1,499.1 1404.2,498.1 1404.3,497.1 1404.4,496.1 1404.5,495.1 1404.6,494.2 1404.7,493.2 1404.8,492.2 1404.9,491.3 1405.0,490.4 1405.1,489.4 1405.2,488.5 1405.3,487.6 1405.4,486.7 1405.5,485.8 1405.6,484.9 1405.7,484.1 1405.8,483.2 1405.9,482.4 1406.0,481.6 1406.1,480.8 1406.2,480.0 1406.3,479.2 1406.4,478.4 1406.5,477.6 1406.6,476.9 1406.7,476.2 1406.9,475.5 1407.0,474.8 1407.1,474.1 1407.2,473.4 1407.3,472.8 1407.5,472.1 1407.6,471.5 1407.7,470.9 1407.8,470.3 1408.0,469.7 1408.1,469.2 1408.2,468.6 1408.4,468.1 1408.5,467.6 1408.6,467.1 1408.8,466.6 1408.9,466.1 1409.0,465.7 1409.2,465.2 1409.3,464.8 1409.5,464.4 1409.6,464.0 1409.8,463.7 1409.9,463.3 1410.0,463.0 1410.2,462.7 1410.3,462.4 1410.5,462.1 1410.6,461.8 1410.8,461.6 1410.9,461.3 1411.1,461.1 1411.2,460.9 1411.3,460.7 1411.5,460.5 1411.6,460.4 1411.8,460.2 1411.9,460.1 1412.0,460.0 1412.2,459.9 1412.3,459.8 1412.4,459.8 1412.6,459.7 1412.7,459.7 1412.8,459.7 1413.0,459.7 1413.1,459.7 1413.2,459.8 1413.3,459.8 1413.4,459.9 1413.5,459.9 1413.6,460.0 1413.7,460.2 1413.8,460.3 1413.9,460.4 1414.0,460.6 1414.1,460.7 1414.2,460.9" fill="none" stroke="#2a2a2a" stroke-width="1.0"/>
<polyline points="1414.2,460.9 1414.2,461.1 1414.3,461.3 1414.4,461.6 1414.4,461.8 1414.5,462.1 1414.5,462.3 1414.6,462.6 1414.6,462.9 1414.6,463.2 1414.6,463.6 1414.6,463.9 1414.7,464.3 1414.7,464.6 1414.6,465.0 1414.6,465.4 1414.6,465.8 1414.6,466.2 1414.5,466.7 1414.5,467.1 1414.4,467.6 1414.4,468.0 1414.3,468.5 1414.2,469.0 1414.1,469.5 1414.0,470.0 1413.9,470.6 1413.8,471.1 1413.6,471.7 1413.5,472.2 1413.3,472.8 1413.2,473.4 1413.0,474.0 1412.8,474.6 1412.6,475.2 1412.4,475.8 1412.2,476.5 1412.0,477.1 1411.8,477.8 1411.5,478.5 1411.3,479.1 1411.0,479.8 1410.7,480.5 1410.5,481.2 1410.2,482.0 1409.9,482.7 1409.5,483.4 1409.2,484.2 1408.9,484.9 1408.5,485.7 1408.2,486.4 1407.8,487.2 1407.4,488.0 1407.0,488.8 1406.7,489.6 1406.2,490.4 1405.8,491.2 1405.4,492.0 1405.0,492.8 1404.5,493.7 1404.1,494.5 1403.6,495.3 1403.2,496.2 1402.7,497.0 1402.2,497.9 1401.7,498.7 1401.2,499.6 1400.7,500.5 1400.2,501.3 1399.7,502.2 1399.2,503.1 1398.7,504.0 1398.1,504.9 1397.6,505.8 1397.1,506.7 1396.5,507.6 1396.0,508.5 1395.4,509.4 1394.9,510.3 1394.3,511.2 1393.8,512.1 1393.2,513.0 1392.6,513.9 1392.1,514.8 1391.5,515.7 1391.0,516.6 1390.4,517.5 1389.8,518.5 1389.3,519.4 1388.7,520.3 1388.2,521.2 1387.6,522.1 1387.1,523.0 1386.5,523.9 1386.0,524.8 1385.5,525.7 1384.9,526.6 1384.4,527.5 1383.9,528.4 1383.3,529.3 1382.8,530.2 1382.3,531.1 1381.8,531.9 1381.3,532.8 1380.8,533.7 1380.4,534.5 1379.9,535.4 1379.4,536.3 1379.0,537.1 1378.5,538.0 1378.1,538.8 1377.7,539.6 1377.3,540.5 1376.8,541.3 1376.5,542.1 1376.1,542.9 1375.7,543.7 1375.3,544.5 1375.0,545.3 1374.6,546.1 1374.3,546.8 1374.0,547.6 1373.7,548.4 1373.4,549.1 1373.1,549.9 1372.8,550.6 1372.5,551.3 1372.3,552.0 1372.0,552.7 1371.8,553.4 1371.6,554.1 1371.4,554.8 1371.2,555.4 1371.0,556.1 1370.9,556.7 1370.7,557.3 1370.6,557.9 1370.4,558.6 1370.3,559.1 1370.2,559.7 1370.1,560.3 1370.1,560.9 1370.0,561.4 1369.9,561.9 1369.9,562.5 1369.9,563.0 1369.9,563.5 1369.8,564.0 1369.9,564.4 1369.9,564.9 1369.9,565.3 1369.9,565.8 1370.0,566.2 1370.1,566.6 1370.1,567.0 1370.2,567.3 1370.3,567.7 1370.4,568.1 1370.5,568.4 1370.7,568.7 1370.8,569.0 1371.0,569.3 1371.1,569.6 1371.3,569.8 1371.5,570.1 1371.6,570.3 1371.8,570.5 1372.1,570.7 1372.3,570.9 1372.5,571.1 1372.7,571.2 1373.0,571.4 1373.2,571.5 1373.5,571.6 1373.7,571.7 1374.0,571.8 1374.3,571.8 1374.6,571.9 1374.9,571.9 1375.2,571.9 1375.5,571.9 1375.8,571.9 1376.1,571.8 1376.4,571.8 1376.7,571.7" fill="none" stroke="#2a2a2a" stroke-width="1.0" stroke-dasharray="5 2.4"/>
<polyline points="1342.6,558.9 1343.0,558.8 1343.3,558.7 1343.6,558.5 1344.0,558.4 1344.3,558.2 1344.7,558.0 1345.0,557.8 1345.4,557.6 1345.7,557.3 1346.1,557.1 1346.4,556.8 1346.8,556.5 1347.1,556.2 1347.5,555.9 1347.9,555.5 1348.2,555.2 1348.6,554.8 1348.9,554.4 1349.3,554.0 1349.6,553.5 1350.0,553.1 1350.4,552.6 1350.7,552.2 1351.1,551.7 1351.4,551.1 1351.8,550.6 1352.1,550.1 1352.5,549.5 1352.8,548.9 1353.1,548.3 1353.5,547.7 1353.8,547.1 1354.1,546.4 1354.5,545.8 1354.8,545.1 1355.1,544.4 1355.4,543.7 1355.8,543.0 1356.1,542.2 1356.4,541.5 1356.7,540.7 1357.0,540.0 1357.3,539.2 1357.6,538.4 1357.9,537.5 1358.1,536.7 1358.4,535.9 1358.7,535.0 1359.0,534.1 1359.2,533.3 1359.5,532.4 1359.7,531.5 1360.0,530.5 1360.2,529.6 1360.5,528.7 1360.7,527.7 1360.9,526.8 1361.2,525.8 1361.4,524.8 1361.6,523.9 1361.8,522.9 1362.0,521.9 1362.2,520.9 1362.4,519.8 1362.6,518.8 1362.8,517.8 1363.0,516.8 1363.1,515.7 1363.3,514.7 1363.5,513.6 1363.7,512.6 1363.8,511.5 1364.0,510.5 1364.1,509.4 1364.3,508.4 1364.5,507.3 1364.6,506.2 1364.7,505.2 1364.9,504.1 1365.0,503.0 1365.2,502.0 1365.3,500.9 1365.4,499.8 1365.6,498.8 1365.7,497.7 1365.8,496.7 1366.0,495.6 1366.1,494.6 1366.2,493.5 1366.3,492.5 1366.5,491.4 1366.6,490.4 1366.7,489.4 1366.8,488.3 1367.0,487.3 1367.1,486.3 1367.2,485.3 1367.3,484.3 1367.4,483.3 1367.6,482.4 1367.7,481.4 1367.8,480.4 1368.0,479.5 1368.1,478.5 1368.2,477.6 1368.3,476.7 1368.5,475.8 1368.6,474.9 1368.7,474.0 1368.9,473.1 1369.0,472.2 1369.2,471.4 1369.3,470.6 1369.5,469.7 1369.6,468.9 1369.7,468.1 1369.9,467.3 1370.1,466.5 1370.2,465.8 1370.4,465.0 1370.5,464.3 1370.7,463.6 1370.8,462.9 1371.0,462.2 1371.2,461.5 1371.3,460.8 1371.5,460.2 1371.7,459.5 1371.9,458.9 1372.0,458.3 1372.2,457.7 1372.4,457.2 1372.6,456.6 1372.8,456.1 1372.9,455.5 1373.1,455.0 1373.3,454.5 1373.5,454.0 1373.7,453.6 1373.9,453.1 1374.1,452.7 1374.2,452.3 1374.4,451.9 1374.6,451.5 1374.8,451.1 1375.0,450.8 1375.2,450.4 1375.4,450.1 1375.5,449.8 1375.7,449.5 1375.9,449.2 1376.1,449.0 1376.3,448.7 1376.5,448.5 1376.6,448.3 1376.8,448.1 1377.0,447.9 1377.2,447.8 1377.3,447.6 1377.5,447.5 1377.7,447.3 1377.8,447.2 1378.0,447.2 1378.1,447.1 1378.3,447.0 1378.4,447.0 1378.6,447.0 1378.7,446.9 1378.9,446.9 1379.0,447.0 1379.1,447.0 1379.2,447.0 1379.3,447.1 1379.5,447.2 1379.6,447.3 1379.7,447.4 1379.8,447.5 1379.8,447.6 1379.9,447.8 1380.0,447.9 1380.1,448.1" fill="none" stroke="#2a2a2a" stroke-width="1.0"/>
<polyline points="1380.1,448.1 1380.1,448.3 1380.2,448.5 1380.2,448.7 1380.3,449.0 1380.3,449.2 1380.3,449.5 1380.3,449.7 1380.4,450.0 1380.4,450.3 1380.4,450.6 1380.3,451.0 1380.3,451.3 1380.3,451.7 1380.2,452.0 1380.2,452.4 1380.1,452.8 1380.1,453.2 1380.0,453.6 1379.9,454.0 1379.8,454.5 1379.7,454.9 1379.6,455.4 1379.4,455.9 1379.3,456.4 1379.1,456.9 1379.0,457.4 1378.8,457.9 1378.6,458.4 1378.4,459.0 1378.2,459.5 1378.0,460.1 1377.8,460.7 1377.5,461.3 1377.3,461.9 1377.0,462.5 1376.8,463.1 1376.5,463.7 1376.2,464.4 1375.9,465.0 1375.6,465.7 1375.3,466.4 1374.9,467.0 1374.6,467.7 1374.2,468.4 1373.9,469.1 1373.5,469.9 1373.1,470.6 1372.7,471.3 1372.3,472.1 1371.9,472.8 1371.5,473.6 1371.1,474.3 1370.6,475.1 1370.2,475.9 1369.7,476.7 1369.2,477.5 1368.8,478.3 1368.3,479.1 1367.8,479.9 1367.3,480.7 1366.8,481.6 1366.3,482.4 1365.8,483.3 1365.2,484.1 1364.7,485.0 1364.2,485.8 1363.6,486.7 1363.1,487.6 1362.6,488.4 1362.0,489.3 1361.4,490.2 1360.9,491.1 1360.3,492.0 1359.8,492.9 1359.2,493.8 1358.6,494.7 1358.0,495.6 1357.5,496.5 1356.9,497.4 1356.3,498.3 1355.8,499.2 1355.2,500.1 1354.6,501.0 1354.1,502.0 1353.5,502.9 1352.9,503.8 1352.4,504.7 1351.8,505.6 1351.3,506.6 1350.7,507.5 1350.2,508.4 1349.6,509.3 1349.1,510.2 1348.6,511.2 1348.0,512.1 1347.5,513.0 1347.0,513.9 1346.5,514.8 1346.0,515.7 1345.5,516.6 1345.0,517.5 1344.6,518.4 1344.1,519.3 1343.6,520.2 1343.2,521.1 1342.8,521.9 1342.3,522.8 1341.9,523.7 1341.5,524.6 1341.1,525.4 1340.7,526.3 1340.4,527.1 1340.0,528.0 1339.6,528.8 1339.3,529.6 1339.0,530.4 1338.7,531.3 1338.4,532.1 1338.1,532.9 1337.8,533.7 1337.5,534.4 1337.2,535.2 1337.0,536.0 1336.8,536.7 1336.6,537.5 1336.3,538.2 1336.1,539.0 1336.0,539.7 1335.8,540.4 1335.6,541.1 1335.5,541.8 1335.4,542.4 1335.2,543.1 1335.1,543.8 1335.0,544.4 1334.9,545.0 1334.9,545.7 1334.8,546.3 1334.8,546.9 1334.7,547.5 1334.7,548.0 1334.7,548.6 1334.7,549.1 1334.7,549.7 1334.7,550.2 1334.8,550.7 1334.8,551.2 1334.9,551.7 1334.9,552.1 1335.0,552.6 1335.1,553.0 1335.2,553.5 1335.3,553.9 1335.4,554.3 1335.5,554.6 1335.7,555.0 1335.8,555.4 1336.0,555.7 1336.1,556.0 1336.3,556.3 1336.5,556.6 1336.7,556.9 1336.9,557.2 1337.1,557.4 1337.3,557.6 1337.5,557.8 1337.8,558.0 1338.0,558.2 1338.2,558.4 1338.5,558.5 1338.8,558.7 1339.0,558.8 1339.3,558.9 1339.6,559.0 1339.9,559.0 1340.1,559.1 1340.4,559.1 1340.7,559.1 1341.0,559.1 1341.4,559.1 1341.7,559.1 1342.0,559.0 1342.3,559.0 1342.6,558.9" fill="none" stroke="#2a2a2a" stroke-width="1.0" stroke-dasharray="5 2.4"/>
<polyline points="1307.6,547.2 1307.9,547.1 1308.2,546.9 1308.5,546.8 1308.8,546.6 1309.1,546.4 1309.4,546.2 1309.7,546.0 1310.1,545.7 1310.4,545.5 1310.7,545.2 1311.0,544.9 1311.3,544.6 1311.7,544.3 1312.0,543.9 1312.3,543.5 1312.6,543.2 1312.9,542.8 1313.2,542.3 1313.5,541.9 1313.9,541.4 1314.2,541.0 1314.5,540.5 1314.8,540.0 1315.1,539.5 1315.4,538.9 1315.7,538.4 1316.0,537.8 1316.3,537.2 1316.6,536.6 1316.8,536.0 1317.1,535.4 1317.4,534.7 1317.7,534.0 1318.0,533.4 1318.2,532.7 1318.5,531.9 1318.8,531.2 1319.0,530.5 1319.3,529.7 1319.6,529.0 1319.8,528.2 1320.0,527.4 1320.3,526.6 1320.5,525.7 1320.8,524.9 1321.0,524.1 1321.2,523.2 1321.4,522.3 1321.7,521.4 1321.9,520.5 1322.1,519.6 1322.3,518.7 1322.5,517.8 1322.7,516.9 1322.9,515.9 1323.1,515.0 1323.3,514.0 1323.5,513.0 1323.7,512.0 1323.8,511.0 1324.0,510.0 1324.2,509.0 1324.4,508.0 1324.5,507.0 1324.7,506.0 1324.8,505.0 1325.0,503.9 1325.2,502.9 1325.3,501.8 1325.5,500.8 1325.6,499.8 1325.8,498.7 1325.9,497.6 1326.1,496.6 1326.2,495.5 1326.4,494.5 1326.5,493.4 1326.6,492.4 1326.8,491.3 1326.9,490.2 1327.1,489.2 1327.2,488.1 1327.3,487.1 1327.5,486.0 1327.6,485.0 1327.8,483.9 1327.9,482.9 1328.0,481.9 1328.2,480.8 1328.3,479.8 1328.5,478.8 1328.6,477.8 1328.8,476.7 1328.9,475.7 1329.1,474.7 1329.2,473.7 1329.4,472.8 1329.5,471.8 1329.7,470.8 1329.8,469.9 1330.0,468.9 1330.2,468.0 1330.3,467.0 1330.5,466.1 1330.7,465.2 1330.9,464.3 1331.0,463.4 1331.2,462.5 1331.4,461.7 1331.6,460.8 1331.8,460.0 1332.0,459.2 1332.2,458.3 1332.3,457.5 1332.5,456.7 1332.7,456.0 1333.0,455.2 1333.2,454.4 1333.4,453.7 1333.6,453.0 1333.8,452.2 1334.0,451.5 1334.2,450.9 1334.4,450.2 1334.7,449.5 1334.9,448.9 1335.1,448.3 1335.3,447.6 1335.6,447.0 1335.8,446.5 1336.0,445.9 1336.3,445.3 1336.5,444.8 1336.7,444.3 1337.0,443.7 1337.2,443.3 1337.4,442.8 1337.7,442.3 1337.9,441.9 1338.1,441.4 1338.4,441.0 1338.6,440.6 1338.8,440.2 1339.1,439.8 1339.3,439.5 1339.5,439.1 1339.7,438.8 1340.0,438.5 1340.2,438.2 1340.4,437.9 1340.6,437.6 1340.8,437.4 1341.1,437.2 1341.3,436.9 1341.5,436.7 1341.7,436.5 1341.9,436.4 1342.1,436.2 1342.3,436.0 1342.4,435.9 1342.6,435.8 1342.8,435.7 1343.0,435.6 1343.1,435.5 1343.3,435.5 1343.5,435.4 1343.6,435.4 1343.8,435.4 1343.9,435.4 1344.0,435.4 1344.2,435.4 1344.3,435.5 1344.4,435.5 1344.5,435.6 1344.6,435.7 1344.7,435.8 1344.8,435.9 1344.8,436.0 1344.9,436.1 1345.0,436.3 1345.0,436.5" fill="none" stroke="#2a2a2a" stroke-width="1.0"/>
<polyline points="1345.0,436.5 1345.1,436.6 1345.1,436.8 1345.1,437.0 1345.1,437.3 1345.1,437.5 1345.1,437.7 1345.1,438.0 1345.1,438.3 1345.1,438.6 1345.0,438.8 1345.0,439.2 1344.9,439.5 1344.9,439.8 1344.8,440.2 1344.7,440.5 1344.6,440.9 1344.5,441.3 1344.3,441.7 1344.2,442.1 1344.1,442.5 1343.9,443.0 1343.7,443.4 1343.6,443.9 1343.4,444.3 1343.2,444.8 1343.0,445.3 1342.7,445.8 1342.5,446.3 1342.3,446.9 1342.0,447.4 1341.7,448.0 1341.5,448.5 1341.2,449.1 1340.9,449.7 1340.6,450.3 1340.2,450.9 1339.9,451.5 1339.6,452.1 1339.2,452.8 1338.8,453.4 1338.5,454.1 1338.1,454.7 1337.7,455.4 1337.3,456.1 1336.9,456.8 1336.4,457.5 1336.0,458.2 1335.6,459.0 1335.1,459.7 1334.7,460.4 1334.2,461.2 1333.7,461.9 1333.2,462.7 1332.7,463.5 1332.2,464.3 1331.7,465.1 1331.2,465.9 1330.7,466.7 1330.2,467.5 1329.6,468.3 1329.1,469.1 1328.6,470.0 1328.0,470.8 1327.5,471.7 1326.9,472.5 1326.3,473.4 1325.8,474.2 1325.2,475.1 1324.6,476.0 1324.1,476.9 1323.5,477.8 1322.9,478.7 1322.3,479.6 1321.8,480.5 1321.2,481.4 1320.6,482.3 1320.0,483.2 1319.5,484.1 1318.9,485.0 1318.3,485.9 1317.7,486.9 1317.2,487.8 1316.6,488.7 1316.1,489.6 1315.5,490.6 1315.0,491.5 1314.4,492.4 1313.9,493.4 1313.3,494.3 1312.8,495.3 1312.3,496.2 1311.8,497.1 1311.2,498.1 1310.7,499.0 1310.3,499.9 1309.8,500.9 1309.3,501.8 1308.8,502.7 1308.4,503.6 1307.9,504.6 1307.5,505.5 1307.0,506.4 1306.6,507.3 1306.2,508.2 1305.8,509.1 1305.4,510.0 1305.0,510.9 1304.6,511.8 1304.3,512.7 1303.9,513.6 1303.6,514.4 1303.3,515.3 1303.0,516.2 1302.7,517.0 1302.4,517.9 1302.1,518.7 1301.8,519.5 1301.6,520.4 1301.3,521.2 1301.1,522.0 1300.9,522.8 1300.7,523.6 1300.5,524.4 1300.3,525.1 1300.1,525.9 1300.0,526.6 1299.8,527.4 1299.7,528.1 1299.6,528.8 1299.5,529.6 1299.4,530.3 1299.3,530.9 1299.2,531.6 1299.2,532.3 1299.1,532.9 1299.1,533.6 1299.1,534.2 1299.0,534.8 1299.0,535.4 1299.1,536.0 1299.1,536.6 1299.1,537.2 1299.1,537.7 1299.2,538.3 1299.3,538.8 1299.3,539.3 1299.4,539.8 1299.5,540.3 1299.6,540.8 1299.7,541.2 1299.8,541.7 1300.0,542.1 1300.1,542.5 1300.2,542.9 1300.4,543.3 1300.6,543.6 1300.7,544.0 1300.9,544.3 1301.1,544.6 1301.3,544.9 1301.5,545.2 1301.7,545.5 1301.9,545.8 1302.1,546.0 1302.3,546.2 1302.6,546.4 1302.8,546.6 1303.1,546.8 1303.3,546.9 1303.6,547.1 1303.8,547.2 1304.1,547.3 1304.4,547.4 1304.6,547.5 1304.9,547.5 1305.2,547.5 1305.5,547.6 1305.8,547.6 1306.1,547.5 1306.4,547.5 1306.7,547.5 1307.0,547.4 1307.3,547.3 1307.6,547.2" fill="none" stroke="#2a2a2a" stroke-width="1.0" stroke-dasharray="5 2.4"/>
<polyline points="1273.9,537.5 1274.2,537.3 1274.4,537.2 1274.7,537.0 1275.0,536.8 1275.3,536.6 1275.5,536.3 1275.8,536.1 1276.1,535.8 1276.3,535.5 1276.6,535.2 1276.9,534.9 1277.1,534.6 1277.4,534.2 1277.7,533.8 1277.9,533.5 1278.2,533.0 1278.4,532.6 1278.7,532.2 1279.0,531.7 1279.2,531.2 1279.5,530.7 1279.7,530.2 1280.0,529.7 1280.2,529.2 1280.4,528.6 1280.7,528.0 1280.9,527.4 1281.2,526.8 1281.4,526.2 1281.6,525.5 1281.9,524.9 1282.1,524.2 1282.3,523.5 1282.5,522.8 1282.7,522.1 1282.9,521.4 1283.2,520.6 1283.4,519.9 1283.6,519.1 1283.8,518.3 1284.0,517.5 1284.2,516.7 1284.3,515.9 1284.5,515.0 1284.7,514.2 1284.9,513.3 1285.1,512.5 1285.3,511.6 1285.4,510.7 1285.6,509.8 1285.8,508.9 1286.0,507.9 1286.1,507.0 1286.3,506.1 1286.4,505.1 1286.6,504.1 1286.8,503.2 1286.9,502.2 1287.1,501.2 1287.2,500.2 1287.4,499.2 1287.5,498.2 1287.7,497.2 1287.8,496.2 1288.0,495.2 1288.1,494.1 1288.3,493.1 1288.4,492.1 1288.6,491.0 1288.7,490.0 1288.8,488.9 1289.0,487.9 1289.1,486.9 1289.3,485.8 1289.4,484.8 1289.6,483.7 1289.7,482.7 1289.9,481.6 1290.0,480.6 1290.2,479.5 1290.3,478.5 1290.5,477.4 1290.6,476.4 1290.8,475.4 1291.0,474.3 1291.1,473.3 1291.3,472.3 1291.5,471.3 1291.6,470.2 1291.8,469.2 1292.0,468.2 1292.2,467.2 1292.4,466.2 1292.5,465.3 1292.7,464.3 1292.9,463.3 1293.1,462.3 1293.3,461.4 1293.5,460.4 1293.7,459.5 1293.9,458.6 1294.2,457.7 1294.4,456.8 1294.6,455.9 1294.8,455.0 1295.1,454.1 1295.3,453.2 1295.5,452.4 1295.8,451.5 1296.0,450.7 1296.2,449.9 1296.5,449.1 1296.7,448.3 1297.0,447.5 1297.2,446.7 1297.5,445.9 1297.8,445.2 1298.0,444.5 1298.3,443.7 1298.6,443.0 1298.8,442.3 1299.1,441.6 1299.4,441.0 1299.7,440.3 1299.9,439.7 1300.2,439.1 1300.5,438.4 1300.8,437.8 1301.1,437.3 1301.3,436.7 1301.6,436.1 1301.9,435.6 1302.2,435.1 1302.5,434.6 1302.7,434.1 1303.0,433.6 1303.3,433.1 1303.6,432.7 1303.9,432.2 1304.1,431.8 1304.4,431.4 1304.7,431.0 1305.0,430.6 1305.2,430.2 1305.5,429.9 1305.8,429.6 1306.0,429.2 1306.3,428.9 1306.5,428.6 1306.8,428.4 1307.0,428.1 1307.3,427.8 1307.5,427.6 1307.7,427.4 1307.9,427.2 1308.2,427.0 1308.4,426.8 1308.6,426.7 1308.8,426.5 1309.0,426.4 1309.2,426.2 1309.4,426.1 1309.5,426.1 1309.7,426.0 1309.9,425.9 1310.0,425.9 1310.2,425.8 1310.3,425.8 1310.5,425.8 1310.6,425.8 1310.7,425.8 1310.8,425.9 1310.9,425.9 1311.0,426.0 1311.1,426.0 1311.2,426.1 1311.2,426.2 1311.3,426.3 1311.3,426.5 1311.4,426.6 1311.4,426.8" fill="none" stroke="#2a2a2a" stroke-width="1.0"/>
<polyline points="1311.4,426.8 1311.4,426.9 1311.4,427.1 1311.4,427.3 1311.4,427.5 1311.4,427.7 1311.4,428.0 1311.3,428.2 1311.2,428.5 1311.2,428.7 1311.1,429.0 1311.0,429.3 1310.9,429.6 1310.8,429.9 1310.7,430.3 1310.5,430.6 1310.4,431.0 1310.2,431.4 1310.1,431.7 1309.9,432.1 1309.7,432.5 1309.5,433.0 1309.3,433.4 1309.1,433.8 1308.8,434.3 1308.6,434.8 1308.3,435.2 1308.0,435.7 1307.8,436.2 1307.5,436.8 1307.2,437.3 1306.8,437.8 1306.5,438.4 1306.2,438.9 1305.8,439.5 1305.5,440.1 1305.1,440.7 1304.7,441.3 1304.3,441.9 1303.9,442.5 1303.5,443.2 1303.1,443.8 1302.7,444.5 1302.2,445.2 1301.8,445.8 1301.3,446.5 1300.9,447.2 1300.4,447.9 1299.9,448.7 1299.4,449.4 1298.9,450.1 1298.4,450.9 1297.9,451.6 1297.4,452.4 1296.9,453.2 1296.4,454.0 1295.8,454.8 1295.3,455.6 1294.7,456.4 1294.2,457.2 1293.6,458.0 1293.1,458.8 1292.5,459.7 1292.0,460.5 1291.4,461.4 1290.8,462.2 1290.3,463.1 1289.7,464.0 1289.1,464.9 1288.5,465.8 1288.0,466.6 1287.4,467.5 1286.8,468.4 1286.2,469.4 1285.7,470.3 1285.1,471.2 1284.5,472.1 1284.0,473.0 1283.4,474.0 1282.9,474.9 1282.3,475.8 1281.7,476.8 1281.2,477.7 1280.7,478.7 1280.1,479.6 1279.6,480.6 1279.1,481.5 1278.6,482.5 1278.0,483.4 1277.5,484.4 1277.0,485.3 1276.6,486.3 1276.1,487.2 1275.6,488.2 1275.1,489.1 1274.7,490.1 1274.2,491.0 1273.8,492.0 1273.4,492.9 1273.0,493.9 1272.5,494.8 1272.1,495.8 1271.8,496.7 1271.4,497.6 1271.0,498.5 1270.7,499.5 1270.3,500.4 1270.0,501.3 1269.7,502.2 1269.4,503.1 1269.1,504.0 1268.8,504.9 1268.5,505.8 1268.2,506.7 1268.0,507.5 1267.8,508.4 1267.5,509.3 1267.3,510.1 1267.1,510.9 1266.9,511.8 1266.7,512.6 1266.6,513.4 1266.4,514.2 1266.3,515.0 1266.1,515.8 1266.0,516.6 1265.9,517.3 1265.8,518.1 1265.7,518.8 1265.7,519.6 1265.6,520.3 1265.5,521.0 1265.5,521.7 1265.5,522.4 1265.5,523.1 1265.4,523.7 1265.4,524.4 1265.5,525.0 1265.5,525.6 1265.5,526.2 1265.6,526.8 1265.6,527.4 1265.7,528.0 1265.7,528.5 1265.8,529.1 1265.9,529.6 1266.0,530.1 1266.1,530.6 1266.2,531.1 1266.3,531.6 1266.5,532.0 1266.6,532.4 1266.7,532.9 1266.9,533.3 1267.0,533.7 1267.2,534.0 1267.4,534.4 1267.6,534.7 1267.7,535.0 1267.9,535.4 1268.1,535.6 1268.3,535.9 1268.5,536.2 1268.7,536.4 1268.9,536.6 1269.2,536.9 1269.4,537.0 1269.6,537.2 1269.8,537.4 1270.1,537.5 1270.3,537.6 1270.6,537.7 1270.8,537.8 1271.0,537.9 1271.3,537.9 1271.5,538.0 1271.8,538.0 1272.1,538.0 1272.3,538.0 1272.6,537.9 1272.8,537.9 1273.1,537.8 1273.4,537.7 1273.6,537.6 1273.9,537.5" fill="none" stroke="#2a2a2a" stroke-width="1.0" stroke-dasharray="5 2.4"/>
<polyline points="1244.0,530.4 1244.2,530.2 1244.4,530.0 1244.6,529.8 1244.8,529.6 1245.0,529.3 1245.3,529.1 1245.5,528.8 1245.7,528.5 1245.9,528.2 1246.1,527.9 1246.3,527.5 1246.5,527.2 1246.7,526.8 1246.9,526.4 1247.1,526.0 1247.3,525.5 1247.5,525.1 1247.7,524.6 1247.9,524.1 1248.1,523.6 1248.3,523.1 1248.5,522.6 1248.6,522.0 1248.8,521.4 1249.0,520.9 1249.2,520.3 1249.4,519.7 1249.5,519.0 1249.7,518.4 1249.9,517.7 1250.0,517.0 1250.2,516.3 1250.4,515.6 1250.5,514.9 1250.7,514.2 1250.8,513.4 1251.0,512.7 1251.2,511.9 1251.3,511.1 1251.5,510.3 1251.6,509.5 1251.8,508.7 1251.9,507.8 1252.0,507.0 1252.2,506.1 1252.3,505.3 1252.5,504.4 1252.6,503.5 1252.8,502.6 1252.9,501.7 1253.0,500.8 1253.2,499.8 1253.3,498.9 1253.4,497.9 1253.6,497.0 1253.7,496.0 1253.8,495.0 1254.0,494.1 1254.1,493.1 1254.3,492.1 1254.4,491.1 1254.5,490.1 1254.7,489.1 1254.8,488.1 1254.9,487.1 1255.1,486.0 1255.2,485.0 1255.4,484.0 1255.5,483.0 1255.7,481.9 1255.8,480.9 1256.0,479.9 1256.1,478.8 1256.3,477.8 1256.5,476.8 1256.6,475.7 1256.8,474.7 1257.0,473.7 1257.1,472.6 1257.3,471.6 1257.5,470.6 1257.7,469.6 1257.9,468.5 1258.1,467.5 1258.3,466.5 1258.5,465.5 1258.7,464.5 1258.9,463.5 1259.1,462.5 1259.3,461.5 1259.5,460.5 1259.8,459.5 1260.0,458.6 1260.2,457.6 1260.5,456.6 1260.7,455.7 1261.0,454.8 1261.2,453.8 1261.5,452.9 1261.7,452.0 1262.0,451.1 1262.3,450.2 1262.5,449.3 1262.8,448.4 1263.1,447.5 1263.4,446.7 1263.7,445.8 1264.0,445.0 1264.3,444.2 1264.6,443.4 1264.9,442.6 1265.2,441.8 1265.5,441.0 1265.8,440.2 1266.1,439.5 1266.4,438.7 1266.7,438.0 1267.1,437.3 1267.4,436.6 1267.7,435.9 1268.0,435.2 1268.4,434.6 1268.7,433.9 1269.0,433.3 1269.3,432.6 1269.7,432.0 1270.0,431.4 1270.3,430.8 1270.7,430.3 1271.0,429.7 1271.3,429.2 1271.7,428.6 1272.0,428.1 1272.3,427.6 1272.6,427.1 1272.9,426.7 1273.3,426.2 1273.6,425.8 1273.9,425.3 1274.2,424.9 1274.5,424.5 1274.8,424.1 1275.1,423.7 1275.4,423.4 1275.7,423.0 1276.0,422.7 1276.3,422.4 1276.6,422.1 1276.8,421.8 1277.1,421.5 1277.4,421.2 1277.6,421.0 1277.9,420.7 1278.1,420.5 1278.3,420.3 1278.6,420.1 1278.8,419.9 1279.0,419.8 1279.2,419.6 1279.4,419.5 1279.6,419.4 1279.8,419.2 1280.0,419.1 1280.1,419.1 1280.3,419.0 1280.4,418.9 1280.6,418.9 1280.7,418.9 1280.8,418.8 1281.0,418.8 1281.1,418.8 1281.1,418.9 1281.2,418.9 1281.3,418.9 1281.4,419.0 1281.4,419.1 1281.5,419.2 1281.5,419.3 1281.5,419.4 1281.5,419.5 1281.5,419.7" fill="none" stroke="#2a2a2a" stroke-width="1.0"/>
<polyline points="1281.5,419.7 1281.5,419.8 1281.5,420.0 1281.4,420.2 1281.4,420.4 1281.3,420.6 1281.3,420.8 1281.2,421.0 1281.1,421.3 1281.0,421.5 1280.9,421.8 1280.7,422.1 1280.6,422.4 1280.4,422.7 1280.3,423.0 1280.1,423.3 1279.9,423.7 1279.7,424.0 1279.5,424.4 1279.3,424.8 1279.0,425.2 1278.8,425.6 1278.5,426.0 1278.3,426.5 1278.0,426.9 1277.7,427.4 1277.4,427.8 1277.1,428.3 1276.8,428.8 1276.4,429.3 1276.1,429.8 1275.7,430.4 1275.3,430.9 1275.0,431.5 1274.6,432.0 1274.2,432.6 1273.8,433.2 1273.4,433.8 1272.9,434.4 1272.5,435.0 1272.1,435.7 1271.6,436.3 1271.1,437.0 1270.7,437.6 1270.2,438.3 1269.7,439.0 1269.2,439.7 1268.7,440.4 1268.2,441.1 1267.7,441.9 1267.2,442.6 1266.7,443.4 1266.1,444.1 1265.6,444.9 1265.1,445.7 1264.5,446.5 1264.0,447.3 1263.4,448.1 1262.9,448.9 1262.3,449.7 1261.8,450.6 1261.2,451.4 1260.7,452.2 1260.1,453.1 1259.5,454.0 1259.0,454.8 1258.4,455.7 1257.8,456.6 1257.3,457.5 1256.7,458.4 1256.2,459.3 1255.6,460.2 1255.1,461.2 1254.5,462.1 1254.0,463.0 1253.4,463.9 1252.9,464.9 1252.3,465.8 1251.8,466.8 1251.3,467.7 1250.7,468.7 1250.2,469.6 1249.7,470.6 1249.2,471.6 1248.7,472.5 1248.2,473.5 1247.7,474.5 1247.3,475.4 1246.8,476.4 1246.3,477.4 1245.9,478.4 1245.4,479.3 1245.0,480.3 1244.6,481.3 1244.1,482.3 1243.7,483.2 1243.3,484.2 1243.0,485.2 1242.6,486.1 1242.2,487.1 1241.9,488.1 1241.5,489.0 1241.2,490.0 1240.9,490.9 1240.5,491.9 1240.2,492.8 1239.9,493.8 1239.7,494.7 1239.4,495.6 1239.1,496.5 1238.9,497.5 1238.7,498.4 1238.4,499.3 1238.2,500.2 1238.0,501.0 1237.8,501.9 1237.7,502.8 1237.5,503.6 1237.3,504.5 1237.2,505.3 1237.1,506.2 1236.9,507.0 1236.8,507.8 1236.7,508.6 1236.6,509.4 1236.5,510.2 1236.5,511.0 1236.4,511.7 1236.4,512.5 1236.3,513.2 1236.3,513.9 1236.3,514.6 1236.3,515.3 1236.3,516.0 1236.3,516.7 1236.3,517.4 1236.3,518.0 1236.4,518.7 1236.4,519.3 1236.5,519.9 1236.5,520.5 1236.6,521.1 1236.7,521.6 1236.7,522.2 1236.8,522.7 1236.9,523.2 1237.0,523.7 1237.1,524.2 1237.3,524.7 1237.4,525.1 1237.5,525.6 1237.6,526.0 1237.8,526.4 1237.9,526.8 1238.1,527.2 1238.2,527.5 1238.4,527.9 1238.5,528.2 1238.7,528.5 1238.9,528.8 1239.1,529.1 1239.2,529.3 1239.4,529.6 1239.6,529.8 1239.8,530.0 1240.0,530.2 1240.2,530.4 1240.4,530.5 1240.6,530.6 1240.8,530.8 1241.0,530.9 1241.2,530.9 1241.4,531.0 1241.6,531.1 1241.8,531.1 1242.0,531.1 1242.3,531.1 1242.5,531.1 1242.7,531.0 1242.9,531.0 1243.1,530.9 1243.3,530.8 1243.5,530.7 1243.8,530.5 1244.0,530.4" fill="none" stroke="#2a2a2a" stroke-width="1.0" stroke-dasharray="5 2.4"/>
<polyline points="1219.8,526.4 1219.9,526.2 1220.1,526.0 1220.2,525.7 1220.4,525.5 1220.5,525.2 1220.7,524.9 1220.8,524.6 1221.0,524.3 1221.1,524.0 1221.2,523.6 1221.4,523.2 1221.5,522.8 1221.7,522.4 1221.8,522.0 1221.9,521.6 1222.1,521.1 1222.2,520.6 1222.3,520.1 1222.4,519.6 1222.6,519.1 1222.7,518.6 1222.8,518.0 1222.9,517.4 1223.1,516.9 1223.2,516.3 1223.3,515.6 1223.4,515.0 1223.5,514.4 1223.6,513.7 1223.8,513.0 1223.9,512.3 1224.0,511.6 1224.1,510.9 1224.2,510.2 1224.3,509.4 1224.4,508.7 1224.5,507.9 1224.6,507.1 1224.7,506.3 1224.8,505.5 1224.9,504.7 1225.1,503.8 1225.2,503.0 1225.3,502.1 1225.4,501.3 1225.5,500.4 1225.6,499.5 1225.7,498.6 1225.8,497.7 1225.9,496.8 1226.0,495.9 1226.2,495.0 1226.3,494.0 1226.4,493.1 1226.5,492.1 1226.6,491.2 1226.8,490.2 1226.9,489.2 1227.0,488.2 1227.2,487.2 1227.3,486.3 1227.4,485.3 1227.6,484.3 1227.7,483.3 1227.9,482.3 1228.0,481.3 1228.2,480.2 1228.3,479.2 1228.5,478.2 1228.7,477.2 1228.8,476.2 1229.0,475.2 1229.2,474.1 1229.4,473.1 1229.6,472.1 1229.8,471.1 1230.0,470.1 1230.2,469.0 1230.4,468.0 1230.6,467.0 1230.8,466.0 1231.0,465.0 1231.3,464.0 1231.5,463.0 1231.8,462.0 1232.0,461.0 1232.3,460.0 1232.5,459.1 1232.8,458.1 1233.0,457.1 1233.3,456.1 1233.6,455.2 1233.9,454.2 1234.2,453.3 1234.5,452.4 1234.8,451.4 1235.1,450.5 1235.4,449.6 1235.7,448.7 1236.0,447.8 1236.3,446.9 1236.7,446.0 1237.0,445.2 1237.3,444.3 1237.7,443.5 1238.0,442.6 1238.3,441.8 1238.7,441.0 1239.1,440.2 1239.4,439.4 1239.8,438.6 1240.1,437.8 1240.5,437.1 1240.9,436.3 1241.2,435.6 1241.6,434.9 1242.0,434.1 1242.3,433.4 1242.7,432.7 1243.1,432.1 1243.5,431.4 1243.9,430.8 1244.2,430.1 1244.6,429.5 1245.0,428.9 1245.4,428.3 1245.7,427.7 1246.1,427.1 1246.5,426.5 1246.8,426.0 1247.2,425.5 1247.6,424.9 1247.9,424.4 1248.3,423.9 1248.7,423.4 1249.0,423.0 1249.4,422.5 1249.7,422.1 1250.0,421.6 1250.4,421.2 1250.7,420.8 1251.0,420.4 1251.4,420.1 1251.7,419.7 1252.0,419.3 1252.3,419.0 1252.6,418.7 1252.9,418.4 1253.2,418.1 1253.4,417.8 1253.7,417.5 1254.0,417.3 1254.2,417.0 1254.5,416.8 1254.7,416.6 1254.9,416.4 1255.1,416.2 1255.4,416.0 1255.6,415.9 1255.7,415.7 1255.9,415.6 1256.1,415.5 1256.3,415.4 1256.4,415.3 1256.6,415.2 1256.7,415.1 1256.8,415.1 1256.9,415.0 1257.0,415.0 1257.1,415.0 1257.2,415.0 1257.3,415.0 1257.3,415.0 1257.4,415.0 1257.4,415.1 1257.4,415.2 1257.4,415.2 1257.4,415.3 1257.4,415.4 1257.4,415.5 1257.4,415.7" fill="none" stroke="#2a2a2a" stroke-width="1.0"/>
<polyline points="1257.4,415.7 1257.3,415.8 1257.3,416.0 1257.2,416.1 1257.1,416.3 1257.0,416.5 1256.9,416.7 1256.8,416.9 1256.7,417.2 1256.5,417.4 1256.4,417.7 1256.2,417.9 1256.0,418.2 1255.8,418.5 1255.6,418.8 1255.4,419.2 1255.2,419.5 1254.9,419.9 1254.7,420.2 1254.4,420.6 1254.2,421.0 1253.9,421.4 1253.6,421.8 1253.3,422.2 1253.0,422.7 1252.6,423.1 1252.3,423.6 1251.9,424.1 1251.6,424.5 1251.2,425.0 1250.8,425.6 1250.5,426.1 1250.1,426.6 1249.6,427.2 1249.2,427.7 1248.8,428.3 1248.4,428.9 1247.9,429.5 1247.5,430.1 1247.0,430.8 1246.6,431.4 1246.1,432.0 1245.6,432.7 1245.1,433.4 1244.6,434.1 1244.1,434.8 1243.6,435.5 1243.1,436.2 1242.6,436.9 1242.1,437.6 1241.6,438.4 1241.1,439.2 1240.5,439.9 1240.0,440.7 1239.5,441.5 1238.9,442.3 1238.4,443.1 1237.9,443.9 1237.3,444.8 1236.8,445.6 1236.2,446.5 1235.7,447.3 1235.1,448.2 1234.6,449.1 1234.0,449.9 1233.5,450.8 1233.0,451.7 1232.4,452.6 1231.9,453.5 1231.4,454.5 1230.8,455.4 1230.3,456.3 1229.8,457.3 1229.3,458.2 1228.8,459.2 1228.2,460.1 1227.7,461.1 1227.2,462.0 1226.8,463.0 1226.3,464.0 1225.8,465.0 1225.3,465.9 1224.9,466.9 1224.4,467.9 1223.9,468.9 1223.5,469.9 1223.1,470.9 1222.6,471.9 1222.2,472.9 1221.8,473.9 1221.4,474.9 1221.0,475.9 1220.6,476.9 1220.3,477.9 1219.9,478.9 1219.5,479.8 1219.2,480.8 1218.9,481.8 1218.5,482.8 1218.2,483.8 1217.9,484.8 1217.6,485.8 1217.4,486.7 1217.1,487.7 1216.8,488.7 1216.6,489.6 1216.3,490.6 1216.1,491.5 1215.9,492.4 1215.7,493.4 1215.5,494.3 1215.3,495.2 1215.1,496.1 1214.9,497.0 1214.8,497.9 1214.6,498.8 1214.5,499.7 1214.4,500.6 1214.3,501.4 1214.2,502.3 1214.1,503.1 1214.0,504.0 1213.9,504.8 1213.8,505.6 1213.8,506.4 1213.7,507.2 1213.7,507.9 1213.6,508.7 1213.6,509.4 1213.6,510.2 1213.6,510.9 1213.6,511.6 1213.6,512.3 1213.6,513.0 1213.6,513.7 1213.7,514.3 1213.7,515.0 1213.7,515.6 1213.8,516.2 1213.8,516.8 1213.9,517.4 1214.0,518.0 1214.0,518.5 1214.1,519.0 1214.2,519.6 1214.3,520.1 1214.4,520.6 1214.5,521.0 1214.6,521.5 1214.7,521.9 1214.8,522.4 1214.9,522.8 1215.0,523.2 1215.2,523.5 1215.3,523.9 1215.4,524.2 1215.6,524.5 1215.7,524.9 1215.8,525.1 1216.0,525.4 1216.1,525.7 1216.3,525.9 1216.4,526.1 1216.5,526.3 1216.7,526.5 1216.8,526.7 1217.0,526.8 1217.2,526.9 1217.3,527.0 1217.5,527.1 1217.6,527.2 1217.8,527.3 1217.9,527.3 1218.1,527.3 1218.2,527.3 1218.4,527.3 1218.6,527.3 1218.7,527.2 1218.9,527.2 1219.0,527.1 1219.2,527.0 1219.3,526.8 1219.5,526.7 1219.6,526.5 1219.8,526.4" fill="none" stroke="#2a2a2a" stroke-width="1.0" stroke-dasharray="5 2.4"/>
<polyline points="1203.0,525.7 1203.1,525.5 1203.2,525.3 1203.3,525.0 1203.3,524.7 1203.4,524.4 1203.5,524.1 1203.6,523.8 1203.6,523.5 1203.7,523.1 1203.8,522.7 1203.8,522.3 1203.9,521.9 1204.0,521.5 1204.0,521.0 1204.1,520.6 1204.2,520.1 1204.2,519.6 1204.3,519.1 1204.4,518.6 1204.4,518.0 1204.5,517.5 1204.6,516.9 1204.6,516.3 1204.7,515.7 1204.7,515.1 1204.8,514.4 1204.9,513.8 1204.9,513.1 1205.0,512.5 1205.0,511.8 1205.1,511.1 1205.2,510.4 1205.2,509.6 1205.3,508.9 1205.4,508.1 1205.4,507.4 1205.5,506.6 1205.6,505.8 1205.6,505.0 1205.7,504.2 1205.8,503.4 1205.9,502.5 1206.0,501.7 1206.0,500.8 1206.1,499.9 1206.2,499.1 1206.3,498.2 1206.4,497.3 1206.5,496.4 1206.6,495.5 1206.7,494.6 1206.8,493.6 1206.9,492.7 1207.0,491.8 1207.1,490.8 1207.3,489.9 1207.4,488.9 1207.5,487.9 1207.7,487.0 1207.8,486.0 1208.0,485.0 1208.1,484.0 1208.3,483.1 1208.4,482.1 1208.6,481.1 1208.8,480.1 1208.9,479.1 1209.1,478.1 1209.3,477.1 1209.5,476.1 1209.7,475.1 1209.9,474.1 1210.1,473.1 1210.4,472.1 1210.6,471.1 1210.8,470.1 1211.1,469.1 1211.3,468.1 1211.6,467.1 1211.8,466.1 1212.1,465.1 1212.4,464.1 1212.6,463.1 1212.9,462.2 1213.2,461.2 1213.5,460.2 1213.8,459.2 1214.1,458.3 1214.4,457.3 1214.8,456.4 1215.1,455.4 1215.4,454.5 1215.8,453.6 1216.1,452.6 1216.5,451.7 1216.8,450.8 1217.2,449.9 1217.6,449.0 1217.9,448.1 1218.3,447.3 1218.7,446.4 1219.1,445.5 1219.4,444.7 1219.8,443.9 1220.2,443.0 1220.6,442.2 1221.0,441.4 1221.4,440.6 1221.8,439.8 1222.3,439.0 1222.7,438.2 1223.1,437.5 1223.5,436.7 1223.9,436.0 1224.3,435.3 1224.8,434.5 1225.2,433.8 1225.6,433.2 1226.0,432.5 1226.4,431.8 1226.8,431.1 1227.3,430.5 1227.7,429.9 1228.1,429.2 1228.5,428.6 1228.9,428.0 1229.3,427.4 1229.7,426.9 1230.1,426.3 1230.5,425.8 1230.9,425.2 1231.3,424.7 1231.7,424.2 1232.1,423.7 1232.5,423.2 1232.8,422.8 1233.2,422.3 1233.6,421.8 1233.9,421.4 1234.3,421.0 1234.6,420.6 1234.9,420.2 1235.3,419.8 1235.6,419.4 1235.9,419.1 1236.2,418.8 1236.5,418.4 1236.8,418.1 1237.1,417.8 1237.4,417.5 1237.6,417.2 1237.9,417.0 1238.1,416.7 1238.4,416.5 1238.6,416.3 1238.8,416.1 1239.0,415.9 1239.2,415.7 1239.4,415.5 1239.6,415.3 1239.8,415.2 1239.9,415.1 1240.0,414.9 1240.2,414.8 1240.3,414.7 1240.4,414.7 1240.5,414.6 1240.6,414.5 1240.7,414.5 1240.7,414.5 1240.8,414.5 1240.8,414.5 1240.9,414.5 1240.9,414.5 1240.9,414.5 1240.9,414.6 1240.9,414.7 1240.8,414.7 1240.8,414.8 1240.7,414.9 1240.6,415.0" fill="none" stroke="#2a2a2a" stroke-width="1.0"/>
<polyline points="1240.6,415.0 1240.6,415.2 1240.5,415.3 1240.4,415.5 1240.2,415.7 1240.1,415.8 1240.0,416.0 1239.8,416.2 1239.7,416.5 1239.5,416.7 1239.3,417.0 1239.1,417.2 1238.9,417.5 1238.6,417.8 1238.4,418.1 1238.2,418.4 1237.9,418.7 1237.6,419.1 1237.4,419.4 1237.1,419.8 1236.8,420.2 1236.4,420.6 1236.1,421.0 1235.8,421.4 1235.5,421.9 1235.1,422.3 1234.7,422.8 1234.4,423.3 1234.0,423.7 1233.6,424.2 1233.2,424.8 1232.8,425.3 1232.4,425.8 1232.0,426.4 1231.5,427.0 1231.1,427.5 1230.6,428.1 1230.2,428.7 1229.7,429.4 1229.3,430.0 1228.8,430.6 1228.3,431.3 1227.8,432.0 1227.4,432.7 1226.9,433.3 1226.4,434.1 1225.9,434.8 1225.4,435.5 1224.9,436.2 1224.4,437.0 1223.9,437.8 1223.4,438.5 1222.8,439.3 1222.3,440.1 1221.8,440.9 1221.3,441.7 1220.8,442.6 1220.3,443.4 1219.7,444.3 1219.2,445.1 1218.7,446.0 1218.2,446.9 1217.7,447.8 1217.2,448.6 1216.7,449.5 1216.2,450.5 1215.7,451.4 1215.2,452.3 1214.7,453.2 1214.2,454.2 1213.7,455.1 1213.2,456.1 1212.7,457.1 1212.3,458.0 1211.8,459.0 1211.3,460.0 1210.9,461.0 1210.4,461.9 1210.0,462.9 1209.6,463.9 1209.1,464.9 1208.7,465.9 1208.3,466.9 1207.9,468.0 1207.5,469.0 1207.1,470.0 1206.8,471.0 1206.4,472.0 1206.0,473.0 1205.7,474.0 1205.3,475.1 1205.0,476.1 1204.7,477.1 1204.3,478.1 1204.0,479.1 1203.7,480.1 1203.5,481.1 1203.2,482.2 1202.9,483.2 1202.6,484.2 1202.4,485.1 1202.2,486.1 1201.9,487.1 1201.7,488.1 1201.5,489.1 1201.3,490.1 1201.1,491.0 1200.9,492.0 1200.7,492.9 1200.6,493.9 1200.4,494.8 1200.3,495.7 1200.1,496.7 1200.0,497.6 1199.9,498.5 1199.8,499.4 1199.7,500.2 1199.6,501.1 1199.5,502.0 1199.4,502.8 1199.3,503.7 1199.3,504.5 1199.2,505.3 1199.2,506.1 1199.1,506.9 1199.1,507.7 1199.0,508.5 1199.0,509.2 1199.0,510.0 1199.0,510.7 1199.0,511.4 1199.0,512.1 1199.0,512.8 1199.0,513.5 1199.0,514.1 1199.1,514.8 1199.1,515.4 1199.1,516.0 1199.2,516.6 1199.2,517.2 1199.3,517.8 1199.3,518.3 1199.4,518.9 1199.4,519.4 1199.5,519.9 1199.6,520.4 1199.6,520.9 1199.7,521.3 1199.8,521.7 1199.9,522.2 1199.9,522.6 1200.0,523.0 1200.1,523.3 1200.2,523.7 1200.3,524.0 1200.4,524.3 1200.5,524.6 1200.5,524.9 1200.6,525.2 1200.7,525.4 1200.8,525.7 1200.9,525.9 1201.0,526.1 1201.1,526.2 1201.2,526.4 1201.3,526.5 1201.4,526.7 1201.5,526.8 1201.6,526.8 1201.7,526.9 1201.8,527.0 1201.9,527.0 1202.0,527.0 1202.1,527.0 1202.1,527.0 1202.2,526.9 1202.3,526.9 1202.4,526.8 1202.5,526.7 1202.6,526.6 1202.7,526.4 1202.8,526.3 1202.9,526.1 1202.9,525.9 1203.0,525.7" fill="none" stroke="#2a2a2a" stroke-width="1.0" stroke-dasharray="5 2.4"/>
<polyline points="1194.8,528.5 1194.8,528.3 1194.8,528.0 1194.8,527.7 1194.8,527.4 1194.8,527.1 1194.8,526.8 1194.8,526.4 1194.8,526.1 1194.9,525.7 1194.9,525.3 1194.9,524.9 1194.9,524.4 1194.9,524.0 1194.9,523.5 1194.9,523.0 1194.9,522.6 1194.9,522.0 1194.9,521.5 1194.9,521.0 1194.9,520.4 1194.9,519.9 1194.9,519.3 1194.9,518.7 1194.9,518.1 1194.9,517.4 1195.0,516.8 1195.0,516.1 1195.0,515.5 1195.0,514.8 1195.0,514.1 1195.1,513.4 1195.1,512.6 1195.1,511.9 1195.1,511.2 1195.2,510.4 1195.2,509.6 1195.3,508.9 1195.3,508.1 1195.3,507.3 1195.4,506.5 1195.5,505.6 1195.5,504.8 1195.6,504.0 1195.6,503.1 1195.7,502.2 1195.8,501.4 1195.9,500.5 1196.0,499.6 1196.1,498.7 1196.2,497.8 1196.3,496.9 1196.4,496.0 1196.5,495.1 1196.6,494.1 1196.8,493.2 1196.9,492.2 1197.0,491.3 1197.2,490.4 1197.3,489.4 1197.5,488.4 1197.7,487.5 1197.8,486.5 1198.0,485.5 1198.2,484.6 1198.4,483.6 1198.6,482.6 1198.8,481.6 1199.0,480.6 1199.3,479.7 1199.5,478.7 1199.8,477.7 1200.0,476.7 1200.3,475.7 1200.5,474.7 1200.8,473.8 1201.1,472.8 1201.4,471.8 1201.7,470.8 1202.0,469.8 1202.3,468.9 1202.6,467.9 1202.9,466.9 1203.2,466.0 1203.6,465.0 1203.9,464.1 1204.3,463.1 1204.6,462.2 1205.0,461.2 1205.4,460.3 1205.8,459.4 1206.1,458.4 1206.5,457.5 1206.9,456.6 1207.3,455.7 1207.7,454.8 1208.1,453.9 1208.6,453.0 1209.0,452.1 1209.4,451.3 1209.8,450.4 1210.3,449.5 1210.7,448.7 1211.1,447.9 1211.6,447.0 1212.0,446.2 1212.5,445.4 1212.9,444.6 1213.4,443.8 1213.8,443.0 1214.3,442.3 1214.7,441.5 1215.2,440.7 1215.6,440.0 1216.1,439.3 1216.6,438.5 1217.0,437.8 1217.5,437.1 1217.9,436.4 1218.4,435.8 1218.8,435.1 1219.3,434.4 1219.7,433.8 1220.2,433.2 1220.6,432.6 1221.0,431.9 1221.5,431.3 1221.9,430.8 1222.3,430.2 1222.8,429.6 1223.2,429.1 1223.6,428.5 1224.0,428.0 1224.4,427.5 1224.8,427.0 1225.2,426.5 1225.5,426.0 1225.9,425.6 1226.3,425.1 1226.6,424.7 1227.0,424.2 1227.3,423.8 1227.7,423.4 1228.0,423.0 1228.3,422.7 1228.6,422.3 1228.9,421.9 1229.2,421.6 1229.5,421.3 1229.7,421.0 1230.0,420.7 1230.3,420.4 1230.5,420.1 1230.7,419.8 1230.9,419.6 1231.2,419.4 1231.4,419.1 1231.5,418.9 1231.7,418.7 1231.9,418.5 1232.0,418.4 1232.2,418.2 1232.3,418.1 1232.4,417.9 1232.5,417.8 1232.6,417.7 1232.7,417.6 1232.8,417.5 1232.8,417.5 1232.9,417.4 1232.9,417.4 1232.9,417.4 1232.9,417.3 1232.9,417.3 1232.9,417.4 1232.9,417.4 1232.8,417.4 1232.8,417.5 1232.7,417.6 1232.7,417.6 1232.6,417.7 1232.5,417.8" fill="none" stroke="#2a2a2a" stroke-width="1.0"/>
<polyline points="1232.5,417.8 1232.3,418.0 1232.2,418.1 1232.1,418.2 1231.9,418.4 1231.8,418.6 1231.6,418.8 1231.4,419.0 1231.2,419.2 1231.0,419.4 1230.8,419.7 1230.6,419.9 1230.3,420.2 1230.1,420.5 1229.8,420.8 1229.5,421.1 1229.3,421.4 1229.0,421.8 1228.7,422.1 1228.4,422.5 1228.0,422.9 1227.7,423.3 1227.4,423.7 1227.0,424.1 1226.7,424.6 1226.3,425.0 1225.9,425.5 1225.5,426.0 1225.1,426.5 1224.7,427.0 1224.3,427.5 1223.9,428.0 1223.5,428.6 1223.1,429.1 1222.7,429.7 1222.2,430.3 1221.8,430.9 1221.3,431.5 1220.9,432.2 1220.4,432.8 1220.0,433.5 1219.5,434.1 1219.0,434.8 1218.6,435.5 1218.1,436.2 1217.6,437.0 1217.2,437.7 1216.7,438.4 1216.2,439.2 1215.7,440.0 1215.2,440.7 1214.7,441.5 1214.3,442.3 1213.8,443.2 1213.3,444.0 1212.8,444.8 1212.3,445.7 1211.9,446.5 1211.4,447.4 1210.9,448.3 1210.4,449.2 1210.0,450.1 1209.5,451.0 1209.0,451.9 1208.6,452.8 1208.1,453.8 1207.7,454.7 1207.2,455.7 1206.8,456.6 1206.3,457.6 1205.9,458.6 1205.5,459.5 1205.1,460.5 1204.7,461.5 1204.3,462.5 1203.8,463.5 1203.5,464.5 1203.1,465.5 1202.7,466.6 1202.3,467.6 1201.9,468.6 1201.6,469.6 1201.2,470.7 1200.9,471.7 1200.6,472.7 1200.2,473.8 1199.9,474.8 1199.6,475.8 1199.3,476.9 1199.0,477.9 1198.7,478.9 1198.4,480.0 1198.2,481.0 1197.9,482.0 1197.7,483.1 1197.4,484.1 1197.2,485.1 1196.9,486.1 1196.7,487.2 1196.5,488.2 1196.3,489.2 1196.1,490.2 1195.9,491.2 1195.8,492.2 1195.6,493.1 1195.4,494.1 1195.3,495.1 1195.1,496.1 1195.0,497.0 1194.8,498.0 1194.7,498.9 1194.6,499.8 1194.5,500.8 1194.4,501.7 1194.3,502.6 1194.2,503.5 1194.1,504.3 1194.0,505.2 1194.0,506.1 1193.9,506.9 1193.9,507.8 1193.8,508.6 1193.8,509.4 1193.7,510.2 1193.7,511.0 1193.6,511.8 1193.6,512.5 1193.6,513.3 1193.6,514.0 1193.6,514.7 1193.5,515.4 1193.5,516.1 1193.5,516.8 1193.5,517.5 1193.5,518.1 1193.5,518.7 1193.5,519.3 1193.6,519.9 1193.6,520.5 1193.6,521.1 1193.6,521.6 1193.6,522.2 1193.7,522.7 1193.7,523.2 1193.7,523.7 1193.7,524.1 1193.8,524.6 1193.8,525.0 1193.8,525.4 1193.9,525.8 1193.9,526.2 1193.9,526.6 1194.0,526.9 1194.0,527.3 1194.0,527.6 1194.1,527.9 1194.1,528.1 1194.1,528.4 1194.2,528.6 1194.2,528.8 1194.2,529.0 1194.3,529.2 1194.3,529.4 1194.3,529.5 1194.4,529.7 1194.4,529.8 1194.4,529.9 1194.5,530.0 1194.5,530.0 1194.5,530.1 1194.5,530.1 1194.6,530.1 1194.6,530.1 1194.6,530.0 1194.6,530.0 1194.7,529.9 1194.7,529.8 1194.7,529.7 1194.7,529.6 1194.7,529.5 1194.7,529.3 1194.8,529.1 1194.8,528.9 1194.8,528.7 1194.8,528.5" fill="none" stroke="#2a2a2a" stroke-width="1.0" stroke-dasharray="5 2.4"/>
<polyline points="1197.6,491.5 1197.8,490.6 1198.0,489.6 1198.3,488.7 1198.5,487.7 1198.8,486.7 1199.1,485.8 1199.3,484.8 1199.6,483.8 1199.9,482.9 1200.2,481.9 1200.5,480.9 1200.9,480.0 1201.2,479.0 1201.5,478.1 1201.9,477.1 1202.2,476.1 1202.6,475.2 1203.0,474.2 1203.3,473.3 1203.7,472.3 1204.1,471.4 1204.5,470.5 1204.9,469.5 1205.3,468.6 1205.7,467.7 1206.2,466.7 1206.6,465.8 1207.0,464.9 1207.5,464.0 1207.9,463.1 1208.4,462.2 1208.8,461.3 1209.3,460.4 1209.8,459.6 1210.2,458.7 1210.7,457.8 1211.2,457.0 1211.6,456.1 1212.1,455.3 1212.6,454.5 1213.1,453.7 1213.6,452.8 1214.1,452.0 1214.6,451.2 1215.0,450.5 1215.5,449.7 1216.0,448.9 1216.5,448.2 1217.0,447.4 1217.5,446.7 1218.0,445.9 1218.4,445.2 1218.9,444.5 1219.4,443.8 1219.9,443.1 1220.4,442.4 1220.8,441.8 1221.3,441.1 1221.7,440.5 1222.2,439.8 1222.7,439.2 1223.1,438.6 1223.5,438.0 1224.0,437.4 1224.4,436.8 1224.8,436.2 1225.3,435.7 1225.7,435.1 1226.1,434.6 1226.5,434.1 1226.9,433.6 1227.2,433.1 1227.6,432.6 1228.0,432.1 1228.3,431.6 1228.7,431.2 1229.0,430.7 1229.3,430.3 1229.7,429.9 1230.0,429.5 1230.3,429.1 1230.6,428.7 1230.8,428.4 1231.1,428.0 1231.4,427.7 1231.6,427.3 1231.9,427.0 1232.1,426.7 1232.3,426.4 1232.5,426.2 1232.7,425.9 1232.9,425.7 1233.0,425.4 1233.2,425.2 1233.3,425.0 1233.5,424.8 1233.6,424.6 1233.7,424.4 1233.8,424.3 1233.9,424.1 1234.0,424.0 1234.0,423.9 1234.1,423.8 1234.1,423.7 1234.1,423.6 1234.2,423.5 1234.2,423.5 1234.2,423.5 1234.1,423.4 1234.1,423.4 1234.0,423.4 1234.0,423.4 1233.9,423.5 1233.8,423.5 1233.7,423.6 1233.6,423.7 1233.5,423.7 1233.4,423.8" fill="none" stroke="#2a2a2a" stroke-width="1.0"/>
<polyline points="1233.4,423.8 1233.2,424.0 1233.1,424.1 1232.9,424.2 1232.7,424.4 1232.6,424.6 1232.4,424.8 1232.2,425.0 1231.9,425.2 1231.7,425.4 1231.5,425.6 1231.2,425.9 1231.0,426.2 1230.7,426.5 1230.4,426.8 1230.1,427.1 1229.8,427.4 1229.5,427.8 1229.2,428.1 1228.9,428.5 1228.6,428.9 1228.2,429.3 1227.9,429.7 1227.5,430.1 1227.2,430.6 1226.8,431.0 1226.4,431.5 1226.1,432.0 1225.7,432.5 1225.3,433.0 1224.9,433.6 1224.5,434.1 1224.1,434.7 1223.7,435.3 1223.2,435.8 1222.8,436.5 1222.4,437.1 1222.0,437.7 1221.5,438.4 1221.1,439.0 1220.7,439.7 1220.2,440.4 1219.8,441.1 1219.4,441.8 1218.9,442.5 1218.5,443.3 1218.0,444.0 1217.6,444.8 1217.2,445.6 1216.7,446.4 1216.3,447.2 1215.8,448.0 1215.4,448.8 1215.0,449.6 1214.5,450.5 1214.1,451.4 1213.7,452.2 1213.2,453.1 1212.8,454.0 1212.4,454.9 1212.0,455.8 1211.5,456.8 1211.1,457.7 1210.7,458.6 1210.3,459.6 1209.9,460.5 1209.5,461.5 1209.2,462.5 1208.8,463.5 1208.4,464.5 1208.0,465.4 1207.7,466.5 1207.3,467.5 1207.0,468.5 1206.6,469.5 1206.3,470.5" fill="none" stroke="#2a2a2a" stroke-width="1.0" stroke-dasharray="5 2.4"/>
<circle cx="1498.4" cy="505.3" r="2.7" fill="#436fb1" stroke="#555" stroke-width="0.3"/>
<circle cx="1488.2" cy="496.4" r="2.7" fill="#7fb6d5" stroke="#555" stroke-width="0.3"/>
<circle cx="1469.7" cy="485.3" r="2.7" fill="#c6e6f0" stroke="#555" stroke-width="0.3"/>
<circle cx="1444.1" cy="472.8" r="2.7" fill="#f9e29d" stroke="#555" stroke-width="0.3"/>
<circle cx="1413.2" cy="459.8" r="2.7" fill="#fb9f5a" stroke="#555" stroke-width="0.3"/>
<circle cx="1379.1" cy="447.0" r="2.7" fill="#e34932" stroke="#555" stroke-width="0.3"/>
<circle cx="1344.2" cy="435.4" r="2.7" fill="#ac0626" stroke="#555" stroke-width="0.3"/>
<circle cx="1310.7" cy="425.8" r="2.7" fill="#e04430" stroke="#555" stroke-width="0.3"/>
<circle cx="1281.1" cy="418.8" r="2.7" fill="#fa9a57" stroke="#555" stroke-width="0.3"/>
<circle cx="1257.2" cy="415.0" r="2.7" fill="#fce094" stroke="#555" stroke-width="0.3"/>
<circle cx="1240.8" cy="414.5" r="2.7" fill="#cbe8f2" stroke="#555" stroke-width="0.3"/>
<circle cx="1232.9" cy="417.4" r="2.7" fill="#83b9d7" stroke="#555" stroke-width="0.3"/>
<circle cx="1234.2" cy="423.5" r="2.7" fill="#4575b4" stroke="#555" stroke-width="0.3"/>
<polygon points="1590.1,444.0 1606.9,448.3 1594.4,475.0 1577.6,470.6" fill="#a9002b" stroke="#2a2a2a" stroke-width="0.7" stroke-linejoin="round"/>
<polygon points="1577.6,470.6 1594.4,475.0 1581.9,501.7 1565.1,497.3" fill="#da3b2b" stroke="#2a2a2a" stroke-width="0.7" stroke-linejoin="round"/>
<polygon points="1565.1,497.3 1581.9,501.7 1569.4,528.4 1552.6,523.9" fill="#f37b4d" stroke="#2a2a2a" stroke-width="0.7" stroke-linejoin="round"/>
<polygon points="1552.6,523.9 1569.4,528.4 1556.9,555.1 1540.1,550.5" fill="#fdb871" stroke="#2a2a2a" stroke-width="0.7" stroke-linejoin="round"/>
<polygon points="1540.1,550.5 1556.9,555.1 1544.3,581.8 1527.6,577.1" fill="#fde8a2" stroke="#2a2a2a" stroke-width="0.7" stroke-linejoin="round"/>
<polygon points="1527.6,577.1 1544.3,581.8 1531.8,608.5 1515.1,603.8" fill="#eff3dc" stroke="#2a2a2a" stroke-width="0.7" stroke-linejoin="round"/>
<polygon points="1515.1,603.8 1531.8,608.5 1519.3,635.2 1502.6,630.4" fill="#c2e2ee" stroke="#2a2a2a" stroke-width="0.7" stroke-linejoin="round"/>
<polygon points="1502.6,630.4 1519.3,635.2 1506.8,661.9 1490.1,657.0" fill="#8ec2df" stroke="#2a2a2a" stroke-width="0.7" stroke-linejoin="round"/>
<polygon points="1490.1,657.0 1506.8,661.9 1494.3,688.6 1477.6,683.7" fill="#4a7fbf" stroke="#2a2a2a" stroke-width="0.7" stroke-linejoin="round"/>
<polygon points="1477.6,683.7 1494.3,688.6 1481.8,715.3 1465.1,710.3" fill="#3434a0" stroke="#2a2a2a" stroke-width="0.7" stroke-linejoin="round"/>
<text transform="matrix(0.9688 0.2480 -0.4249 0.9052 1599.4 477.2)" x="0" y="0" style="font-family:'Liberation Sans',sans-serif;font-size:16px" fill="#111" stroke="#111" stroke-width="0.3">90</text>
<text transform="matrix(0.9688 0.2480 -0.4249 0.9052 1586.9 503.9)" x="0" y="0" style="font-family:'Liberation Sans',sans-serif;font-size:16px" fill="#111" stroke="#111" stroke-width="0.3">80</text>
<text transform="matrix(0.9688 0.2480 -0.4249 0.9052 1574.4 530.6)" x="0" y="0" style="font-family:'Liberation Sans',sans-serif;font-size:16px" fill="#111" stroke="#111" stroke-width="0.3">70</text>
<text transform="matrix(0.9688 0.2480 -0.4249 0.9052 1561.9 557.3)" x="0" y="0" style="font-family:'Liberation Sans',sans-serif;font-size:16px" fill="#111" stroke="#111" stroke-width="0.3">60</text>
<text transform="matrix(0.9688 0.2480 -0.4249 0.9052 1549.3 584.0)" x="0" y="0" style="font-family:'Liberation Sans',sans-serif;font-size:16px" fill="#111" stroke="#111" stroke-width="0.3">50</text>
<text transform="matrix(0.9688 0.2480 -0.4249 0.9052 1536.8 610.7)" x="0" y="0" style="font-family:'Liberation Sans',sans-serif;font-size:16px" fill="#111" stroke="#111" stroke-width="0.3">40</text>
<text transform="matrix(0.9688 0.2480 -0.4249 0.9052 1524.3 637.4)" x="0" y="0" style="font-family:'Liberation Sans',sans-serif;font-size:16px" fill="#111" stroke="#111" stroke-width="0.3">30</text>
<text transform="matrix(0.9688 0.2480 -0.4249 0.9052 1511.8 664.1)" x="0" y="0" style="font-family:'Liberation Sans',sans-serif;font-size:16px" fill="#111" stroke="#111" stroke-width="0.3">20</text>
<text transform="matrix(0.9688 0.2480 -0.4249 0.9052 1499.3 690.8)" x="0" y="0" style="font-family:'Liberation Sans',sans-serif;font-size:16px" fill="#111" stroke="#111" stroke-width="0.3">10</text>
<text transform="matrix(0.9688 0.2480 -0.4249 0.9052 1486.8 717.5)" x="0" y="0" style="font-family:'Liberation Sans',sans-serif;font-size:16px" fill="#111" stroke="#111" stroke-width="0.3">0</text>
<text transform="matrix(0.9688 0.2480 -0.4249 0.9052 1596.5 438.5)" x="0" y="0" style="font-family:'Liberation Sans',sans-serif;font-size:16px" fill="#111" stroke="#111" stroke-width="0.3">degrees</text>
<path d="M1151 773.5L1167 775.6M1151 773.5L1153.2 761.6M1151 773.5L1150.5 764" stroke="#4a5058" stroke-width="0.8" fill="none"/>
<text x="1157" y="764" style="font-family:'Liberation Sans',sans-serif;font-size:5px" fill="#333">y</text>
<text x="1166" y="778" style="font-family:'Liberation Sans',sans-serif;font-size:5px" fill="#333">x</text>
</g>
</svg></body></html>
